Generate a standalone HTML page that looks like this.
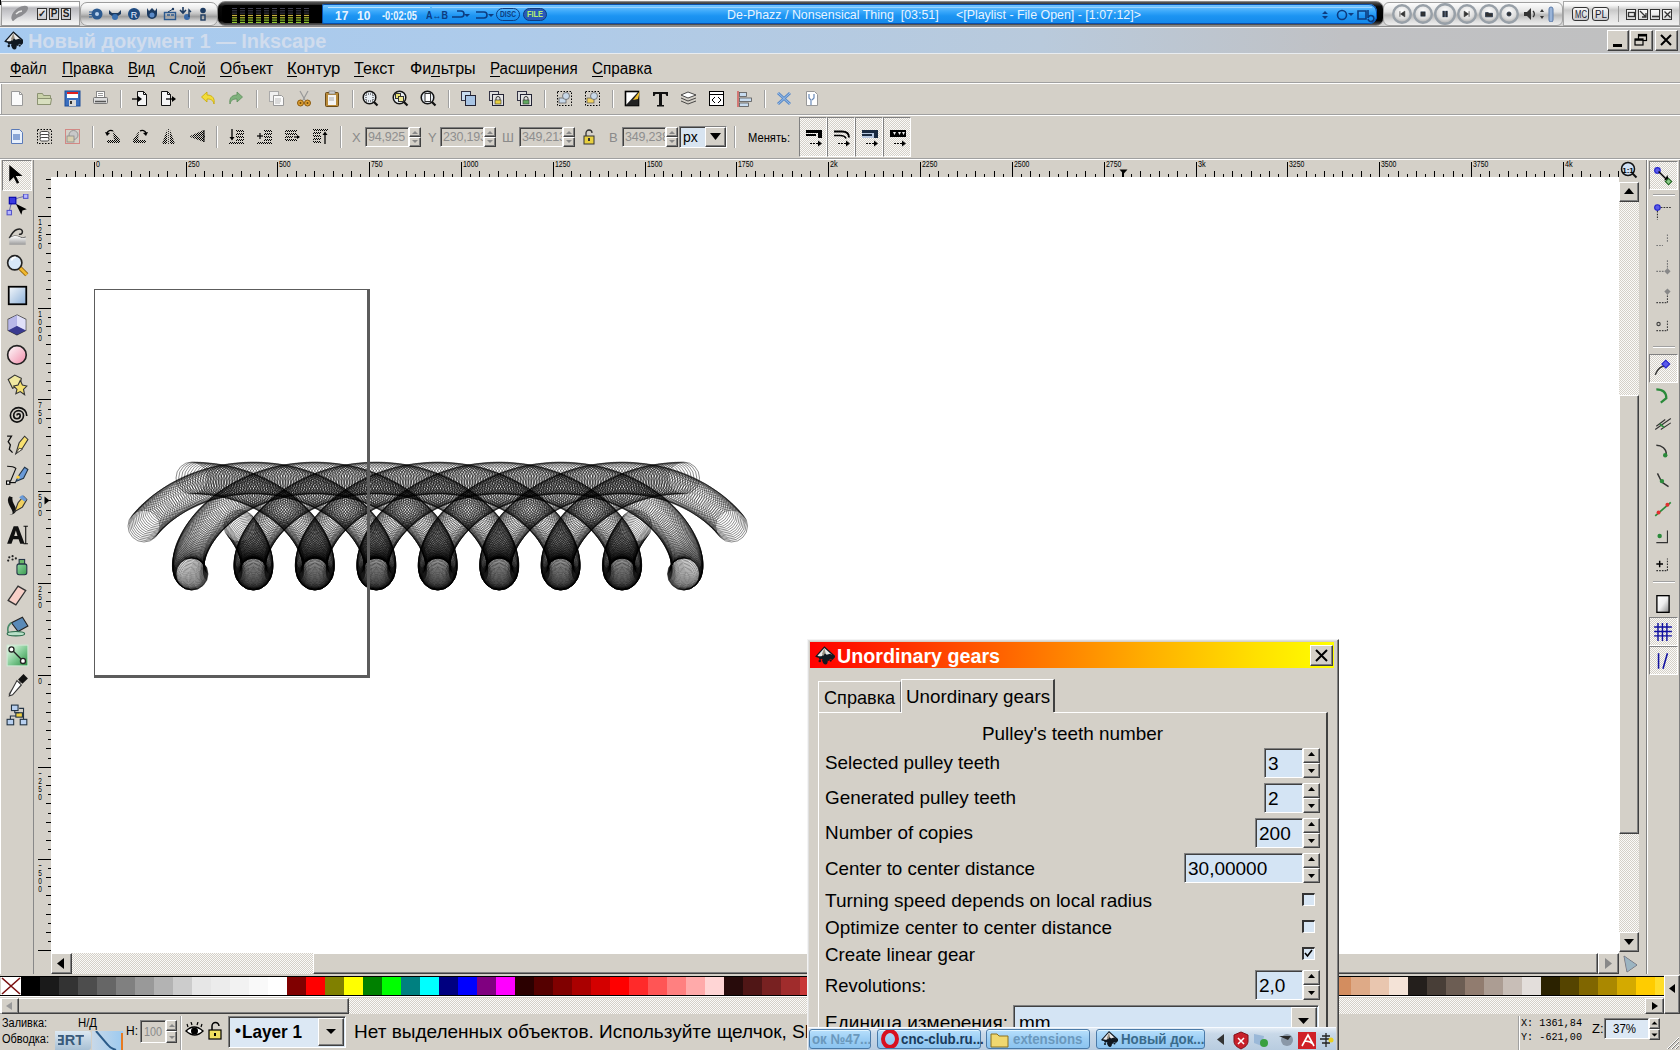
<!DOCTYPE html><html><head><meta charset="utf-8"><style>
html,body{margin:0;padding:0;width:1680px;height:1050px;overflow:hidden;background:#d4d0c8;font-family:"Liberation Sans", sans-serif;}
div,svg{font-family:"Liberation Sans", sans-serif;}
</style></head><body>
<svg width="0" height="0" style="position:absolute"><defs>
<linearGradient id="gBlue" x1="0" y1="0" x2="1" y2="1"><stop offset="0" stop-color="#f4f8fc"/><stop offset="1" stop-color="#8cb0d8"/></linearGradient>
<linearGradient id="gPink" x1="0" y1="0" x2="1" y2="1"><stop offset="0" stop-color="#fff"/><stop offset="1" stop-color="#f08aa8"/></linearGradient>
<linearGradient id="gGreen" x1="0" y1="0" x2="1" y2="1"><stop offset="0" stop-color="#8fd8a0"/><stop offset="1" stop-color="#3a9a50"/></linearGradient>
<linearGradient id="gBlueV" x1="0" y1="0" x2="0" y2="1"><stop offset="0" stop-color="#5db6ff"/><stop offset=".5" stop-color="#1c8ef2"/><stop offset="1" stop-color="#0a6ad8"/></linearGradient>
<linearGradient id="gGray" x1="0" y1="0" x2="0" y2="1"><stop offset="0" stop-color="#fff"/><stop offset="1" stop-color="#9a9a9a"/></linearGradient>
<radialGradient id="gBtn" cx=".5" cy=".35" r=".7"><stop offset="0" stop-color="#ffffff"/><stop offset=".6" stop-color="#dcdcdc"/><stop offset="1" stop-color="#9c9c9c"/></radialGradient>
<pattern id="pD" width="2" height="2" patternUnits="userSpaceOnUse"><rect width="1" height="1" fill="#000"/><rect x="1" y="1" width="1" height="1" fill="#000"/></pattern><pattern id="pChk" width="2" height="2" patternUnits="userSpaceOnUse"><rect width="2" height="2" fill="#fff"/><rect width="1" height="1" fill="#d4d0c8"/><rect x="1" y="1" width="1" height="1" fill="#d4d0c8"/></pattern>
</defs></svg>
<div style="position:absolute;left:0px;top:0px;width:1680px;height:27px;background:linear-gradient(#f6f6f6,#e4e4e4 50%,#cfcfcf);"></div>
<div style="position:absolute;left:0px;top:26px;width:1680px;height:1px;background:#8a8a8a"></div>
<div style="position:absolute;left:1px;top:1px;width:79px;height:25px;background:linear-gradient(#fbfbfb,#fff 14%,#b8b8bc 26%,#d0d0d4 55%,#ececec 85%,#f4f4f4);border:1px solid #9a9a9a;box-sizing:border-box"></div>
<div style="position:absolute;left:0px;top:0px;width:1px;height:5px;background:#000"></div>
<svg style="position:absolute;left:9px;top:5px;" width="22" height="18" viewBox="0 0 22 18"><path d="M3 15c-2-3 1-9 6-12s10-3 10 0-4 7-9 9-6 6-7 3z" fill="#8c8c90"/><path d="M7 9q3-3 6-3" stroke="#e8e8e8" stroke-width="1.6" fill="none"/></svg>
<div style="position:absolute;left:37px;top:8px;width:10px;height:12px;border:1px solid #333;box-sizing:border-box;background:linear-gradient(#e8e8e8,#c8c8cc)"></div>
<div style="position:absolute;left:37px;top:9px;font-size:10px;line-height:10px;color:#222;font-weight:bold;white-space:pre;width:10px;text-align:center">✓</div>
<div style="position:absolute;left:49px;top:8px;width:10px;height:12px;border:1px solid #333;box-sizing:border-box;background:linear-gradient(#e8e8e8,#c8c8cc)"></div>
<div style="position:absolute;left:49px;top:9px;font-size:10px;line-height:10px;color:#222;font-weight:bold;white-space:pre;width:10px;text-align:center">P</div>
<div style="position:absolute;left:61px;top:8px;width:10px;height:12px;border:1px solid #333;box-sizing:border-box;background:linear-gradient(#e8e8e8,#c8c8cc)"></div>
<div style="position:absolute;left:61px;top:9px;font-size:10px;line-height:10px;color:#222;font-weight:bold;white-space:pre;width:10px;text-align:center">S</div>
<div style="position:absolute;left:80px;top:2px;width:138px;height:24px;background:linear-gradient(#fdfdfd,#ececec 25%,#c4c4c4 48%,#9e9e9e 62%,#d0d0d0 80%,#f0f0f0);border:1px solid #9c9c9c;box-sizing:border-box;border-radius:7px"></div>
<svg style="position:absolute;left:89px;top:7px;" width="14" height="14" viewBox="0 0 14 14"><circle cx="8" cy="7" r="5.5" fill="#2c5a90"/><circle cx="8" cy="7" r="2" fill="#b8d0ec"/><path d="M0 5h3M0 7.5h3M0 10h3" stroke="#2c5a90" stroke-width="1.2"/></svg>
<svg style="position:absolute;left:108px;top:7px;" width="14" height="14" viewBox="0 0 14 14"><path d="M1 3l3 3h6l3-3v4l-3 2H4L1 7z" fill="#1c3a60"/><circle cx="7" cy="10" r="3" fill="#3a70b0"/></svg>
<svg style="position:absolute;left:127px;top:7px;" width="14" height="14" viewBox="0 0 14 14"><circle cx="7" cy="7" r="6" fill="#1e4a80"/><text x="7" y="10.5" font-size="9" text-anchor="middle" fill="#e8f0ff" font-family="Liberation Sans">R</text></svg>
<svg style="position:absolute;left:145px;top:7px;" width="14" height="14" viewBox="0 0 14 14"><path d="M2 1l2 3 3-3 3 3 2-3v6a5 5 0 01-10 0z" fill="#1c3a60"/><circle cx="7" cy="8" r="2.5" fill="#5a8ac8"/></svg>
<svg style="position:absolute;left:163px;top:7px;" width="14" height="14" viewBox="0 0 14 14"><rect x="1.5" y="5.5" width="11" height="7" fill="none" stroke="#2c5a90" stroke-width="1.4"/><path d="M4 8h3M8 8h3" stroke="#2c5a90" stroke-width="1.3"/><path d="M5 5l5-3" stroke="#1c3a60"/><circle cx="10" cy="2" r="1.2" fill="#1c3a60"/></svg>
<svg style="position:absolute;left:179px;top:7px;" width="14" height="14" viewBox="0 0 14 14"><path d="M4 0v5M1 3l3 3 3-3" fill="none" stroke="#1c3a60" stroke-width="1.6"/><circle cx="8" cy="10" r="3" fill="#3a6aa8"/><path d="M10 10V3l2 2" fill="none" stroke="#1c3a60" stroke-width="1.4"/></svg>
<svg style="position:absolute;left:196px;top:7px;" width="14" height="14" viewBox="0 0 14 14"><circle cx="7" cy="3.5" r="2.8" fill="#1c3a60"/><rect x="5" y="8" width="4" height="5" fill="none" stroke="#1c3a60" stroke-width="1.4"/></svg>
<div style="position:absolute;left:217px;top:1px;width:1167px;height:25px;background:linear-gradient(#5a5a5a,#0a0a0a 20%,#000 80%,#5a5a5a);border:1px solid #888;box-sizing:border-box;border-radius:8px"></div>
<div style="position:absolute;left:222px;top:5px;width:102px;height:18px;background:#000;border-radius:4px 0 0 4px"></div>
<svg style="position:absolute;left:222px;top:5px;" width="102" height="18" viewBox="0 0 102 18"><rect x="10" y="3.0" width="5" height="1" fill="#404050"/><rect x="10" y="5.3" width="5" height="1" fill="#404050"/><rect x="10" y="7.6" width="5" height="1" fill="#404050"/><rect x="10" y="9.9" width="5" height="1.2" fill="#c8b040"/><rect x="10" y="12.2" width="5" height="1.2" fill="#b8c830"/><rect x="10" y="14.5" width="5" height="1.2" fill="#90c830"/><rect x="10" y="16.8" width="5" height="1.2" fill="#90c830"/><rect x="18" y="3.0" width="5" height="1" fill="#404050"/><rect x="18" y="5.3" width="5" height="1" fill="#404050"/><rect x="18" y="7.6" width="5" height="1" fill="#404050"/><rect x="18" y="9.9" width="5" height="1.2" fill="#c8b040"/><rect x="18" y="12.2" width="5" height="1.2" fill="#b8c830"/><rect x="18" y="14.5" width="5" height="1.2" fill="#90c830"/><rect x="18" y="16.8" width="5" height="1.2" fill="#90c830"/><rect x="26" y="3.0" width="5" height="1" fill="#404050"/><rect x="26" y="5.3" width="5" height="1" fill="#404050"/><rect x="26" y="7.6" width="5" height="1" fill="#404050"/><rect x="26" y="9.9" width="5" height="1.2" fill="#c8b040"/><rect x="26" y="12.2" width="5" height="1.2" fill="#b8c830"/><rect x="26" y="14.5" width="5" height="1.2" fill="#90c830"/><rect x="26" y="16.8" width="5" height="1.2" fill="#90c830"/><rect x="34" y="3.0" width="5" height="1" fill="#404050"/><rect x="34" y="5.3" width="5" height="1" fill="#404050"/><rect x="34" y="7.6" width="5" height="1" fill="#404050"/><rect x="34" y="9.9" width="5" height="1.2" fill="#c8b040"/><rect x="34" y="12.2" width="5" height="1.2" fill="#b8c830"/><rect x="34" y="14.5" width="5" height="1.2" fill="#90c830"/><rect x="34" y="16.8" width="5" height="1.2" fill="#90c830"/><rect x="42" y="3.0" width="5" height="1" fill="#404050"/><rect x="42" y="5.3" width="5" height="1" fill="#404050"/><rect x="42" y="7.6" width="5" height="1" fill="#404050"/><rect x="42" y="9.9" width="5" height="1.2" fill="#c8b040"/><rect x="42" y="12.2" width="5" height="1.2" fill="#b8c830"/><rect x="42" y="14.5" width="5" height="1.2" fill="#90c830"/><rect x="42" y="16.8" width="5" height="1.2" fill="#90c830"/><rect x="50" y="3.0" width="5" height="1" fill="#404050"/><rect x="50" y="5.3" width="5" height="1" fill="#404050"/><rect x="50" y="7.6" width="5" height="1" fill="#404050"/><rect x="50" y="9.9" width="5" height="1.2" fill="#c8b040"/><rect x="50" y="12.2" width="5" height="1.2" fill="#b8c830"/><rect x="50" y="14.5" width="5" height="1.2" fill="#90c830"/><rect x="50" y="16.8" width="5" height="1.2" fill="#90c830"/><rect x="58" y="3.0" width="5" height="1" fill="#404050"/><rect x="58" y="5.3" width="5" height="1" fill="#404050"/><rect x="58" y="7.6" width="5" height="1" fill="#404050"/><rect x="58" y="9.9" width="5" height="1.2" fill="#c8b040"/><rect x="58" y="12.2" width="5" height="1.2" fill="#b8c830"/><rect x="58" y="14.5" width="5" height="1.2" fill="#90c830"/><rect x="58" y="16.8" width="5" height="1.2" fill="#90c830"/><rect x="66" y="3.0" width="5" height="1" fill="#404050"/><rect x="66" y="5.3" width="5" height="1" fill="#404050"/><rect x="66" y="7.6" width="5" height="1" fill="#404050"/><rect x="66" y="9.9" width="5" height="1.2" fill="#c8b040"/><rect x="66" y="12.2" width="5" height="1.2" fill="#b8c830"/><rect x="66" y="14.5" width="5" height="1.2" fill="#90c830"/><rect x="66" y="16.8" width="5" height="1.2" fill="#90c830"/><rect x="74" y="3.0" width="5" height="1" fill="#404050"/><rect x="74" y="5.3" width="5" height="1" fill="#404050"/><rect x="74" y="7.6" width="5" height="1" fill="#404050"/><rect x="74" y="9.9" width="5" height="1.2" fill="#c8b040"/><rect x="74" y="12.2" width="5" height="1.2" fill="#b8c830"/><rect x="74" y="14.5" width="5" height="1.2" fill="#90c830"/><rect x="74" y="16.8" width="5" height="1.2" fill="#90c830"/><rect x="82" y="3.0" width="5" height="1" fill="#404050"/><rect x="82" y="5.3" width="5" height="1" fill="#404050"/><rect x="82" y="7.6" width="5" height="1" fill="#404050"/><rect x="82" y="9.9" width="5" height="1.2" fill="#c8b040"/><rect x="82" y="12.2" width="5" height="1.2" fill="#b8c830"/><rect x="82" y="14.5" width="5" height="1.2" fill="#90c830"/><rect x="82" y="16.8" width="5" height="1.2" fill="#90c830"/></svg>
<div style="position:absolute;left:322px;top:4px;width:1055px;height:20px;background:linear-gradient(#7ccaff,#36a6fa 40%,#1c94f2 60%,#1488ea);border-radius:2px 8px 8px 2px;box-shadow:inset 0 0 0 1px #0850b0"></div>
<div style="position:absolute;left:328px;top:7px;width:102px;height:1px;background:#bfe4ff"></div>
<div style="position:absolute;left:432px;top:7px;width:940px;height:1px;background:#9fd4ff"></div>
<div style="position:absolute;left:335px;top:10px;font-size:12px;line-height:12px;color:#e8f4ff;font-weight:bold;white-space:pre;">17</div>
<div style="position:absolute;left:357px;top:10px;font-size:12px;line-height:12px;color:#e8f4ff;font-weight:bold;white-space:pre;">10</div>
<div style="position:absolute;left:382px;top:10px;font-size:12px;line-height:12px;color:#e8f4ff;font-weight:bold;white-space:pre;transform:scaleX(0.7716);transform-origin:0 0;">-0:02:05</div>
<div style="position:absolute;left:426px;top:10px;font-size:11px;line-height:11px;color:#0c3c80;font-weight:bold;white-space:pre;transform:scaleX(0.8186);transform-origin:0 0;">A↔B</div>
<svg style="position:absolute;left:450px;top:8px;" width="46" height="14" viewBox="0 0 46 14"><path d="M2 9h9a3 3 0 000-6H7" fill="none" stroke="#0c3c80" stroke-width="1.6"/><path d="M14 6l3 3 3-3z" fill="#0c3c80"/><path d="M26 4h8a3 3 0 010 6h-8" fill="none" stroke="#0c3c80" stroke-width="1.6"/><path d="M38 6l3 3 3-3z" fill="#0c3c80"/></svg>
<div style="position:absolute;left:496px;top:8px;width:24px;height:13px;border:1px solid #0c3c80;border-radius:7px;box-sizing:border-box"></div>
<div style="position:absolute;left:500px;top:10px;font-size:9px;line-height:9px;color:#0c3c80;font-weight:bold;white-space:pre;transform:scaleX(0.7442);transform-origin:0 0;">DISC</div>
<div style="position:absolute;left:523px;top:8px;width:24px;height:13px;background:#2a5ab8;border:1px solid #0c3c80;border-radius:7px;box-sizing:border-box"></div>
<div style="position:absolute;left:527px;top:10px;font-size:9px;line-height:9px;color:#b8f070;font-weight:bold;white-space:pre;transform:scaleX(0.8205);transform-origin:0 0;">FILE</div>
<div style="position:absolute;left:727px;top:8px;font-size:13px;line-height:13px;color:#e8f4ff;font-weight:normal;white-space:pre;transform:scaleX(0.9553);transform-origin:0 0;">De-Phazz / Nonsensical Thing  [03:51]     &lt;[Playlist - File Open] - [1:07:12]&gt;</div>
<svg style="position:absolute;left:1320px;top:7px;" width="60" height="16" viewBox="0 0 60 16"><path d="M5 4l-3 3h6zM5 12l-3-3h6z" fill="#0c3c80"/><circle cx="22" cy="8" r="4.5" fill="none" stroke="#0c3c80" stroke-width="1.6"/><path d="M28 6l3 3 3-3z" fill="#0c3c80"/><path d="M38 4h8v8h-8z" fill="none" stroke="#0c3c80" stroke-width="1.6"/><path d="M48 12a3 3 0 100-1V3" stroke="#0c3c80" stroke-width="1.6" fill="none"/></svg>
<div style="position:absolute;left:1383px;top:2px;width:180px;height:24px;background:linear-gradient(#fdfdfd,#e4e4e4 40%,#b8b8b8 55%,#dcdcdc 80%,#eeeeee);border:1px solid #a0a0a0;box-sizing:border-box;border-radius:6px"></div>
<svg style="position:absolute;left:1391px;top:3px;" width="22" height="22" viewBox="0 0 22 22"><circle cx="11" cy="11" r="8.8" fill="url(#gBtn)" stroke="#98a0a8" stroke-width="2.4"/><g transform="translate(5.4,5.4) scale(.7)" fill="#1a2a40" stroke="#1a2a40"><path d="M5 4v8M12 4L6 8l6 4z" fill="#333" stroke="#333"/></g></svg>
<svg style="position:absolute;left:1412px;top:3px;" width="22" height="22" viewBox="0 0 22 22"><circle cx="11" cy="11" r="8.8" fill="url(#gBtn)" stroke="#98a0a8" stroke-width="2.4"/><g transform="translate(5.4,5.4) scale(.7)" fill="#1a2a40" stroke="#1a2a40"><rect x="5" y="5" width="6" height="6" fill="#333"/></g></svg>
<svg style="position:absolute;left:1434px;top:3px;" width="22" height="22" viewBox="0 0 22 22"><circle cx="11" cy="11" r="9.8" fill="url(#gBtn)" stroke="#98a0a8" stroke-width="2.4"/><g transform="translate(5.4,5.4) scale(.7)" fill="#1a2a40" stroke="#1a2a40"><rect x="5" y="4" width="2.2" height="8" fill="#333"/><rect x="9" y="4" width="2.2" height="8" fill="#333"/></g></svg>
<svg style="position:absolute;left:1456px;top:3px;" width="22" height="22" viewBox="0 0 22 22"><circle cx="11" cy="11" r="8.8" fill="url(#gBtn)" stroke="#98a0a8" stroke-width="2.4"/><g transform="translate(5.4,5.4) scale(.7)" fill="#1a2a40" stroke="#1a2a40"><path d="M11 4v8M4 4l6 4-6 4z" fill="#333" stroke="#333"/></g></svg>
<svg style="position:absolute;left:1478px;top:3px;" width="22" height="22" viewBox="0 0 22 22"><circle cx="11" cy="11" r="8.8" fill="url(#gBtn)" stroke="#98a0a8" stroke-width="2.4"/><g transform="translate(5.4,5.4) scale(.7)" fill="#1a2a40" stroke="#1a2a40"><path d="M3 6h4l1 1h5v5H3z" fill="#333"/></g></svg>
<svg style="position:absolute;left:1498px;top:3px;" width="22" height="22" viewBox="0 0 22 22"><circle cx="11" cy="11" r="8.8" fill="url(#gBtn)" stroke="#98a0a8" stroke-width="2.4"/><g transform="translate(5.4,5.4) scale(.7)" fill="#1a2a40" stroke="#1a2a40"><circle cx="8" cy="8" r="3" fill="#333"/></g></svg>
<svg style="position:absolute;left:1522px;top:6px;" width="36" height="16" viewBox="0 0 36 16"><path d="M2 6h3l4-4v12l-4-4H2z" fill="#333"/><path d="M11 5a4 4 0 010 6" fill="none" stroke="#333" stroke-width="1.3"/><path d="M18 6l2-3 2 3zM18 10l2 3 2-3z" fill="#333"/><rect x="27" y="1" width="4" height="15" rx="2" fill="#9ab4d8" stroke="#5a7aa8"/></svg>
<div style="position:absolute;left:1563px;top:1px;width:117px;height:25px;background:linear-gradient(#fff,#f4f4f4 15%,#c8c8c8 35%,#dedede 60%,#f0f0f0);border:1px solid #a8a8a8;box-sizing:border-box"></div>
<div style="position:absolute;left:1572px;top:7px;width:17px;height:14px;background:linear-gradient(#f8f8f8,#c8c8cc);border:1.5px solid #333;border-radius:3px;box-sizing:border-box"></div>
<div style="position:absolute;left:1574.5px;top:9.5px;font-size:10px;line-height:10px;color:#1a2030;font-weight:normal;white-space:pre;transform:scaleX(0.7719);transform-origin:0 0;">MC</div>
<div style="position:absolute;left:1592px;top:7px;width:17px;height:14px;background:linear-gradient(#f8f8f8,#c8c8cc);border:1.5px solid #333;border-radius:3px;box-sizing:border-box"></div>
<div style="position:absolute;left:1594.5px;top:9.5px;font-size:10px;line-height:10px;color:#1a2030;font-weight:normal;white-space:pre;transform:scaleX(0.9808);transform-origin:0 0;">PL</div>
<div style="position:absolute;left:1618px;top:6px;width:1px;height:16px;background:#999"></div>
<div style="position:absolute;left:1626px;top:9px;width:10px;height:11px;border:1px solid #333;box-sizing:border-box;background:linear-gradient(#fafafa,#d8d8d8)"></div>
<svg style="position:absolute;left:1625.5px;top:9px;" width="11" height="11" viewBox="0 0 11 11"><rect x="2.5" y="3.5" width="6" height="4" fill="none" stroke="#333" stroke-width="1.3"/></svg>
<div style="position:absolute;left:1638px;top:9px;width:10px;height:11px;border:1px solid #333;box-sizing:border-box;background:linear-gradient(#fafafa,#d8d8d8)"></div>
<svg style="position:absolute;left:1637.5px;top:9px;" width="11" height="11" viewBox="0 0 11 11"><path d="M2 2l6 6M4 8h4V4" fill="none" stroke="#333" stroke-width="1.3"/></svg>
<div style="position:absolute;left:1650px;top:9px;width:10px;height:11px;border:1px solid #333;box-sizing:border-box;background:linear-gradient(#fafafa,#d8d8d8)"></div>
<svg style="position:absolute;left:1649.5px;top:9px;" width="11" height="11" viewBox="0 0 11 11"><path d="M2 7.5h7" stroke="#333" stroke-width="1.6"/></svg>
<div style="position:absolute;left:1662px;top:9px;width:10px;height:11px;border:1px solid #333;box-sizing:border-box;background:linear-gradient(#fafafa,#d8d8d8)"></div>
<svg style="position:absolute;left:1661.5px;top:9px;" width="11" height="11" viewBox="0 0 11 11"><path d="M2.5 2.5l6 6M8.5 2.5l-6 6" stroke="#333" stroke-width="1.3"/></svg>
<div style="position:absolute;left:0px;top:27px;width:1680px;height:1px;background:#f0f0f0"></div>
<div style="position:absolute;left:0px;top:28px;width:1680px;height:26px;background:linear-gradient(90deg,#a6caf0 0%,#aecbea 30%,#b9cadc 62%,#c0c1c4 80%,#c0c0c0 100%)"></div>
<div style="position:absolute;left:28px;top:31px;font-size:20px;line-height:20px;color:#d0dced;font-weight:bold;white-space:pre;letter-spacing:-0.1px">Новый документ 1 — Inkscape</div>
<svg style="position:absolute;left:3px;top:30px;" width="20" height="21" viewBox="0 0 20 21"><g transform="scale(1.15)"><path d="M9 1L1 10q1 1 3 1l1 2 2-1 1 3 2 1 1-3 2 1 1-2 2 1 3-3z" fill="#101820"/><path d="M9 2.5L3 9.3q2 .8 4 .2l2-3 2 2 3-1 2 1.5z" fill="#e8e8e8"/><path d="M9 2.5l-2 5 1 2 2-3z" fill="#9a9080"/><circle cx="5" cy="14" r="1.1" fill="#101820"/><circle cx="14.5" cy="13.5" r="1" fill="#101820"/><path d="M7 13q1 4 3 4 2 0 2-4" fill="#101820"/></g></svg>
<div style="position:absolute;left:0px;top:53px;width:1680px;height:1px;background:#e8ecf0"></div>
<div style="position:absolute;left:1607px;top:30px;width:22px;height:21px;background:#d4d0c8;box-sizing:border-box;border-top:1px solid #fff;border-left:1px solid #fff;border-right:1px solid #404040;border-bottom:1px solid #404040;box-shadow:inset -1px -1px 0 #808080;"></div>
<div style="position:absolute;left:1613px;top:44px;width:9px;height:3px;background:#000"></div>
<div style="position:absolute;left:1630px;top:30px;width:23px;height:21px;background:#d4d0c8;box-sizing:border-box;border-top:1px solid #fff;border-left:1px solid #fff;border-right:1px solid #404040;border-bottom:1px solid #404040;box-shadow:inset -1px -1px 0 #808080;"></div>
<svg style="position:absolute;left:1633px;top:33px;" width="17" height="15" viewBox="0 0 17 15"><rect x="5.5" y="1.5" width="8" height="6" fill="none" stroke="#000" stroke-width="1.2"/><path d="M5 2.5h9" stroke="#000" stroke-width="2"/><rect x="2" y="6" width="8" height="6" fill="#d4d0c8" stroke="#000" stroke-width="1.2"/><path d="M2 6.8h8" stroke="#000" stroke-width="2"/></svg>
<div style="position:absolute;left:1655px;top:30px;width:23px;height:21px;background:#d4d0c8;box-sizing:border-box;border-top:1px solid #fff;border-left:1px solid #fff;border-right:1px solid #404040;border-bottom:1px solid #404040;box-shadow:inset -1px -1px 0 #808080;"></div>
<svg style="position:absolute;left:1658px;top:33px;" width="17" height="15" viewBox="0 0 17 15"><path d="M3 2l10 10M13 2L3 12" stroke="#000" stroke-width="2"/></svg>
<div style="position:absolute;left:0px;top:54px;width:1680px;height:28px;background:#d4d0c8"></div>
<div style="position:absolute;left:0px;top:82px;width:1680px;height:1px;background:#a0a0a0"></div>
<div style="position:absolute;left:0px;top:83px;width:1680px;height:1px;background:#fff"></div>
<div style="position:absolute;left:10px;top:61px;font-size:16px;line-height:16px;color:#000;font-weight:normal;white-space:pre;transform:scaleX(0.9324);transform-origin:0 0;">Файл</div>
<div style="position:absolute;left:10px;top:76px;width:11px;height:1px;background:#000"></div>
<div style="position:absolute;left:61.7px;top:61px;font-size:16px;line-height:16px;color:#000;font-weight:normal;white-space:pre;transform:scaleX(0.9542);transform-origin:0 0;">Правка</div>
<div style="position:absolute;left:62px;top:76px;width:11px;height:1px;background:#000"></div>
<div style="position:absolute;left:127.7px;top:61px;font-size:16px;line-height:16px;color:#000;font-weight:normal;white-space:pre;transform:scaleX(0.9187);transform-origin:0 0;">Вид</div>
<div style="position:absolute;left:128px;top:76px;width:10px;height:1px;background:#000"></div>
<div style="position:absolute;left:169px;top:61px;font-size:16px;line-height:16px;color:#000;font-weight:normal;white-space:pre;transform:scaleX(0.9425);transform-origin:0 0;">Слой</div>
<div style="position:absolute;left:197px;top:76px;width:8px;height:1px;background:#000"></div>
<div style="position:absolute;left:220px;top:61px;font-size:16px;line-height:16px;color:#000;font-weight:normal;white-space:pre;transform:scaleX(0.9777);transform-origin:0 0;">Объект</div>
<div style="position:absolute;left:220px;top:76px;width:12px;height:1px;background:#000"></div>
<div style="position:absolute;left:287.3px;top:61px;font-size:16px;line-height:16px;color:#000;font-weight:normal;white-space:pre;transform:scaleX(1.0404);transform-origin:0 0;">Контур</div>
<div style="position:absolute;left:287px;top:76px;width:10px;height:1px;background:#000"></div>
<div style="position:absolute;left:354.3px;top:61px;font-size:16px;line-height:16px;color:#000;font-weight:normal;white-space:pre;transform:scaleX(1.0096);transform-origin:0 0;">Текст</div>
<div style="position:absolute;left:354px;top:76px;width:10px;height:1px;background:#000"></div>
<div style="position:absolute;left:410px;top:61px;font-size:16px;line-height:16px;color:#000;font-weight:normal;white-space:pre;transform:scaleX(1.0064);transform-origin:0 0;">Фильтры</div>
<div style="position:absolute;left:431px;top:76px;width:9px;height:1px;background:#000"></div>
<div style="position:absolute;left:490px;top:61px;font-size:16px;line-height:16px;color:#000;font-weight:normal;white-space:pre;transform:scaleX(0.9421);transform-origin:0 0;">Расширения</div>
<div style="position:absolute;left:490px;top:76px;width:10px;height:1px;background:#000"></div>
<div style="position:absolute;left:591.7px;top:61px;font-size:16px;line-height:16px;color:#000;font-weight:normal;white-space:pre;transform:scaleX(0.9552);transform-origin:0 0;">Справка</div>
<div style="position:absolute;left:592px;top:76px;width:11px;height:1px;background:#000"></div>
<div style="position:absolute;left:0px;top:114px;width:1680px;height:1px;background:#a0a0a0"></div>
<div style="position:absolute;left:0px;top:115px;width:1680px;height:1px;background:#fff"></div>
<div style="position:absolute;left:0px;top:84px;width:3px;height:30px;background:linear-gradient(90deg,#fff 1px,#a0a0a0 1px 2px,transparent 2px)"></div>
<svg style="position:absolute;left:8px;top:90px;" width="17" height="17" viewBox="0 0 17 17"><path d="M3.5 1.5h8l3 3v11h-11z" fill="#fbfbfb" stroke="#9a9a9a"/><path d="M11.5 1.5v3h3" fill="none" stroke="#9a9a9a"/></svg>
<svg style="position:absolute;left:36px;top:90px;" width="17" height="17" viewBox="0 0 17 17"><path d="M1.5 3.5h5l1 2h7v9h-13z" fill="#c9d1a9" stroke="#8b9272"/><path d="M1.5 8.5h14l-1 6h-13z" fill="#d8dfbf" stroke="#8b9272"/></svg>
<svg style="position:absolute;left:64px;top:90px;" width="17" height="17" viewBox="0 0 17 17"><rect x="1" y="1" width="15" height="15" fill="#3a6fbf" stroke="#1c4c98"/><rect x="3" y="2" width="11" height="6" fill="#fff"/><rect x="3" y="2" width="11" height="2" fill="#e02020"/><rect x="5" y="10" width="7" height="6" fill="#d8d8d8"/><rect x="6" y="11" width="2" height="3" fill="#333"/></svg>
<svg style="position:absolute;left:92px;top:90px;" width="17" height="17" viewBox="0 0 17 17"><rect x="4.5" y="1.5" width="8" height="6" fill="#fff" stroke="#888"/><path d="M6 3.5h5M6 5.5h5" stroke="#999"/><rect x="1.5" y="7.5" width="14" height="6" rx="1" fill="#ddd" stroke="#777"/><path d="M3 11.5h11" stroke="#555" stroke-width="1.5"/></svg>
<svg style="position:absolute;left:132px;top:90px;" width="17" height="17" viewBox="0 0 17 17"><path d="M5.5 1.5h6l3 3v11h-9z" fill="#f4f4f4" stroke="#111"/><path d="M11.5 1.5v3h3" fill="none" stroke="#111"/><path d="M0 9h8" stroke="#000" stroke-width="1.3"/><path d="M6 6l4 3-4 3z" fill="#000"/></svg>
<svg style="position:absolute;left:160px;top:90px;" width="17" height="17" viewBox="0 0 17 17"><path d="M1.5 1.5h6l3 3v11h-9z" fill="#f4f4f4" stroke="#111"/><path d="M7.5 1.5v3h3" fill="none" stroke="#111"/><path d="M6 9h7" stroke="#000" stroke-width="1.3"/><path d="M12 6l4 3-4 3z" fill="#000"/></svg>
<svg style="position:absolute;left:200px;top:90px;" width="17" height="17" viewBox="0 0 17 17"><path d="M7 2L1.5 7 7 12V9c4 0 6 1 7 5 1-5-1-9-7-9z" fill="#f2dc3a" stroke="#c8a800" stroke-width=".8"/></svg>
<svg style="position:absolute;left:228px;top:90px;" width="17" height="17" viewBox="0 0 17 17"><path d="M9 2l5.5 5L9 12V9c-4 0-6 1-7 5-1-5 1-9 7-9z" fill="#6aaa6a" stroke="#3f7f3f" stroke-width=".8" opacity=".8"/></svg>
<svg style="position:absolute;left:268px;top:90px;" width="17" height="17" viewBox="0 0 17 17"><rect x="1.5" y="1.5" width="9" height="10" fill="#f0f0f0" stroke="#aaa"/><path d="M5.5 5.5h8l2 2v8h-10z" fill="#fafafa" stroke="#999"/><path d="M7 9h6M7 11h6M7 13h5" stroke="#bbb"/></svg>
<svg style="position:absolute;left:296px;top:90px;" width="17" height="17" viewBox="0 0 17 17"><path d="M4 1l5 9M12 1L7 10" stroke="#999" stroke-width="1.2"/><circle cx="4.5" cy="13" r="3" fill="#e0a030" stroke="#8a5a10"/><circle cx="11.5" cy="13" r="3" fill="#e0a030" stroke="#8a5a10"/><circle cx="4.5" cy="13" r="1" fill="#6a4a10"/><circle cx="11.5" cy="13" r="1" fill="#6a4a10"/></svg>
<svg style="position:absolute;left:324px;top:90px;" width="17" height="17" viewBox="0 0 17 17"><rect x="1.5" y="2.5" width="13" height="14" rx="1" fill="#b88a3a" stroke="#6a4a18"/><rect x="4" y="5" width="8" height="10" fill="#f4f4f4"/><rect x="5" y="1" width="6" height="3" fill="#ccc" stroke="#777" stroke-width=".6"/><path d="M5 8h5M5 10h5" stroke="#aaa"/></svg>
<svg style="position:absolute;left:362px;top:90px;" width="17" height="17" viewBox="0 0 17 17"><circle cx="7.5" cy="7.5" r="6.3" fill="#e8eef4" stroke="#111" stroke-width="1.5"/><rect x="4" y="4" width="7" height="7" fill="none" stroke="#222" stroke-dasharray="1 1"/><path d="M12 12l3.5 3.5" stroke="#111" stroke-width="2.2"/></svg>
<svg style="position:absolute;left:392px;top:90px;" width="17" height="17" viewBox="0 0 17 17"><circle cx="7.5" cy="7.5" r="6.3" fill="#e8eef4" stroke="#111" stroke-width="1.5"/><rect x="3.5" y="3.5" width="5" height="5" fill="#e8e070" stroke="#333"/><rect x="6.5" y="6.5" width="5" height="5" fill="#f0e890" stroke="#333"/><path d="M12 12l3.5 3.5" stroke="#111" stroke-width="2.2"/></svg>
<svg style="position:absolute;left:420px;top:90px;" width="17" height="17" viewBox="0 0 17 17"><circle cx="7.5" cy="7.5" r="6.3" fill="#e8eef4" stroke="#111" stroke-width="1.5"/><rect x="5" y="3.5" width="5.5" height="8" fill="#fff" stroke="#333"/><path d="M12 12l3.5 3.5" stroke="#111" stroke-width="2.2"/></svg>
<svg style="position:absolute;left:460px;top:90px;" width="17" height="17" viewBox="0 0 17 17"><rect x="1.5" y="1.5" width="9" height="9" fill="#c8dcf0" stroke="#334"/><rect x="5.5" y="5.5" width="10" height="10" fill="#a8c4e4" stroke="#223"/></svg>
<svg style="position:absolute;left:488px;top:90px;" width="17" height="17" viewBox="0 0 17 17"><rect x="1.5" y="1.5" width="9" height="9" fill="#ddd" stroke="#334"/><rect x="4.5" y="4.5" width="11" height="11" fill="#e4e4e4" stroke="#223"/><rect x="7" y="10" width="6" height="4" fill="#e8d040" stroke="#333" stroke-width=".6"/><path d="M8 10V8.5a2 2 0 014 0V10" fill="none" stroke="#333"/></svg>
<svg style="position:absolute;left:516px;top:90px;" width="17" height="17" viewBox="0 0 17 17"><rect x="1.5" y="1.5" width="9" height="9" fill="#ddd" stroke="#334"/><rect x="4.5" y="4.5" width="11" height="11" fill="#e4e4e4" stroke="#223"/><rect x="7" y="10" width="6" height="4" fill="#60a860" stroke="#333" stroke-width=".6"/><path d="M8 10V8.5a2 2 0 014 0V10" fill="none" stroke="#333"/></svg>
<svg style="position:absolute;left:556px;top:90px;" width="17" height="17" viewBox="0 0 17 17"><rect x="1.5" y="1.5" width="14" height="14" fill="none" stroke="#000" stroke-dasharray="1.5 1.5"/><rect x="3" y="8" width="7" height="5" fill="#c8d8e8" stroke="#555" stroke-width=".7"/><circle cx="10" cy="6" r="3.5" fill="#c8d8e8" stroke="#555" stroke-width=".7"/></svg>
<svg style="position:absolute;left:584px;top:90px;" width="17" height="17" viewBox="0 0 17 17"><rect x="1.5" y="1.5" width="14" height="14" fill="none" stroke="#000" stroke-dasharray="1.5 1.5"/><rect x="3" y="8" width="7" height="5" fill="#f0d060" stroke="#555" stroke-width=".7"/><circle cx="10" cy="6" r="3.5" fill="#c8d8e8" stroke="#555" stroke-width=".7"/></svg>
<svg style="position:absolute;left:624px;top:90px;" width="17" height="17" viewBox="0 0 17 17"><rect x="1.5" y="1.5" width="13" height="14" fill="#fff" stroke="#000" stroke-width="1.6"/><path d="M1.5 15.5L14.5 1.5V15.5z" fill="#222"/><path d="M9 10l7-9-2 8z" fill="#f0c030"/></svg>
<svg style="position:absolute;left:652px;top:90px;" width="17" height="17" viewBox="0 0 17 17"><path d="M1 2h15v4h-1.5l-1-2H10v11h2v1.5H5V15h2V4H3.5l-1 2H1z" fill="#111"/></svg>
<svg style="position:absolute;left:680px;top:90px;" width="17" height="17" viewBox="0 0 17 17"><path d="M1 5l7-3 8 3-8 3z" fill="#fff" stroke="#222" stroke-width=".8"/><path d="M1 8l7 3 8-3" fill="none" stroke="#222" stroke-width=".8"/><path d="M1 11l7 3 8-3" fill="none" stroke="#222" stroke-width=".8"/></svg>
<svg style="position:absolute;left:708px;top:90px;" width="17" height="17" viewBox="0 0 17 17"><rect x="1.5" y="1.5" width="14" height="14" fill="#fff" stroke="#000"/><path d="M1.5 4.5h14" stroke="#000"/><path d="M7 7l-3 3 3 3M10 7l3 3-3 3" fill="none" stroke="#000"/></svg>
<svg style="position:absolute;left:736px;top:90px;" width="17" height="17" viewBox="0 0 17 17"><path d="M2 1v16" stroke="#d02020"/><rect x="3.5" y="2.5" width="7" height="4" fill="#c8dcf0" stroke="#555" stroke-width=".8"/><rect x="3.5" y="8" width="12" height="3.5" fill="#c8dcf0" stroke="#555" stroke-width=".8"/><rect x="3.5" y="13" width="9" height="3.5" fill="#c8dcf0" stroke="#555" stroke-width=".8"/></svg>
<svg style="position:absolute;left:776px;top:90px;" width="17" height="17" viewBox="0 0 17 17"><path d="M2 3l12 11M14 3L2 14" stroke="#5a8ac8" stroke-width="3"/><path d="M2 3l12 11M14 3L2 14" stroke="#9ac0ea" stroke-width="1"/></svg>
<svg style="position:absolute;left:804px;top:90px;" width="17" height="17" viewBox="0 0 17 17"><path d="M2.5 1.5h8l3 3v11h-11z" fill="#fff" stroke="#999"/><path d="M5 4v4l2 2v5M10 4v4l-2 2" fill="none" stroke="#6a8ab8" stroke-width="1.2"/></svg>
<div style="position:absolute;left:120px;top:90px;width:1px;height:18px;background:#a0a0a0;box-shadow:1px 0 0 #fff"></div>
<div style="position:absolute;left:188px;top:90px;width:1px;height:18px;background:#a0a0a0;box-shadow:1px 0 0 #fff"></div>
<div style="position:absolute;left:256px;top:90px;width:1px;height:18px;background:#a0a0a0;box-shadow:1px 0 0 #fff"></div>
<div style="position:absolute;left:352px;top:90px;width:1px;height:18px;background:#a0a0a0;box-shadow:1px 0 0 #fff"></div>
<div style="position:absolute;left:448px;top:90px;width:1px;height:18px;background:#a0a0a0;box-shadow:1px 0 0 #fff"></div>
<div style="position:absolute;left:544px;top:90px;width:1px;height:18px;background:#a0a0a0;box-shadow:1px 0 0 #fff"></div>
<div style="position:absolute;left:612px;top:90px;width:1px;height:18px;background:#a0a0a0;box-shadow:1px 0 0 #fff"></div>
<div style="position:absolute;left:764px;top:90px;width:1px;height:18px;background:#a0a0a0;box-shadow:1px 0 0 #fff"></div>
<div style="position:absolute;left:0px;top:158px;width:1680px;height:1px;background:#a0a0a0"></div>
<div style="position:absolute;left:0px;top:159px;width:1680px;height:1px;background:#fff"></div>
<svg style="position:absolute;left:8px;top:128px;" width="17" height="17" viewBox="0 0 17 17"><path d="M3.5 1.5h8l3 3v11h-11z" fill="#e8f0fc" stroke="#5a7ab8"/><path d="M5 7h7M5 9h7M5 11h7" stroke="#2a5ab0" stroke-width="1.2"/></svg>
<svg style="position:absolute;left:36px;top:128px;" width="17" height="17" viewBox="0 0 17 17"><rect x="1.5" y="1.5" width="14" height="14" fill="none" stroke="#000" stroke-dasharray="1.5 1.5"/><g fill="#fff" stroke="#333" stroke-width=".9"><rect x="4" y="3.5" width="9" height="3.5" rx="1.7"/><rect x="4" y="6.5" width="9" height="3.5" rx="1.7"/><rect x="4" y="9.5" width="9" height="3.5" rx="1.7"/></g></svg>
<svg style="position:absolute;left:64px;top:128px;" width="17" height="17" viewBox="0 0 17 17"><rect x="1.5" y="1.5" width="14" height="14" fill="none" stroke="#d04040" stroke-dasharray="1 1"/><circle cx="9.5" cy="7" r="4.5" fill="#c8c8c8" stroke="#888" stroke-width=".8"/><rect x="3" y="8" width="7" height="6" fill="#d8d0b0" stroke="#888" stroke-width=".8"/></svg>
<svg style="position:absolute;left:104px;top:128px;" width="17" height="17" viewBox="0 0 17 17"><path d="M9 3l1 9h6z" fill="url(#pD)"/><path d="M3 12h13v3H3z" fill="url(#pD)"/><path d="M3 5a4 4 0 016-2" fill="none" stroke="#000" stroke-width="1.3"/><path d="M1 4l2 4 3-3z" fill="#000"/></svg>
<svg style="position:absolute;left:132px;top:128px;" width="17" height="17" viewBox="0 0 17 17"><path d="M7 3l-1 9H1z" fill="url(#pD)"/><path d="M1 12h13v3H1z" fill="url(#pD)"/><path d="M14 5a4 4 0 00-6-2" fill="none" stroke="#000" stroke-width="1.3"/><path d="M16 4l-2 4-3-3z" fill="#000"/></svg>
<svg style="position:absolute;left:160px;top:128px;" width="17" height="17" viewBox="0 0 17 17"><path d="M7 2v14H2z" fill="url(#pD)"/><path d="M10 2v14h5z" fill="url(#pD)"/><path d="M8.5 1v16" stroke="#333" stroke-dasharray="1 1"/></svg>
<svg style="position:absolute;left:188px;top:128px;" width="17" height="17" viewBox="0 0 17 17"><path d="M16 2v6H2z" fill="url(#pD)"/><path d="M16 14V9H2z" fill="url(#pD)"/><path d="M2 8.5h15" stroke="#333" stroke-dasharray="1 1"/><path d="M16 2v12" stroke="#000"/></svg>
<svg style="position:absolute;left:228px;top:128px;" width="17" height="17" viewBox="0 0 17 17"><path d="M8 2h8v2H8zM8 5h8v2H8zM8 8h8v2H8zM8 11h8v2H8z" fill="url(#pD)"/><path d="M1 14h15v2H1z" fill="url(#pD)"/><path d="M4 1v10" stroke="#000" stroke-width="1.3"/><path d="M1.5 9l2.5 3.5 2.5-3.5z" fill="#000"/></svg>
<svg style="position:absolute;left:256px;top:128px;" width="17" height="17" viewBox="0 0 17 17"><path d="M8 2h8v2H8zM8 5h8v2H8zM8 8h8v2H8zM8 11h8v2H8z" fill="url(#pD)"/><path d="M1 14h15v2H1z" fill="url(#pD)"/><path d="M1 8h6" stroke="#000" stroke-width="1.2"/><path d="M4 5v6" stroke="#000" stroke-width="1.2"/></svg>
<svg style="position:absolute;left:284px;top:128px;" width="17" height="17" viewBox="0 0 17 17"><path d="M1 2h12v2H1zM1 5h12v2H1zM1 8h8v2H1zM1 11h12v2H1z" fill="url(#pD)"/><path d="M10 9l5 0" stroke="#000" stroke-width="1.2"/><path d="M13 7l3 2-3 2z" fill="#000"/></svg>
<svg style="position:absolute;left:312px;top:128px;" width="17" height="17" viewBox="0 0 17 17"><path d="M1 1h15v2H1z" fill="url(#pD)"/><path d="M1 4h8v2H1zM1 7h8v2H1zM1 10h8v2H1zM1 13h8v2H1z" fill="url(#pD)"/><path d="M13 16V5" stroke="#000" stroke-width="1.3"/><path d="M10.5 7l2.5-3.5 2.5 3.5z" fill="#000"/></svg>
<div style="position:absolute;left:92px;top:126px;width:1px;height:22px;background:#a0a0a0;box-shadow:1px 0 0 #fff"></div>
<div style="position:absolute;left:216px;top:126px;width:1px;height:22px;background:#a0a0a0;box-shadow:1px 0 0 #fff"></div>
<div style="position:absolute;left:340px;top:126px;width:1px;height:22px;background:#a0a0a0;box-shadow:1px 0 0 #fff"></div>
<div style="position:absolute;left:734px;top:126px;width:1px;height:22px;background:#a0a0a0;box-shadow:1px 0 0 #fff"></div>
<div style="position:absolute;left:352px;top:131px;font-size:13px;line-height:13px;color:#8a8a8a;font-weight:normal;white-space:pre;">X</div>
<div style="position:absolute;left:365px;top:127px;width:44px;height:20px;background:#d4d0c8;box-sizing:border-box;border-top:1px solid #808080;border-left:1px solid #808080;border-right:1px solid #fff;border-bottom:1px solid #fff;box-shadow:inset 1px 1px 0 #404040;"></div>
<div style="position:absolute;left:368px;top:131.25px;font-size:12.5px;line-height:12.5px;color:#8e8e8e;font-weight:normal;white-space:pre;width:40px;overflow:hidden;letter-spacing:-0.2px">94,925</div>
<div style="position:absolute;left:409px;top:127px;width:12px;height:10px;background:#d4d0c8;box-sizing:border-box;border-top:1px solid #fff;border-left:1px solid #fff;border-right:1px solid #404040;border-bottom:1px solid #404040;box-shadow:inset -1px -1px 0 #808080;"></div>
<div style="position:absolute;left:409px;top:137px;width:12px;height:10px;background:#d4d0c8;box-sizing:border-box;border-top:1px solid #fff;border-left:1px solid #fff;border-right:1px solid #404040;border-bottom:1px solid #404040;box-shadow:inset -1px -1px 0 #808080;"></div>
<svg style="position:absolute;left:412px;top:130px;" width="6" height="4" viewBox="0 0 6 4"><path d="M0 4L3 1 6 4z" fill="#888"/></svg>
<svg style="position:absolute;left:412px;top:140px;" width="6" height="4" viewBox="0 0 6 4"><path d="M0 0L3 3 6 0z" fill="#888"/></svg>
<div style="position:absolute;left:428px;top:131px;font-size:13px;line-height:13px;color:#8a8a8a;font-weight:normal;white-space:pre;">Y</div>
<div style="position:absolute;left:440px;top:127px;width:44px;height:20px;background:#d4d0c8;box-sizing:border-box;border-top:1px solid #808080;border-left:1px solid #808080;border-right:1px solid #fff;border-bottom:1px solid #fff;box-shadow:inset 1px 1px 0 #404040;"></div>
<div style="position:absolute;left:443px;top:131.25px;font-size:12.5px;line-height:12.5px;color:#8e8e8e;font-weight:normal;white-space:pre;width:40px;overflow:hidden;letter-spacing:-0.2px">230,193</div>
<div style="position:absolute;left:484px;top:127px;width:12px;height:10px;background:#d4d0c8;box-sizing:border-box;border-top:1px solid #fff;border-left:1px solid #fff;border-right:1px solid #404040;border-bottom:1px solid #404040;box-shadow:inset -1px -1px 0 #808080;"></div>
<div style="position:absolute;left:484px;top:137px;width:12px;height:10px;background:#d4d0c8;box-sizing:border-box;border-top:1px solid #fff;border-left:1px solid #fff;border-right:1px solid #404040;border-bottom:1px solid #404040;box-shadow:inset -1px -1px 0 #808080;"></div>
<svg style="position:absolute;left:487px;top:130px;" width="6" height="4" viewBox="0 0 6 4"><path d="M0 4L3 1 6 4z" fill="#888"/></svg>
<svg style="position:absolute;left:487px;top:140px;" width="6" height="4" viewBox="0 0 6 4"><path d="M0 0L3 3 6 0z" fill="#888"/></svg>
<div style="position:absolute;left:502px;top:131px;font-size:13px;line-height:13px;color:#8a8a8a;font-weight:normal;white-space:pre;">Ш</div>
<div style="position:absolute;left:519px;top:127px;width:44px;height:20px;background:#d4d0c8;box-sizing:border-box;border-top:1px solid #808080;border-left:1px solid #808080;border-right:1px solid #fff;border-bottom:1px solid #fff;box-shadow:inset 1px 1px 0 #404040;"></div>
<div style="position:absolute;left:522px;top:131.25px;font-size:12.5px;line-height:12.5px;color:#8e8e8e;font-weight:normal;white-space:pre;width:40px;overflow:hidden;letter-spacing:-0.2px">349,213</div>
<div style="position:absolute;left:563px;top:127px;width:12px;height:10px;background:#d4d0c8;box-sizing:border-box;border-top:1px solid #fff;border-left:1px solid #fff;border-right:1px solid #404040;border-bottom:1px solid #404040;box-shadow:inset -1px -1px 0 #808080;"></div>
<div style="position:absolute;left:563px;top:137px;width:12px;height:10px;background:#d4d0c8;box-sizing:border-box;border-top:1px solid #fff;border-left:1px solid #fff;border-right:1px solid #404040;border-bottom:1px solid #404040;box-shadow:inset -1px -1px 0 #808080;"></div>
<svg style="position:absolute;left:566px;top:130px;" width="6" height="4" viewBox="0 0 6 4"><path d="M0 4L3 1 6 4z" fill="#888"/></svg>
<svg style="position:absolute;left:566px;top:140px;" width="6" height="4" viewBox="0 0 6 4"><path d="M0 0L3 3 6 0z" fill="#888"/></svg>
<svg style="position:absolute;left:582px;top:128px;" width="14" height="17" viewBox="0 0 14 17"><rect x="2" y="8" width="10" height="8" fill="#e8d040" stroke="#333"/><path d="M4 8V5a3 3 0 016 0" fill="none" stroke="#333" stroke-width="1.3"/><rect x="6" y="10" width="2" height="3" fill="#333"/></svg>
<div style="position:absolute;left:609px;top:131px;font-size:13px;line-height:13px;color:#8a8a8a;font-weight:normal;white-space:pre;">В</div>
<div style="position:absolute;left:622px;top:127px;width:44px;height:20px;background:#d4d0c8;box-sizing:border-box;border-top:1px solid #808080;border-left:1px solid #808080;border-right:1px solid #fff;border-bottom:1px solid #fff;box-shadow:inset 1px 1px 0 #404040;"></div>
<div style="position:absolute;left:625px;top:131.25px;font-size:12.5px;line-height:12.5px;color:#8e8e8e;font-weight:normal;white-space:pre;width:40px;overflow:hidden;letter-spacing:-0.2px">349,238</div>
<div style="position:absolute;left:666px;top:127px;width:12px;height:10px;background:#d4d0c8;box-sizing:border-box;border-top:1px solid #fff;border-left:1px solid #fff;border-right:1px solid #404040;border-bottom:1px solid #404040;box-shadow:inset -1px -1px 0 #808080;"></div>
<div style="position:absolute;left:666px;top:137px;width:12px;height:10px;background:#d4d0c8;box-sizing:border-box;border-top:1px solid #fff;border-left:1px solid #fff;border-right:1px solid #404040;border-bottom:1px solid #404040;box-shadow:inset -1px -1px 0 #808080;"></div>
<svg style="position:absolute;left:669px;top:130px;" width="6" height="4" viewBox="0 0 6 4"><path d="M0 4L3 1 6 4z" fill="#888"/></svg>
<svg style="position:absolute;left:669px;top:140px;" width="6" height="4" viewBox="0 0 6 4"><path d="M0 0L3 3 6 0z" fill="#888"/></svg>
<div style="position:absolute;left:679px;top:126px;width:48px;height:22px;background:#d8e4f0;box-sizing:border-box;border-top:1px solid #808080;border-left:1px solid #808080;border-right:1px solid #fff;border-bottom:1px solid #fff;box-shadow:inset 1px 1px 0 #404040;"></div>
<div style="position:absolute;left:683px;top:130px;font-size:14px;line-height:14px;color:#000;font-weight:normal;white-space:pre;">px</div>
<div style="position:absolute;left:705px;top:127px;width:21px;height:20px;background:#d4d0c8;box-sizing:border-box;border-top:1px solid #fff;border-left:1px solid #fff;border-right:1px solid #404040;border-bottom:1px solid #404040;box-shadow:inset -1px -1px 0 #808080;"></div>
<svg style="position:absolute;left:710px;top:133px;" width="11" height="7" viewBox="0 0 11 7"><path d="M0 0h11L5.5 7z" fill="#000"/></svg>
<div style="position:absolute;left:748px;top:131px;font-size:13px;line-height:13px;color:#000;font-weight:normal;white-space:pre;transform:scaleX(0.8615);transform-origin:0 0;">Менять:</div>
<div style="position:absolute;left:799px;top:117px;width:28px;height:40px;background:repeating-conic-gradient(#d4d0c8 0 25%,#fbfaf8 0 50%) 0 0/2px 2px;box-sizing:border-box;border:1px solid #808080;border-right-color:#fff;border-bottom-color:#fff"></div>
<div style="position:absolute;left:827px;top:117px;width:28px;height:40px;background:repeating-conic-gradient(#d4d0c8 0 25%,#fbfaf8 0 50%) 0 0/2px 2px;box-sizing:border-box;border:1px solid #808080;border-right-color:#fff;border-bottom-color:#fff"></div>
<div style="position:absolute;left:855px;top:117px;width:28px;height:40px;background:repeating-conic-gradient(#d4d0c8 0 25%,#fbfaf8 0 50%) 0 0/2px 2px;box-sizing:border-box;border:1px solid #808080;border-right-color:#fff;border-bottom-color:#fff"></div>
<div style="position:absolute;left:883px;top:117px;width:28px;height:40px;background:repeating-conic-gradient(#d4d0c8 0 25%,#fbfaf8 0 50%) 0 0/2px 2px;box-sizing:border-box;border:1px solid #808080;border-right-color:#fff;border-bottom-color:#fff"></div>
<svg style="position:absolute;left:805px;top:128px;" width="20" height="20" viewBox="0 0 20 20"><rect x="1" y="2" width="16" height="3" fill="#000"/><rect x="1" y="6" width="10" height="2" fill="#000"/><rect x="13" y="2" width="4" height="8" fill="#000"/><path d="M5 15.5h2M8 15.5h2M11 15.5h2" stroke="#000"/><path d="M13 12.5l4 3-4 3z" fill="#000"/></svg>
<svg style="position:absolute;left:833px;top:128px;" width="20" height="20" viewBox="0 0 20 20"><path d="M1 3.5h8q7 0 7 6" fill="none" stroke="#000" stroke-width="2"/><path d="M1 7.5h6q5 0 6 3" fill="none" stroke="#000" stroke-width="1.6"/><path d="M5 15.5h2M8 15.5h2M11 15.5h2" stroke="#000"/><path d="M13 12.5l4 3-4 3z" fill="#000"/></svg>
<svg style="position:absolute;left:861px;top:128px;" width="20" height="20" viewBox="0 0 20 20"><rect x="1" y="2" width="16" height="8" fill="#b8c8e0"/><rect x="1" y="2" width="16" height="3" fill="#1a2a40"/><rect x="1" y="6" width="10" height="2" fill="#1a2a40"/><rect x="13" y="2" width="4" height="8" fill="#1a2a40"/><path d="M5 15.5h2M8 15.5h2M11 15.5h2" stroke="#000"/><path d="M13 12.5l4 3-4 3z" fill="#000"/></svg>
<svg style="position:absolute;left:889px;top:128px;" width="20" height="20" viewBox="0 0 20 20"><rect x="1" y="2" width="16" height="7" fill="#000"/><path d="M4 4l1.5 3 1.5-3zM9 4l1.5 3 1.5-3zM13 4l1.5 3 1.5-3z" fill="#eee"/><path d="M5 15.5h2M8 15.5h2M11 15.5h2" stroke="#000"/><path d="M13 12.5l4 3-4 3z" fill="#000"/></svg>
<div style="position:absolute;left:0px;top:160px;width:33px;height:814px;background:#d4d0c8"></div>
<div style="position:absolute;left:0px;top:160px;width:1px;height:814px;background:#fff"></div>
<div style="position:absolute;left:33px;top:160px;width:1px;height:814px;background:#888"></div>
<div style="position:absolute;left:2px;top:160px;width:30px;height:31px;background:repeating-conic-gradient(#d4d0c8 0 25%,#fbfaf8 0 50%) 0 0/2px 2px;box-sizing:border-box;border:1px solid #808080;border-right-color:#fff;border-bottom-color:#fff"></div>
<svg style="position:absolute;left:6px;top:164px" width="23" height="23" viewBox="0 0 21 21"><path d="M3 1v15l4-4 3 6 2-1-3-6h6z" fill="#000"/></svg>
<svg style="position:absolute;left:6px;top:194px" width="23" height="23" viewBox="0 0 21 21"><path d="M6 6Q4 10 3 16" fill="none" stroke="#6a6aa8"/><path d="M6 6q5-3 11-4" fill="none" stroke="#6a6aa8"/><rect x="3" y="3" width="6" height="6" fill="#3a3ae0" stroke="#00a"/><rect x="16" y="0" width="4" height="4" fill="#b8b8ff" stroke="#55c"/><rect x="1" y="15" width="4" height="4" fill="#b8b8ff" stroke="#55c"/><path d="M9 9l10 5-4 1 -1 4z" fill="#000"/></svg>
<svg style="position:absolute;left:6px;top:224px" width="23" height="23" viewBox="0 0 21 21"><path d="M3 13c2-4 4-7 7-8 3-1 5 0 5 2s-2 3-3 2" fill="none" stroke="#222" stroke-width="1.4"/><path d="M3 13q3-2 5-2 3 0 5 1 2 1 5 0" fill="none" stroke="#444"/><path d="M3 13q3-2 5-2 3 0 5 1 2 1 5 0V19H3z" fill="url(#gGray)"/></svg>
<svg style="position:absolute;left:6px;top:254px" width="23" height="23" viewBox="0 0 21 21"><circle cx="8" cy="8" r="6.5" fill="#d8e8f8" stroke="#222" stroke-width="1.5"/><path d="M5 6a4 4 0 014-3" stroke="#fff" stroke-width="1.5" fill="none"/><path d="M13 13l6 6" stroke="#8a5a00" stroke-width="4"/><path d="M13 13l6 6" stroke="#f0b830" stroke-width="2.5"/></svg>
<svg style="position:absolute;left:6px;top:284px" width="23" height="23" viewBox="0 0 21 21"><rect x="2.5" y="2.5" width="16" height="16" fill="url(#gBlue)" stroke="#000" stroke-width="1.6"/></svg>
<svg style="position:absolute;left:6px;top:314px" width="23" height="23" viewBox="0 0 21 21"><path d="M10 1l8 4v10l-8 4-8-4V5z" fill="#7878c0" stroke="#333" stroke-width="1.1"/><path d="M10 1l8 4v10l-8-4z" fill="#e0e0f8"/><path d="M2 5l8-4v10l-8 4z" fill="#b8b8e8"/><path d="M2 15l8-4 8 4-8 4z" fill="#3a3a90"/></svg>
<svg style="position:absolute;left:6px;top:344px" width="23" height="23" viewBox="0 0 21 21"><circle cx="10" cy="10" r="8.5" fill="url(#gPink)" stroke="#222" stroke-width="1.5"/></svg>
<svg style="position:absolute;left:6px;top:374px" width="23" height="23" viewBox="0 0 21 21"><path d="M2 5l6-4 6 3-1 6-7 3z" fill="#f0e8a0" stroke="#333"/><path d="M13 6l2 4 4 1-3 3 1 5-4-3-4 2 1-4-3-3 4-1z" fill="#f4e070" stroke="#333"/></svg>
<svg style="position:absolute;left:6px;top:404px" width="23" height="23" viewBox="0 0 21 21"><path d="M10 10.5a1.5 1.5 0 013 0 3 3 0 01-6 0 4.5 4.5 0 019 0 6 6 0 01-12 0 7.5 7.5 0 0115 .5" fill="none" stroke="#111" stroke-width="1.5"/></svg>
<svg style="position:absolute;left:6px;top:434px" width="23" height="23" viewBox="0 0 21 21"><path d="M1 2h4l-3 5 2 3-1 4 3 3" fill="none" stroke="#111" stroke-width="1.2"/><path d="M9 18l3-10 5-6 3 3-5 8z" fill="#f8e070" stroke="#333"/><path d="M9 18l3-5 3 1z" fill="#fff8e0" stroke="#333" stroke-width=".8"/></svg>
<svg style="position:absolute;left:6px;top:464px" width="23" height="23" viewBox="0 0 21 21"><path d="M1 2q6 0 8 2l-5 12" fill="none" stroke="#111"/><rect x="0.5" y="15.5" width="3" height="3" fill="#fff" stroke="#000"/><path d="M3 17h6" stroke="#000"/><path d="M9 16l3-6 5-7 3 2-4 8z" fill="#6a9ad8" stroke="#234"/><circle cx="11" cy="12" r="1.5" fill="#ffd040"/></svg>
<svg style="position:absolute;left:6px;top:494px" width="23" height="23" viewBox="0 0 21 21"><path d="M3 2c-3 4 0 8 2 12s1 5-2 5c4 0 7-2 6-6-1-3-4-6-3-10z" fill="#111"/><path d="M8 16l3-8 5-6 3 3-4 7z" fill="#f0d060" stroke="#333"/><path d="M12 3l3-2 4 4-2 2z" fill="#6a9ad8"/></svg>
<svg style="position:absolute;left:6px;top:524px" width="23" height="23" viewBox="0 0 21 21"><path d="M1 18L7 2h4l6 16h-4l-1.5-4h-5L5 18zM7.5 11h3L9 6z" fill="#111"/><path d="M16 2h4M18 2v16M16 18h4" stroke="#111"/></svg>
<svg style="position:absolute;left:6px;top:554px" width="23" height="23" viewBox="0 0 21 21"><circle cx="3" cy="3" r="1" fill="#222"/><circle cx="6" cy="2" r="1" fill="#222"/><circle cx="2" cy="6" r="1" fill="#222"/><circle cx="6" cy="5" r="1" fill="#222"/><circle cx="9" cy="4" r="1" fill="#222"/><rect x="10" y="9" width="9" height="10" rx="2" fill="url(#gGreen)" stroke="#234"/><rect x="12" y="5" width="5" height="4" fill="#6ab86a" stroke="#234"/></svg>
<svg style="position:absolute;left:6px;top:584px" width="23" height="23" viewBox="0 0 21 21"><path d="M2 15l9-13 7 4-9 13z" fill="#f8d0c8" stroke="#333" stroke-width="1.2"/></svg>
<svg style="position:absolute;left:6px;top:614px" width="23" height="23" viewBox="0 0 21 21"><path d="M5 8l10-5 5 8-9 5z" fill="#5a8ab8" stroke="#222"/><path d="M5 8c-3 2-4 5-3 9" fill="none" stroke="#4a8a6a" stroke-width="1.5"/><ellipse cx="9" cy="18" rx="8" ry="2" fill="#b8e0c8" stroke="#2a6a4a"/></svg>
<svg style="position:absolute;left:6px;top:644px" width="23" height="23" viewBox="0 0 21 21"><defs><linearGradient id="gGr2" x1="0" y1="0" x2="1" y2="1"><stop offset="0" stop-color="#f4fff4"/><stop offset=".55" stop-color="#7cc890"/><stop offset="1" stop-color="#2a8a40"/></linearGradient></defs><rect x="1" y="1" width="19" height="19" fill="url(#gGr2)" stroke="#cfe8d4"/><circle cx="5" cy="5" r="2.3" fill="#fff" stroke="#222" stroke-width="1.2"/><circle cx="15.5" cy="15.5" r="2.3" fill="#fff" stroke="#222" stroke-width="1.2"/><path d="M6.7 6.7l7 7" stroke="#222" stroke-width="1.2"/></svg>
<svg style="position:absolute;left:6px;top:674px" width="23" height="23" viewBox="0 0 21 21"><path d="M13 7l-8 9-2 3" stroke="#666" stroke-width="2"/><path d="M11 5l5-5 4 4-5 5z" fill="#111"/><path d="M10 6l4 4-8 9-3 1 1-3z" fill="#fff" stroke="#333"/></svg>
<svg style="position:absolute;left:6px;top:704px" width="23" height="23" viewBox="0 0 21 21"><rect x="5" y="1" width="6" height="5" fill="#b8d0f0" stroke="#234"/><rect x="9" y="8" width="6" height="4" fill="#f0d040" stroke="#234"/><rect x="1" y="14" width="6" height="5" fill="#b8d0f0" stroke="#234"/><rect x="13" y="14" width="6" height="5" fill="#b8d0f0" stroke="#234"/><path d="M8 6v2l4 0M12 4h4v10M4 14v-3h5" fill="none" stroke="#234"/></svg>
<div style="position:absolute;left:34px;top:160px;width:1585px;height:17px;background:#d4d0c8"></div>
<div style="position:absolute;left:34px;top:177px;width:17px;height:797px;background:#d4d0c8"></div>
<svg style="position:absolute;left:51px;top:160px;" width="1568" height="17" viewBox="0 0 1568 17"><rect x="6" y="11" width="1" height="6"/><rect x="15" y="14" width="1" height="3"/><rect x="24" y="11" width="1" height="6"/><rect x="34" y="14" width="1" height="3"/><rect x="43" y="2" width="1" height="15"/><text x="45" y="7.3" font-size="8.6" font-family="Liberation Sans" textLength="3.9" lengthAdjust="spacingAndGlyphs">0</text><rect x="52" y="14" width="1" height="3"/><rect x="61" y="11" width="1" height="6"/><rect x="70" y="14" width="1" height="3"/><rect x="80" y="11" width="1" height="6"/><rect x="89" y="14" width="1" height="3"/><rect x="98" y="11" width="1" height="6"/><rect x="107" y="14" width="1" height="3"/><rect x="116" y="11" width="1" height="6"/><rect x="125" y="14" width="1" height="3"/><rect x="135" y="2" width="1" height="15"/><text x="137" y="7.3" font-size="8.6" font-family="Liberation Sans" textLength="11.6" lengthAdjust="spacingAndGlyphs">250</text><rect x="144" y="14" width="1" height="3"/><rect x="153" y="11" width="1" height="6"/><rect x="162" y="14" width="1" height="3"/><rect x="171" y="11" width="1" height="6"/><rect x="181" y="14" width="1" height="3"/><rect x="190" y="11" width="1" height="6"/><rect x="199" y="14" width="1" height="3"/><rect x="208" y="11" width="1" height="6"/><rect x="217" y="14" width="1" height="3"/><rect x="226" y="2" width="1" height="15"/><text x="228" y="7.3" font-size="8.6" font-family="Liberation Sans" textLength="11.6" lengthAdjust="spacingAndGlyphs">500</text><rect x="236" y="14" width="1" height="3"/><rect x="245" y="11" width="1" height="6"/><rect x="254" y="14" width="1" height="3"/><rect x="263" y="11" width="1" height="6"/><rect x="272" y="14" width="1" height="3"/><rect x="282" y="11" width="1" height="6"/><rect x="291" y="14" width="1" height="3"/><rect x="300" y="11" width="1" height="6"/><rect x="309" y="14" width="1" height="3"/><rect x="318" y="2" width="1" height="15"/><text x="320" y="7.3" font-size="8.6" font-family="Liberation Sans" textLength="11.6" lengthAdjust="spacingAndGlyphs">750</text><rect x="327" y="14" width="1" height="3"/><rect x="337" y="11" width="1" height="6"/><rect x="346" y="14" width="1" height="3"/><rect x="355" y="11" width="1" height="6"/><rect x="364" y="14" width="1" height="3"/><rect x="373" y="11" width="1" height="6"/><rect x="383" y="14" width="1" height="3"/><rect x="392" y="11" width="1" height="6"/><rect x="401" y="14" width="1" height="3"/><rect x="410" y="2" width="1" height="15"/><text x="412" y="7.3" font-size="8.6" font-family="Liberation Sans" textLength="15.4" lengthAdjust="spacingAndGlyphs">1000</text><rect x="419" y="14" width="1" height="3"/><rect x="428" y="11" width="1" height="6"/><rect x="438" y="14" width="1" height="3"/><rect x="447" y="11" width="1" height="6"/><rect x="456" y="14" width="1" height="3"/><rect x="465" y="11" width="1" height="6"/><rect x="474" y="14" width="1" height="3"/><rect x="484" y="11" width="1" height="6"/><rect x="493" y="14" width="1" height="3"/><rect x="502" y="2" width="1" height="15"/><text x="504" y="7.3" font-size="8.6" font-family="Liberation Sans" textLength="15.4" lengthAdjust="spacingAndGlyphs">1250</text><rect x="511" y="14" width="1" height="3"/><rect x="520" y="11" width="1" height="6"/><rect x="529" y="14" width="1" height="3"/><rect x="539" y="11" width="1" height="6"/><rect x="548" y="14" width="1" height="3"/><rect x="557" y="11" width="1" height="6"/><rect x="566" y="14" width="1" height="3"/><rect x="575" y="11" width="1" height="6"/><rect x="584" y="14" width="1" height="3"/><rect x="594" y="2" width="1" height="15"/><text x="596" y="7.3" font-size="8.6" font-family="Liberation Sans" textLength="15.4" lengthAdjust="spacingAndGlyphs">1500</text><rect x="603" y="14" width="1" height="3"/><rect x="612" y="11" width="1" height="6"/><rect x="621" y="14" width="1" height="3"/><rect x="630" y="11" width="1" height="6"/><rect x="640" y="14" width="1" height="3"/><rect x="649" y="11" width="1" height="6"/><rect x="658" y="14" width="1" height="3"/><rect x="667" y="11" width="1" height="6"/><rect x="676" y="14" width="1" height="3"/><rect x="685" y="2" width="1" height="15"/><text x="687" y="7.3" font-size="8.6" font-family="Liberation Sans" textLength="15.4" lengthAdjust="spacingAndGlyphs">1750</text><rect x="695" y="14" width="1" height="3"/><rect x="704" y="11" width="1" height="6"/><rect x="713" y="14" width="1" height="3"/><rect x="722" y="11" width="1" height="6"/><rect x="731" y="14" width="1" height="3"/><rect x="741" y="11" width="1" height="6"/><rect x="750" y="14" width="1" height="3"/><rect x="759" y="11" width="1" height="6"/><rect x="768" y="14" width="1" height="3"/><rect x="777" y="2" width="1" height="15"/><text x="779" y="7.3" font-size="8.6" font-family="Liberation Sans" textLength="7.7" lengthAdjust="spacingAndGlyphs">2k</text><rect x="786" y="14" width="1" height="3"/><rect x="796" y="11" width="1" height="6"/><rect x="805" y="14" width="1" height="3"/><rect x="814" y="11" width="1" height="6"/><rect x="823" y="14" width="1" height="3"/><rect x="832" y="11" width="1" height="6"/><rect x="842" y="14" width="1" height="3"/><rect x="851" y="11" width="1" height="6"/><rect x="860" y="14" width="1" height="3"/><rect x="869" y="2" width="1" height="15"/><text x="871" y="7.3" font-size="8.6" font-family="Liberation Sans" textLength="15.4" lengthAdjust="spacingAndGlyphs">2250</text><rect x="878" y="14" width="1" height="3"/><rect x="887" y="11" width="1" height="6"/><rect x="897" y="14" width="1" height="3"/><rect x="906" y="11" width="1" height="6"/><rect x="915" y="14" width="1" height="3"/><rect x="924" y="11" width="1" height="6"/><rect x="933" y="14" width="1" height="3"/><rect x="943" y="11" width="1" height="6"/><rect x="952" y="14" width="1" height="3"/><rect x="961" y="2" width="1" height="15"/><text x="963" y="7.3" font-size="8.6" font-family="Liberation Sans" textLength="15.4" lengthAdjust="spacingAndGlyphs">2500</text><rect x="970" y="14" width="1" height="3"/><rect x="979" y="11" width="1" height="6"/><rect x="988" y="14" width="1" height="3"/><rect x="998" y="11" width="1" height="6"/><rect x="1007" y="14" width="1" height="3"/><rect x="1016" y="11" width="1" height="6"/><rect x="1025" y="14" width="1" height="3"/><rect x="1034" y="11" width="1" height="6"/><rect x="1044" y="14" width="1" height="3"/><rect x="1053" y="2" width="1" height="15"/><text x="1055" y="7.3" font-size="8.6" font-family="Liberation Sans" textLength="15.4" lengthAdjust="spacingAndGlyphs">2750</text><rect x="1062" y="14" width="1" height="3"/><rect x="1071" y="11" width="1" height="6"/><rect x="1080" y="14" width="1" height="3"/><rect x="1089" y="11" width="1" height="6"/><rect x="1099" y="14" width="1" height="3"/><rect x="1108" y="11" width="1" height="6"/><rect x="1117" y="14" width="1" height="3"/><rect x="1126" y="11" width="1" height="6"/><rect x="1135" y="14" width="1" height="3"/><rect x="1145" y="2" width="1" height="15"/><text x="1147" y="7.3" font-size="8.6" font-family="Liberation Sans" textLength="7.7" lengthAdjust="spacingAndGlyphs">3k</text><rect x="1154" y="14" width="1" height="3"/><rect x="1163" y="11" width="1" height="6"/><rect x="1172" y="14" width="1" height="3"/><rect x="1181" y="11" width="1" height="6"/><rect x="1190" y="14" width="1" height="3"/><rect x="1200" y="11" width="1" height="6"/><rect x="1209" y="14" width="1" height="3"/><rect x="1218" y="11" width="1" height="6"/><rect x="1227" y="14" width="1" height="3"/><rect x="1236" y="2" width="1" height="15"/><text x="1238" y="7.3" font-size="8.6" font-family="Liberation Sans" textLength="15.4" lengthAdjust="spacingAndGlyphs">3250</text><rect x="1246" y="14" width="1" height="3"/><rect x="1255" y="11" width="1" height="6"/><rect x="1264" y="14" width="1" height="3"/><rect x="1273" y="11" width="1" height="6"/><rect x="1282" y="14" width="1" height="3"/><rect x="1291" y="11" width="1" height="6"/><rect x="1301" y="14" width="1" height="3"/><rect x="1310" y="11" width="1" height="6"/><rect x="1319" y="14" width="1" height="3"/><rect x="1328" y="2" width="1" height="15"/><text x="1330" y="7.3" font-size="8.6" font-family="Liberation Sans" textLength="15.4" lengthAdjust="spacingAndGlyphs">3500</text><rect x="1337" y="14" width="1" height="3"/><rect x="1347" y="11" width="1" height="6"/><rect x="1356" y="14" width="1" height="3"/><rect x="1365" y="11" width="1" height="6"/><rect x="1374" y="14" width="1" height="3"/><rect x="1383" y="11" width="1" height="6"/><rect x="1392" y="14" width="1" height="3"/><rect x="1402" y="11" width="1" height="6"/><rect x="1411" y="14" width="1" height="3"/><rect x="1420" y="2" width="1" height="15"/><text x="1422" y="7.3" font-size="8.6" font-family="Liberation Sans" textLength="15.4" lengthAdjust="spacingAndGlyphs">3750</text><rect x="1429" y="14" width="1" height="3"/><rect x="1438" y="11" width="1" height="6"/><rect x="1448" y="14" width="1" height="3"/><rect x="1457" y="11" width="1" height="6"/><rect x="1466" y="14" width="1" height="3"/><rect x="1475" y="11" width="1" height="6"/><rect x="1484" y="14" width="1" height="3"/><rect x="1493" y="11" width="1" height="6"/><rect x="1503" y="14" width="1" height="3"/><rect x="1512" y="2" width="1" height="15"/><text x="1514" y="7.3" font-size="8.6" font-family="Liberation Sans" textLength="7.7" lengthAdjust="spacingAndGlyphs">4k</text><rect x="1521" y="14" width="1" height="3"/><rect x="1530" y="11" width="1" height="6"/><rect x="1539" y="14" width="1" height="3"/><rect x="1549" y="11" width="1" height="6"/><rect x="1558" y="14" width="1" height="3"/><rect x="1567" y="11" width="1" height="6"/></svg>
<svg style="position:absolute;left:34px;top:177px;" width="17" height="777" viewBox="0 0 17 777"><rect x="4" y="773" width="13" height="1"/><text x="6" y="781.6" font-size="9" font-family="Liberation Sans" text-anchor="middle" textLength="3.6" lengthAdjust="spacingAndGlyphs">-</text><text x="6" y="789.8" font-size="9" font-family="Liberation Sans" text-anchor="middle" textLength="3.6" lengthAdjust="spacingAndGlyphs">7</text><text x="6" y="798.0" font-size="9" font-family="Liberation Sans" text-anchor="middle" textLength="3.6" lengthAdjust="spacingAndGlyphs">5</text><text x="6" y="806.2" font-size="9" font-family="Liberation Sans" text-anchor="middle" textLength="3.6" lengthAdjust="spacingAndGlyphs">0</text><rect x="14" y="764" width="3" height="1"/><rect x="12" y="755" width="5" height="1"/><rect x="14" y="746" width="3" height="1"/><rect x="12" y="737" width="5" height="1"/><rect x="14" y="727" width="3" height="1"/><rect x="12" y="718" width="5" height="1"/><rect x="14" y="709" width="3" height="1"/><rect x="12" y="700" width="5" height="1"/><rect x="14" y="691" width="3" height="1"/><rect x="4" y="682" width="13" height="1"/><text x="6" y="690.6" font-size="9" font-family="Liberation Sans" text-anchor="middle" textLength="3.6" lengthAdjust="spacingAndGlyphs">-</text><text x="6" y="698.8" font-size="9" font-family="Liberation Sans" text-anchor="middle" textLength="3.6" lengthAdjust="spacingAndGlyphs">5</text><text x="6" y="707.0" font-size="9" font-family="Liberation Sans" text-anchor="middle" textLength="3.6" lengthAdjust="spacingAndGlyphs">0</text><text x="6" y="715.2" font-size="9" font-family="Liberation Sans" text-anchor="middle" textLength="3.6" lengthAdjust="spacingAndGlyphs">0</text><rect x="14" y="672" width="3" height="1"/><rect x="12" y="663" width="5" height="1"/><rect x="14" y="654" width="3" height="1"/><rect x="12" y="645" width="5" height="1"/><rect x="14" y="636" width="3" height="1"/><rect x="12" y="626" width="5" height="1"/><rect x="14" y="617" width="3" height="1"/><rect x="12" y="608" width="5" height="1"/><rect x="14" y="599" width="3" height="1"/><rect x="4" y="590" width="13" height="1"/><text x="6" y="598.6" font-size="9" font-family="Liberation Sans" text-anchor="middle" textLength="3.6" lengthAdjust="spacingAndGlyphs">-</text><text x="6" y="606.8" font-size="9" font-family="Liberation Sans" text-anchor="middle" textLength="3.6" lengthAdjust="spacingAndGlyphs">2</text><text x="6" y="615.0" font-size="9" font-family="Liberation Sans" text-anchor="middle" textLength="3.6" lengthAdjust="spacingAndGlyphs">5</text><text x="6" y="623.2" font-size="9" font-family="Liberation Sans" text-anchor="middle" textLength="3.6" lengthAdjust="spacingAndGlyphs">0</text><rect x="14" y="581" width="3" height="1"/><rect x="12" y="571" width="5" height="1"/><rect x="14" y="562" width="3" height="1"/><rect x="12" y="553" width="5" height="1"/><rect x="14" y="544" width="3" height="1"/><rect x="12" y="535" width="5" height="1"/><rect x="14" y="525" width="3" height="1"/><rect x="12" y="516" width="5" height="1"/><rect x="14" y="507" width="3" height="1"/><rect x="4" y="498" width="13" height="1"/><text x="6" y="506.6" font-size="9" font-family="Liberation Sans" text-anchor="middle" textLength="3.6" lengthAdjust="spacingAndGlyphs">0</text><rect x="14" y="489" width="3" height="1"/><rect x="12" y="480" width="5" height="1"/><rect x="14" y="470" width="3" height="1"/><rect x="12" y="461" width="5" height="1"/><rect x="14" y="452" width="3" height="1"/><rect x="12" y="443" width="5" height="1"/><rect x="14" y="434" width="3" height="1"/><rect x="12" y="424" width="5" height="1"/><rect x="14" y="415" width="3" height="1"/><rect x="4" y="406" width="13" height="1"/><text x="6" y="414.6" font-size="9" font-family="Liberation Sans" text-anchor="middle" textLength="3.6" lengthAdjust="spacingAndGlyphs">2</text><text x="6" y="422.8" font-size="9" font-family="Liberation Sans" text-anchor="middle" textLength="3.6" lengthAdjust="spacingAndGlyphs">5</text><text x="6" y="431.0" font-size="9" font-family="Liberation Sans" text-anchor="middle" textLength="3.6" lengthAdjust="spacingAndGlyphs">0</text><rect x="14" y="397" width="3" height="1"/><rect x="12" y="388" width="5" height="1"/><rect x="14" y="379" width="3" height="1"/><rect x="12" y="369" width="5" height="1"/><rect x="14" y="360" width="3" height="1"/><rect x="12" y="351" width="5" height="1"/><rect x="14" y="342" width="3" height="1"/><rect x="12" y="333" width="5" height="1"/><rect x="14" y="323" width="3" height="1"/><rect x="4" y="314" width="13" height="1"/><text x="6" y="322.6" font-size="9" font-family="Liberation Sans" text-anchor="middle" textLength="3.6" lengthAdjust="spacingAndGlyphs">5</text><text x="6" y="330.8" font-size="9" font-family="Liberation Sans" text-anchor="middle" textLength="3.6" lengthAdjust="spacingAndGlyphs">0</text><text x="6" y="339.0" font-size="9" font-family="Liberation Sans" text-anchor="middle" textLength="3.6" lengthAdjust="spacingAndGlyphs">0</text><rect x="14" y="305" width="3" height="1"/><rect x="12" y="296" width="5" height="1"/><rect x="14" y="287" width="3" height="1"/><rect x="12" y="278" width="5" height="1"/><rect x="14" y="268" width="3" height="1"/><rect x="12" y="259" width="5" height="1"/><rect x="14" y="250" width="3" height="1"/><rect x="12" y="241" width="5" height="1"/><rect x="14" y="232" width="3" height="1"/><rect x="4" y="222" width="13" height="1"/><text x="6" y="230.6" font-size="9" font-family="Liberation Sans" text-anchor="middle" textLength="3.6" lengthAdjust="spacingAndGlyphs">7</text><text x="6" y="238.8" font-size="9" font-family="Liberation Sans" text-anchor="middle" textLength="3.6" lengthAdjust="spacingAndGlyphs">5</text><text x="6" y="247.0" font-size="9" font-family="Liberation Sans" text-anchor="middle" textLength="3.6" lengthAdjust="spacingAndGlyphs">0</text><rect x="14" y="213" width="3" height="1"/><rect x="12" y="204" width="5" height="1"/><rect x="14" y="195" width="3" height="1"/><rect x="12" y="186" width="5" height="1"/><rect x="14" y="177" width="3" height="1"/><rect x="12" y="167" width="5" height="1"/><rect x="14" y="158" width="3" height="1"/><rect x="12" y="149" width="5" height="1"/><rect x="14" y="140" width="3" height="1"/><rect x="4" y="131" width="13" height="1"/><text x="6" y="139.6" font-size="9" font-family="Liberation Sans" text-anchor="middle" textLength="3.6" lengthAdjust="spacingAndGlyphs">1</text><text x="6" y="147.8" font-size="9" font-family="Liberation Sans" text-anchor="middle" textLength="3.6" lengthAdjust="spacingAndGlyphs">0</text><text x="6" y="156.0" font-size="9" font-family="Liberation Sans" text-anchor="middle" textLength="3.6" lengthAdjust="spacingAndGlyphs">0</text><text x="6" y="164.2" font-size="9" font-family="Liberation Sans" text-anchor="middle" textLength="3.6" lengthAdjust="spacingAndGlyphs">0</text><rect x="14" y="121" width="3" height="1"/><rect x="12" y="112" width="5" height="1"/><rect x="14" y="103" width="3" height="1"/><rect x="12" y="94" width="5" height="1"/><rect x="14" y="85" width="3" height="1"/><rect x="12" y="76" width="5" height="1"/><rect x="14" y="66" width="3" height="1"/><rect x="12" y="57" width="5" height="1"/><rect x="14" y="48" width="3" height="1"/><rect x="4" y="39" width="13" height="1"/><text x="6" y="47.6" font-size="9" font-family="Liberation Sans" text-anchor="middle" textLength="3.6" lengthAdjust="spacingAndGlyphs">1</text><text x="6" y="55.8" font-size="9" font-family="Liberation Sans" text-anchor="middle" textLength="3.6" lengthAdjust="spacingAndGlyphs">2</text><text x="6" y="64.0" font-size="9" font-family="Liberation Sans" text-anchor="middle" textLength="3.6" lengthAdjust="spacingAndGlyphs">5</text><text x="6" y="72.2" font-size="9" font-family="Liberation Sans" text-anchor="middle" textLength="3.6" lengthAdjust="spacingAndGlyphs">0</text><rect x="14" y="30" width="3" height="1"/><rect x="12" y="20" width="5" height="1"/><rect x="14" y="11" width="3" height="1"/><rect x="12" y="2" width="5" height="1"/></svg>
<svg style="position:absolute;left:1119px;top:169px;" width="9" height="9" viewBox="0 0 9 9"><path d="M0.5 0.5h8L4.5 5z" fill="#000"/><path d="M4.5 4v5" stroke="#000"/></svg>
<svg style="position:absolute;left:44px;top:496px;" width="7" height="9" viewBox="0 0 7 9"><path d="M0.5 0.5v8L5.5 4.5z" fill="#000"/><path d="M4 4.5h3" stroke="#000"/></svg>
<div style="position:absolute;left:51px;top:177px;width:1568px;height:776px;background:#fff"></div>
<svg style="position:absolute;left:51px;top:177px;" width="1568" height="776" viewBox="0 0 1568 776"><g fill="none" stroke="#000" stroke-width="0.45" stroke-opacity="1"><circle cx="93.0" cy="349.0" r="16"/><circle cx="141.0" cy="301.0" r="16"/><circle cx="189.0" cy="349.0" r="16"/><circle cx="141.0" cy="397.0" r="16"/><circle cx="94.3" cy="347.5" r="16"/><circle cx="143.7" cy="301.0" r="16"/><circle cx="190.2" cy="350.5" r="16"/><circle cx="140.7" cy="397.0" r="16"/><circle cx="95.6" cy="346.0" r="16"/><circle cx="146.5" cy="301.1" r="16"/><circle cx="191.4" cy="352.0" r="16"/><circle cx="140.4" cy="396.9" r="16"/><circle cx="96.9" cy="344.5" r="16"/><circle cx="149.2" cy="301.2" r="16"/><circle cx="192.5" cy="353.5" r="16"/><circle cx="140.2" cy="396.8" r="16"/><circle cx="98.3" cy="343.0" r="16"/><circle cx="151.9" cy="301.4" r="16"/><circle cx="193.5" cy="355.0" r="16"/><circle cx="139.9" cy="396.6" r="16"/><circle cx="99.7" cy="341.5" r="16"/><circle cx="154.7" cy="301.6" r="16"/><circle cx="194.6" cy="356.5" r="16"/><circle cx="139.6" cy="396.4" r="16"/><circle cx="101.2" cy="340.0" r="16"/><circle cx="157.4" cy="301.9" r="16"/><circle cx="195.5" cy="358.0" r="16"/><circle cx="139.4" cy="396.1" r="16"/><circle cx="102.8" cy="338.5" r="16"/><circle cx="160.1" cy="302.2" r="16"/><circle cx="196.4" cy="359.5" r="16"/><circle cx="139.1" cy="395.8" r="16"/><circle cx="104.3" cy="337.1" r="16"/><circle cx="162.8" cy="302.5" r="16"/><circle cx="197.3" cy="360.9" r="16"/><circle cx="138.9" cy="395.5" r="16"/><circle cx="106.0" cy="335.6" r="16"/><circle cx="165.5" cy="302.9" r="16"/><circle cx="198.2" cy="362.4" r="16"/><circle cx="138.7" cy="395.1" r="16"/><circle cx="107.6" cy="334.2" r="16"/><circle cx="168.1" cy="303.3" r="16"/><circle cx="198.9" cy="363.8" r="16"/><circle cx="138.5" cy="394.7" r="16"/><circle cx="109.4" cy="332.7" r="16"/><circle cx="170.8" cy="303.8" r="16"/><circle cx="199.7" cy="365.3" r="16"/><circle cx="138.3" cy="394.2" r="16"/><circle cx="111.1" cy="331.3" r="16"/><circle cx="173.4" cy="304.4" r="16"/><circle cx="200.4" cy="366.7" r="16"/><circle cx="138.1" cy="393.6" r="16"/><circle cx="112.9" cy="329.9" r="16"/><circle cx="176.0" cy="304.9" r="16"/><circle cx="201.0" cy="368.1" r="16"/><circle cx="137.9" cy="393.1" r="16"/><circle cx="114.8" cy="328.6" r="16"/><circle cx="178.6" cy="305.6" r="16"/><circle cx="201.6" cy="369.4" r="16"/><circle cx="137.8" cy="392.4" r="16"/><circle cx="116.7" cy="327.2" r="16"/><circle cx="181.2" cy="306.2" r="16"/><circle cx="202.2" cy="370.8" r="16"/><circle cx="137.6" cy="391.8" r="16"/><circle cx="118.6" cy="325.9" r="16"/><circle cx="183.8" cy="306.9" r="16"/><circle cx="202.7" cy="372.1" r="16"/><circle cx="137.5" cy="391.1" r="16"/><circle cx="120.6" cy="324.6" r="16"/><circle cx="186.3" cy="307.7" r="16"/><circle cx="203.2" cy="373.4" r="16"/><circle cx="137.5" cy="390.3" r="16"/><circle cx="122.6" cy="323.3" r="16"/><circle cx="188.8" cy="308.5" r="16"/><circle cx="203.6" cy="374.7" r="16"/><circle cx="137.4" cy="389.5" r="16"/><circle cx="124.6" cy="322.0" r="16"/><circle cx="191.3" cy="309.3" r="16"/><circle cx="204.0" cy="376.0" r="16"/><circle cx="137.4" cy="388.7" r="16"/><circle cx="126.7" cy="320.8" r="16"/><circle cx="193.8" cy="310.2" r="16"/><circle cx="204.4" cy="377.2" r="16"/><circle cx="137.4" cy="387.8" r="16"/><circle cx="128.9" cy="319.6" r="16"/><circle cx="196.2" cy="311.1" r="16"/><circle cx="204.7" cy="378.4" r="16"/><circle cx="137.4" cy="386.9" r="16"/><circle cx="131.0" cy="318.4" r="16"/><circle cx="198.6" cy="312.0" r="16"/><circle cx="205.0" cy="379.6" r="16"/><circle cx="137.4" cy="386.0" r="16"/><circle cx="133.3" cy="317.3" r="16"/><circle cx="201.0" cy="313.0" r="16"/><circle cx="205.3" cy="380.7" r="16"/><circle cx="137.5" cy="385.0" r="16"/><circle cx="135.5" cy="316.1" r="16"/><circle cx="203.3" cy="314.0" r="16"/><circle cx="205.5" cy="381.9" r="16"/><circle cx="137.6" cy="384.0" r="16"/><circle cx="137.8" cy="315.1" r="16"/><circle cx="205.7" cy="315.1" r="16"/><circle cx="205.7" cy="382.9" r="16"/><circle cx="137.8" cy="382.9" r="16"/><circle cx="140.1" cy="314.0" r="16"/><circle cx="207.9" cy="316.1" r="16"/><circle cx="205.8" cy="384.0" r="16"/><circle cx="138.0" cy="381.9" r="16"/><circle cx="142.4" cy="313.0" r="16"/><circle cx="210.2" cy="317.3" r="16"/><circle cx="205.9" cy="385.0" r="16"/><circle cx="138.2" cy="380.7" r="16"/><circle cx="144.8" cy="312.0" r="16"/><circle cx="212.4" cy="318.4" r="16"/><circle cx="206.0" cy="386.0" r="16"/><circle cx="138.4" cy="379.6" r="16"/><circle cx="147.2" cy="311.1" r="16"/><circle cx="214.6" cy="319.6" r="16"/><circle cx="206.1" cy="386.9" r="16"/><circle cx="138.7" cy="378.4" r="16"/><circle cx="149.6" cy="310.2" r="16"/><circle cx="216.7" cy="320.8" r="16"/><circle cx="206.1" cy="387.8" r="16"/><circle cx="139.0" cy="377.2" r="16"/><circle cx="152.1" cy="309.3" r="16"/><circle cx="218.8" cy="322.0" r="16"/><circle cx="206.1" cy="388.7" r="16"/><circle cx="139.4" cy="376.0" r="16"/><circle cx="154.6" cy="308.5" r="16"/><circle cx="220.8" cy="323.3" r="16"/><circle cx="206.0" cy="389.5" r="16"/><circle cx="139.8" cy="374.7" r="16"/><circle cx="157.1" cy="307.7" r="16"/><circle cx="222.9" cy="324.6" r="16"/><circle cx="206.0" cy="390.3" r="16"/><circle cx="140.2" cy="373.4" r="16"/><circle cx="159.7" cy="306.9" r="16"/><circle cx="224.8" cy="325.9" r="16"/><circle cx="205.9" cy="391.1" r="16"/><circle cx="140.7" cy="372.1" r="16"/><circle cx="162.2" cy="306.2" r="16"/><circle cx="226.8" cy="327.2" r="16"/><circle cx="205.8" cy="391.8" r="16"/><circle cx="141.2" cy="370.8" r="16"/><circle cx="164.8" cy="305.6" r="16"/><circle cx="228.7" cy="328.6" r="16"/><circle cx="205.7" cy="392.4" r="16"/><circle cx="141.8" cy="369.4" r="16"/><circle cx="167.4" cy="304.9" r="16"/><circle cx="230.5" cy="329.9" r="16"/><circle cx="205.5" cy="393.1" r="16"/><circle cx="142.4" cy="368.1" r="16"/><circle cx="170.0" cy="304.4" r="16"/><circle cx="232.3" cy="331.3" r="16"/><circle cx="205.4" cy="393.6" r="16"/><circle cx="143.1" cy="366.7" r="16"/><circle cx="172.7" cy="303.8" r="16"/><circle cx="234.1" cy="332.7" r="16"/><circle cx="205.2" cy="394.2" r="16"/><circle cx="143.8" cy="365.3" r="16"/><circle cx="175.3" cy="303.3" r="16"/><circle cx="235.8" cy="334.2" r="16"/><circle cx="205.0" cy="394.7" r="16"/><circle cx="144.5" cy="363.8" r="16"/><circle cx="178.0" cy="302.9" r="16"/><circle cx="237.5" cy="335.6" r="16"/><circle cx="204.8" cy="395.1" r="16"/><circle cx="145.3" cy="362.4" r="16"/><circle cx="180.7" cy="302.5" r="16"/><circle cx="239.1" cy="337.1" r="16"/><circle cx="204.5" cy="395.5" r="16"/><circle cx="146.1" cy="360.9" r="16"/><circle cx="183.4" cy="302.2" r="16"/><circle cx="240.7" cy="338.5" r="16"/><circle cx="204.3" cy="395.8" r="16"/><circle cx="147.0" cy="359.5" r="16"/><circle cx="186.1" cy="301.9" r="16"/><circle cx="242.2" cy="340.0" r="16"/><circle cx="204.1" cy="396.1" r="16"/><circle cx="147.9" cy="358.0" r="16"/><circle cx="188.8" cy="301.6" r="16"/><circle cx="243.7" cy="341.5" r="16"/><circle cx="203.8" cy="396.4" r="16"/><circle cx="148.9" cy="356.5" r="16"/><circle cx="191.5" cy="301.4" r="16"/><circle cx="245.1" cy="343.0" r="16"/><circle cx="203.5" cy="396.6" r="16"/><circle cx="149.9" cy="355.0" r="16"/><circle cx="194.2" cy="301.2" r="16"/><circle cx="246.5" cy="344.5" r="16"/><circle cx="203.3" cy="396.8" r="16"/><circle cx="151.0" cy="353.5" r="16"/><circle cx="197.0" cy="301.1" r="16"/><circle cx="247.9" cy="346.0" r="16"/><circle cx="203.0" cy="396.9" r="16"/><circle cx="152.1" cy="352.0" r="16"/><circle cx="199.7" cy="301.0" r="16"/><circle cx="249.2" cy="347.5" r="16"/><circle cx="202.7" cy="397.0" r="16"/><circle cx="153.2" cy="350.5" r="16"/><circle cx="202.4" cy="301.0" r="16"/><circle cx="250.4" cy="349.0" r="16"/><circle cx="202.4" cy="397.0" r="16"/><circle cx="154.4" cy="349.0" r="16"/><circle cx="205.2" cy="301.0" r="16"/><circle cx="251.6" cy="350.5" r="16"/><circle cx="202.2" cy="397.0" r="16"/><circle cx="155.7" cy="347.5" r="16"/><circle cx="207.9" cy="301.1" r="16"/><circle cx="252.8" cy="352.0" r="16"/><circle cx="201.9" cy="396.9" r="16"/><circle cx="157.0" cy="346.0" r="16"/><circle cx="210.6" cy="301.2" r="16"/><circle cx="253.9" cy="353.5" r="16"/><circle cx="201.6" cy="396.8" r="16"/><circle cx="158.3" cy="344.5" r="16"/><circle cx="213.4" cy="301.4" r="16"/><circle cx="255.0" cy="355.0" r="16"/><circle cx="201.3" cy="396.6" r="16"/><circle cx="159.7" cy="343.0" r="16"/><circle cx="216.1" cy="301.6" r="16"/><circle cx="256.0" cy="356.5" r="16"/><circle cx="201.1" cy="396.4" r="16"/><circle cx="161.2" cy="341.5" r="16"/><circle cx="218.8" cy="301.9" r="16"/><circle cx="257.0" cy="358.0" r="16"/><circle cx="200.8" cy="396.1" r="16"/><circle cx="162.7" cy="340.0" r="16"/><circle cx="221.5" cy="302.2" r="16"/><circle cx="257.9" cy="359.5" r="16"/><circle cx="200.6" cy="395.8" r="16"/><circle cx="164.2" cy="338.5" r="16"/><circle cx="224.2" cy="302.5" r="16"/><circle cx="258.8" cy="360.9" r="16"/><circle cx="200.3" cy="395.5" r="16"/><circle cx="165.8" cy="337.1" r="16"/><circle cx="226.9" cy="302.9" r="16"/><circle cx="259.6" cy="362.4" r="16"/><circle cx="200.1" cy="395.1" r="16"/><circle cx="167.4" cy="335.6" r="16"/><circle cx="229.6" cy="303.3" r="16"/><circle cx="260.4" cy="363.8" r="16"/><circle cx="199.9" cy="394.7" r="16"/><circle cx="169.1" cy="334.2" r="16"/><circle cx="232.2" cy="303.8" r="16"/><circle cx="261.1" cy="365.3" r="16"/><circle cx="199.7" cy="394.2" r="16"/><circle cx="170.8" cy="332.7" r="16"/><circle cx="234.9" cy="304.4" r="16"/><circle cx="261.8" cy="366.7" r="16"/><circle cx="199.5" cy="393.6" r="16"/><circle cx="172.6" cy="331.3" r="16"/><circle cx="237.5" cy="304.9" r="16"/><circle cx="262.5" cy="368.1" r="16"/><circle cx="199.3" cy="393.1" r="16"/><circle cx="174.4" cy="329.9" r="16"/><circle cx="240.1" cy="305.6" r="16"/><circle cx="263.1" cy="369.4" r="16"/><circle cx="199.2" cy="392.4" r="16"/><circle cx="176.2" cy="328.6" r="16"/><circle cx="242.7" cy="306.2" r="16"/><circle cx="263.6" cy="370.8" r="16"/><circle cx="199.1" cy="391.8" r="16"/><circle cx="178.1" cy="327.2" r="16"/><circle cx="245.2" cy="306.9" r="16"/><circle cx="264.2" cy="372.1" r="16"/><circle cx="199.0" cy="391.1" r="16"/><circle cx="180.0" cy="325.9" r="16"/><circle cx="247.8" cy="307.7" r="16"/><circle cx="264.6" cy="373.4" r="16"/><circle cx="198.9" cy="390.3" r="16"/><circle cx="182.0" cy="324.6" r="16"/><circle cx="250.3" cy="308.5" r="16"/><circle cx="265.1" cy="374.7" r="16"/><circle cx="198.8" cy="389.5" r="16"/><circle cx="184.0" cy="323.3" r="16"/><circle cx="252.8" cy="309.3" r="16"/><circle cx="265.5" cy="376.0" r="16"/><circle cx="198.8" cy="388.7" r="16"/><circle cx="186.1" cy="322.0" r="16"/><circle cx="255.2" cy="310.2" r="16"/><circle cx="265.8" cy="377.2" r="16"/><circle cx="198.8" cy="387.8" r="16"/><circle cx="188.2" cy="320.8" r="16"/><circle cx="257.7" cy="311.1" r="16"/><circle cx="266.2" cy="378.4" r="16"/><circle cx="198.8" cy="386.9" r="16"/><circle cx="190.3" cy="319.6" r="16"/><circle cx="260.1" cy="312.0" r="16"/><circle cx="266.5" cy="379.6" r="16"/><circle cx="198.9" cy="386.0" r="16"/><circle cx="192.5" cy="318.4" r="16"/><circle cx="262.4" cy="313.0" r="16"/><circle cx="266.7" cy="380.7" r="16"/><circle cx="199.0" cy="385.0" r="16"/><circle cx="194.7" cy="317.3" r="16"/><circle cx="264.8" cy="314.0" r="16"/><circle cx="266.9" cy="381.9" r="16"/><circle cx="199.1" cy="384.0" r="16"/><circle cx="196.9" cy="316.1" r="16"/><circle cx="267.1" cy="315.1" r="16"/><circle cx="267.1" cy="382.9" r="16"/><circle cx="199.2" cy="382.9" r="16"/><circle cx="199.2" cy="315.1" r="16"/><circle cx="269.4" cy="316.1" r="16"/><circle cx="267.2" cy="384.0" r="16"/><circle cx="199.4" cy="381.9" r="16"/><circle cx="201.5" cy="314.0" r="16"/><circle cx="271.6" cy="317.3" r="16"/><circle cx="267.4" cy="385.0" r="16"/><circle cx="199.6" cy="380.7" r="16"/><circle cx="203.9" cy="313.0" r="16"/><circle cx="273.8" cy="318.4" r="16"/><circle cx="267.4" cy="386.0" r="16"/><circle cx="199.9" cy="379.6" r="16"/><circle cx="206.2" cy="312.0" r="16"/><circle cx="276.0" cy="319.6" r="16"/><circle cx="267.5" cy="386.9" r="16"/><circle cx="200.1" cy="378.4" r="16"/><circle cx="208.7" cy="311.1" r="16"/><circle cx="278.1" cy="320.8" r="16"/><circle cx="267.5" cy="387.8" r="16"/><circle cx="200.5" cy="377.2" r="16"/><circle cx="211.1" cy="310.2" r="16"/><circle cx="280.2" cy="322.0" r="16"/><circle cx="267.5" cy="388.7" r="16"/><circle cx="200.8" cy="376.0" r="16"/><circle cx="213.5" cy="309.3" r="16"/><circle cx="282.3" cy="323.3" r="16"/><circle cx="267.5" cy="389.5" r="16"/><circle cx="201.2" cy="374.7" r="16"/><circle cx="216.0" cy="308.5" r="16"/><circle cx="284.3" cy="324.6" r="16"/><circle cx="267.4" cy="390.3" r="16"/><circle cx="201.7" cy="373.4" r="16"/><circle cx="218.6" cy="307.7" r="16"/><circle cx="286.3" cy="325.9" r="16"/><circle cx="267.3" cy="391.1" r="16"/><circle cx="202.2" cy="372.1" r="16"/><circle cx="221.1" cy="306.9" r="16"/><circle cx="288.2" cy="327.2" r="16"/><circle cx="267.2" cy="391.8" r="16"/><circle cx="202.7" cy="370.8" r="16"/><circle cx="223.7" cy="306.2" r="16"/><circle cx="290.1" cy="328.6" r="16"/><circle cx="267.1" cy="392.4" r="16"/><circle cx="203.2" cy="369.4" r="16"/><circle cx="226.2" cy="305.6" r="16"/><circle cx="292.0" cy="329.9" r="16"/><circle cx="267.0" cy="393.1" r="16"/><circle cx="203.8" cy="368.1" r="16"/><circle cx="228.8" cy="304.9" r="16"/><circle cx="293.8" cy="331.3" r="16"/><circle cx="266.8" cy="393.6" r="16"/><circle cx="204.5" cy="366.7" r="16"/><circle cx="231.5" cy="304.4" r="16"/><circle cx="295.5" cy="332.7" r="16"/><circle cx="266.6" cy="394.2" r="16"/><circle cx="205.2" cy="365.3" r="16"/><circle cx="234.1" cy="303.8" r="16"/><circle cx="297.2" cy="334.2" r="16"/><circle cx="266.4" cy="394.7" r="16"/><circle cx="205.9" cy="363.8" r="16"/><circle cx="236.8" cy="303.3" r="16"/><circle cx="298.9" cy="335.6" r="16"/><circle cx="266.2" cy="395.1" r="16"/><circle cx="206.7" cy="362.4" r="16"/><circle cx="239.4" cy="302.9" r="16"/><circle cx="300.5" cy="337.1" r="16"/><circle cx="266.0" cy="395.5" r="16"/><circle cx="207.6" cy="360.9" r="16"/><circle cx="242.1" cy="302.5" r="16"/><circle cx="302.1" cy="338.5" r="16"/><circle cx="265.7" cy="395.8" r="16"/><circle cx="208.4" cy="359.5" r="16"/><circle cx="244.8" cy="302.2" r="16"/><circle cx="303.7" cy="340.0" r="16"/><circle cx="265.5" cy="396.1" r="16"/><circle cx="209.4" cy="358.0" r="16"/><circle cx="247.5" cy="301.9" r="16"/><circle cx="305.1" cy="341.5" r="16"/><circle cx="265.2" cy="396.4" r="16"/><circle cx="210.3" cy="356.5" r="16"/><circle cx="250.2" cy="301.6" r="16"/><circle cx="306.6" cy="343.0" r="16"/><circle cx="265.0" cy="396.6" r="16"/><circle cx="211.3" cy="355.0" r="16"/><circle cx="252.9" cy="301.4" r="16"/><circle cx="308.0" cy="344.5" r="16"/><circle cx="264.7" cy="396.8" r="16"/><circle cx="212.4" cy="353.5" r="16"/><circle cx="255.7" cy="301.2" r="16"/><circle cx="309.3" cy="346.0" r="16"/><circle cx="264.4" cy="396.9" r="16"/><circle cx="213.5" cy="352.0" r="16"/><circle cx="258.4" cy="301.1" r="16"/><circle cx="310.6" cy="347.5" r="16"/><circle cx="264.2" cy="397.0" r="16"/><circle cx="214.7" cy="350.5" r="16"/><circle cx="261.1" cy="301.0" r="16"/><circle cx="311.9" cy="349.0" r="16"/><circle cx="263.9" cy="397.0" r="16"/><circle cx="215.9" cy="349.0" r="16"/><circle cx="263.9" cy="301.0" r="16"/><circle cx="313.1" cy="350.5" r="16"/><circle cx="263.6" cy="397.0" r="16"/><circle cx="217.1" cy="347.5" r="16"/><circle cx="266.6" cy="301.0" r="16"/><circle cx="314.2" cy="352.0" r="16"/><circle cx="263.3" cy="396.9" r="16"/><circle cx="218.4" cy="346.0" r="16"/><circle cx="269.3" cy="301.1" r="16"/><circle cx="315.3" cy="353.5" r="16"/><circle cx="263.0" cy="396.8" r="16"/><circle cx="219.8" cy="344.5" r="16"/><circle cx="272.1" cy="301.2" r="16"/><circle cx="316.4" cy="355.0" r="16"/><circle cx="262.8" cy="396.6" r="16"/><circle cx="221.2" cy="343.0" r="16"/><circle cx="274.8" cy="301.4" r="16"/><circle cx="317.4" cy="356.5" r="16"/><circle cx="262.5" cy="396.4" r="16"/><circle cx="222.6" cy="341.5" r="16"/><circle cx="277.5" cy="301.6" r="16"/><circle cx="318.4" cy="358.0" r="16"/><circle cx="262.3" cy="396.1" r="16"/><circle cx="224.1" cy="340.0" r="16"/><circle cx="280.2" cy="301.9" r="16"/><circle cx="319.3" cy="359.5" r="16"/><circle cx="262.0" cy="395.8" r="16"/><circle cx="225.6" cy="338.5" r="16"/><circle cx="282.9" cy="302.2" r="16"/><circle cx="320.2" cy="360.9" r="16"/><circle cx="261.8" cy="395.5" r="16"/><circle cx="227.2" cy="337.1" r="16"/><circle cx="285.6" cy="302.5" r="16"/><circle cx="321.0" cy="362.4" r="16"/><circle cx="261.5" cy="395.1" r="16"/><circle cx="228.8" cy="335.6" r="16"/><circle cx="288.3" cy="302.9" r="16"/><circle cx="321.8" cy="363.8" r="16"/><circle cx="261.3" cy="394.7" r="16"/><circle cx="230.5" cy="334.2" r="16"/><circle cx="291.0" cy="303.3" r="16"/><circle cx="322.6" cy="365.3" r="16"/><circle cx="261.1" cy="394.2" r="16"/><circle cx="232.2" cy="332.7" r="16"/><circle cx="293.7" cy="303.8" r="16"/><circle cx="323.2" cy="366.7" r="16"/><circle cx="261.0" cy="393.6" r="16"/><circle cx="234.0" cy="331.3" r="16"/><circle cx="296.3" cy="304.4" r="16"/><circle cx="323.9" cy="368.1" r="16"/><circle cx="260.8" cy="393.1" r="16"/><circle cx="235.8" cy="329.9" r="16"/><circle cx="298.9" cy="304.9" r="16"/><circle cx="324.5" cy="369.4" r="16"/><circle cx="260.6" cy="392.4" r="16"/><circle cx="237.6" cy="328.6" r="16"/><circle cx="301.5" cy="305.6" r="16"/><circle cx="325.1" cy="370.8" r="16"/><circle cx="260.5" cy="391.8" r="16"/><circle cx="239.5" cy="327.2" r="16"/><circle cx="304.1" cy="306.2" r="16"/><circle cx="325.6" cy="372.1" r="16"/><circle cx="260.4" cy="391.1" r="16"/><circle cx="241.5" cy="325.9" r="16"/><circle cx="306.7" cy="306.9" r="16"/><circle cx="326.1" cy="373.4" r="16"/><circle cx="260.3" cy="390.3" r="16"/><circle cx="243.4" cy="324.6" r="16"/><circle cx="309.2" cy="307.7" r="16"/><circle cx="326.5" cy="374.7" r="16"/><circle cx="260.3" cy="389.5" r="16"/><circle cx="245.5" cy="323.3" r="16"/><circle cx="311.7" cy="308.5" r="16"/><circle cx="326.9" cy="376.0" r="16"/><circle cx="260.2" cy="388.7" r="16"/><circle cx="247.5" cy="322.0" r="16"/><circle cx="314.2" cy="309.3" r="16"/><circle cx="327.3" cy="377.2" r="16"/><circle cx="260.2" cy="387.8" r="16"/><circle cx="249.6" cy="320.8" r="16"/><circle cx="316.7" cy="310.2" r="16"/><circle cx="327.6" cy="378.4" r="16"/><circle cx="260.3" cy="386.9" r="16"/><circle cx="251.8" cy="319.6" r="16"/><circle cx="319.1" cy="311.1" r="16"/><circle cx="327.9" cy="379.6" r="16"/><circle cx="260.3" cy="386.0" r="16"/><circle cx="253.9" cy="318.4" r="16"/><circle cx="321.5" cy="312.0" r="16"/><circle cx="328.1" cy="380.7" r="16"/><circle cx="260.4" cy="385.0" r="16"/><circle cx="256.1" cy="317.3" r="16"/><circle cx="323.9" cy="313.0" r="16"/><circle cx="328.4" cy="381.9" r="16"/><circle cx="260.5" cy="384.0" r="16"/><circle cx="258.4" cy="316.1" r="16"/><circle cx="326.2" cy="314.0" r="16"/><circle cx="328.5" cy="382.9" r="16"/><circle cx="260.7" cy="382.9" r="16"/><circle cx="260.7" cy="315.1" r="16"/><circle cx="328.5" cy="315.1" r="16"/><circle cx="328.7" cy="384.0" r="16"/><circle cx="260.8" cy="381.9" r="16"/><circle cx="263.0" cy="314.0" r="16"/><circle cx="330.8" cy="316.1" r="16"/><circle cx="328.8" cy="385.0" r="16"/><circle cx="261.0" cy="380.7" r="16"/><circle cx="265.3" cy="313.0" r="16"/><circle cx="333.1" cy="317.3" r="16"/><circle cx="328.9" cy="386.0" r="16"/><circle cx="261.3" cy="379.6" r="16"/><circle cx="267.7" cy="312.0" r="16"/><circle cx="335.3" cy="318.4" r="16"/><circle cx="328.9" cy="386.9" r="16"/><circle cx="261.6" cy="378.4" r="16"/><circle cx="270.1" cy="311.1" r="16"/><circle cx="337.4" cy="319.6" r="16"/><circle cx="329.0" cy="387.8" r="16"/><circle cx="261.9" cy="377.2" r="16"/><circle cx="272.5" cy="310.2" r="16"/><circle cx="339.6" cy="320.8" r="16"/><circle cx="328.9" cy="388.7" r="16"/><circle cx="262.3" cy="376.0" r="16"/><circle cx="275.0" cy="309.3" r="16"/><circle cx="341.7" cy="322.0" r="16"/><circle cx="328.9" cy="389.5" r="16"/><circle cx="262.7" cy="374.7" r="16"/><circle cx="277.5" cy="308.5" r="16"/><circle cx="343.7" cy="323.3" r="16"/><circle cx="328.9" cy="390.3" r="16"/><circle cx="263.1" cy="373.4" r="16"/><circle cx="280.0" cy="307.7" r="16"/><circle cx="345.7" cy="324.6" r="16"/><circle cx="328.8" cy="391.1" r="16"/><circle cx="263.6" cy="372.1" r="16"/><circle cx="282.5" cy="306.9" r="16"/><circle cx="347.7" cy="325.9" r="16"/><circle cx="328.7" cy="391.8" r="16"/><circle cx="264.1" cy="370.8" r="16"/><circle cx="285.1" cy="306.2" r="16"/><circle cx="349.6" cy="327.2" r="16"/><circle cx="328.5" cy="392.4" r="16"/><circle cx="264.7" cy="369.4" r="16"/><circle cx="287.7" cy="305.6" r="16"/><circle cx="351.5" cy="328.6" r="16"/><circle cx="328.4" cy="393.1" r="16"/><circle cx="265.3" cy="368.1" r="16"/><circle cx="290.3" cy="304.9" r="16"/><circle cx="353.4" cy="329.9" r="16"/><circle cx="328.2" cy="393.6" r="16"/><circle cx="265.9" cy="366.7" r="16"/><circle cx="292.9" cy="304.4" r="16"/><circle cx="355.2" cy="331.3" r="16"/><circle cx="328.1" cy="394.2" r="16"/><circle cx="266.6" cy="365.3" r="16"/><circle cx="295.5" cy="303.8" r="16"/><circle cx="357.0" cy="332.7" r="16"/><circle cx="327.9" cy="394.7" r="16"/><circle cx="267.4" cy="363.8" r="16"/><circle cx="298.2" cy="303.3" r="16"/><circle cx="358.7" cy="334.2" r="16"/><circle cx="327.6" cy="395.1" r="16"/><circle cx="268.2" cy="362.4" r="16"/><circle cx="300.9" cy="302.9" r="16"/><circle cx="360.3" cy="335.6" r="16"/><circle cx="327.4" cy="395.5" r="16"/><circle cx="269.0" cy="360.9" r="16"/><circle cx="303.5" cy="302.5" r="16"/><circle cx="362.0" cy="337.1" r="16"/><circle cx="327.2" cy="395.8" r="16"/><circle cx="269.9" cy="359.5" r="16"/><circle cx="306.2" cy="302.2" r="16"/><circle cx="363.6" cy="338.5" r="16"/><circle cx="326.9" cy="396.1" r="16"/><circle cx="270.8" cy="358.0" r="16"/><circle cx="308.9" cy="301.9" r="16"/><circle cx="365.1" cy="340.0" r="16"/><circle cx="326.7" cy="396.4" r="16"/><circle cx="271.8" cy="356.5" r="16"/><circle cx="311.7" cy="301.6" r="16"/><circle cx="366.6" cy="341.5" r="16"/><circle cx="326.4" cy="396.6" r="16"/><circle cx="272.8" cy="355.0" r="16"/><circle cx="314.4" cy="301.4" r="16"/><circle cx="368.0" cy="343.0" r="16"/><circle cx="326.1" cy="396.8" r="16"/><circle cx="273.8" cy="353.5" r="16"/><circle cx="317.1" cy="301.2" r="16"/><circle cx="369.4" cy="344.5" r="16"/><circle cx="325.9" cy="396.9" r="16"/><circle cx="274.9" cy="352.0" r="16"/><circle cx="319.8" cy="301.1" r="16"/><circle cx="370.8" cy="346.0" r="16"/><circle cx="325.6" cy="397.0" r="16"/><circle cx="276.1" cy="350.5" r="16"/><circle cx="322.6" cy="301.0" r="16"/><circle cx="372.1" cy="347.5" r="16"/><circle cx="325.3" cy="397.0" r="16"/><circle cx="277.3" cy="349.0" r="16"/><circle cx="325.3" cy="301.0" r="16"/><circle cx="373.3" cy="349.0" r="16"/><circle cx="325.0" cy="397.0" r="16"/><circle cx="278.6" cy="347.5" r="16"/><circle cx="328.0" cy="301.0" r="16"/><circle cx="374.5" cy="350.5" r="16"/><circle cx="324.8" cy="396.9" r="16"/><circle cx="279.9" cy="346.0" r="16"/><circle cx="330.8" cy="301.1" r="16"/><circle cx="375.7" cy="352.0" r="16"/><circle cx="324.5" cy="396.8" r="16"/><circle cx="281.2" cy="344.5" r="16"/><circle cx="333.5" cy="301.2" r="16"/><circle cx="376.8" cy="353.5" r="16"/><circle cx="324.2" cy="396.6" r="16"/><circle cx="282.6" cy="343.0" r="16"/><circle cx="336.2" cy="301.4" r="16"/><circle cx="377.8" cy="355.0" r="16"/><circle cx="323.9" cy="396.4" r="16"/><circle cx="284.0" cy="341.5" r="16"/><circle cx="339.0" cy="301.6" r="16"/><circle cx="378.9" cy="356.5" r="16"/><circle cx="323.7" cy="396.1" r="16"/><circle cx="285.5" cy="340.0" r="16"/><circle cx="341.7" cy="301.9" r="16"/><circle cx="379.8" cy="358.0" r="16"/><circle cx="323.4" cy="395.8" r="16"/><circle cx="287.1" cy="338.5" r="16"/><circle cx="344.4" cy="302.2" r="16"/><circle cx="380.8" cy="359.5" r="16"/><circle cx="323.2" cy="395.5" r="16"/><circle cx="288.7" cy="337.1" r="16"/><circle cx="347.1" cy="302.5" r="16"/><circle cx="381.6" cy="360.9" r="16"/><circle cx="323.0" cy="395.1" r="16"/><circle cx="290.3" cy="335.6" r="16"/><circle cx="349.8" cy="302.9" r="16"/><circle cx="382.5" cy="362.4" r="16"/><circle cx="322.8" cy="394.7" r="16"/><circle cx="291.9" cy="334.2" r="16"/><circle cx="352.4" cy="303.3" r="16"/><circle cx="383.3" cy="363.8" r="16"/><circle cx="322.6" cy="394.2" r="16"/><circle cx="293.7" cy="332.7" r="16"/><circle cx="355.1" cy="303.8" r="16"/><circle cx="384.0" cy="365.3" r="16"/><circle cx="322.4" cy="393.6" r="16"/><circle cx="295.4" cy="331.3" r="16"/><circle cx="357.7" cy="304.4" r="16"/><circle cx="384.7" cy="366.7" r="16"/><circle cx="322.2" cy="393.1" r="16"/><circle cx="297.2" cy="329.9" r="16"/><circle cx="360.3" cy="304.9" r="16"/><circle cx="385.3" cy="368.1" r="16"/><circle cx="322.1" cy="392.4" r="16"/><circle cx="299.1" cy="328.6" r="16"/><circle cx="363.0" cy="305.6" r="16"/><circle cx="385.9" cy="369.4" r="16"/><circle cx="322.0" cy="391.8" r="16"/><circle cx="301.0" cy="327.2" r="16"/><circle cx="365.5" cy="306.2" r="16"/><circle cx="386.5" cy="370.8" r="16"/><circle cx="321.8" cy="391.1" r="16"/><circle cx="302.9" cy="325.9" r="16"/><circle cx="368.1" cy="306.9" r="16"/><circle cx="387.0" cy="372.1" r="16"/><circle cx="321.8" cy="390.3" r="16"/><circle cx="304.9" cy="324.6" r="16"/><circle cx="370.6" cy="307.7" r="16"/><circle cx="387.5" cy="373.4" r="16"/><circle cx="321.7" cy="389.5" r="16"/><circle cx="306.9" cy="323.3" r="16"/><circle cx="373.1" cy="308.5" r="16"/><circle cx="388.0" cy="374.7" r="16"/><circle cx="321.7" cy="388.7" r="16"/><circle cx="309.0" cy="322.0" r="16"/><circle cx="375.6" cy="309.3" r="16"/><circle cx="388.4" cy="376.0" r="16"/><circle cx="321.7" cy="387.8" r="16"/><circle cx="311.1" cy="320.8" r="16"/><circle cx="378.1" cy="310.2" r="16"/><circle cx="388.7" cy="377.2" r="16"/><circle cx="321.7" cy="386.9" r="16"/><circle cx="313.2" cy="319.6" r="16"/><circle cx="380.5" cy="311.1" r="16"/><circle cx="389.0" cy="378.4" r="16"/><circle cx="321.7" cy="386.0" r="16"/><circle cx="315.4" cy="318.4" r="16"/><circle cx="382.9" cy="312.0" r="16"/><circle cx="389.3" cy="379.6" r="16"/><circle cx="321.8" cy="385.0" r="16"/><circle cx="317.6" cy="317.3" r="16"/><circle cx="385.3" cy="313.0" r="16"/><circle cx="389.6" cy="380.7" r="16"/><circle cx="321.9" cy="384.0" r="16"/><circle cx="319.8" cy="316.1" r="16"/><circle cx="387.7" cy="314.0" r="16"/><circle cx="389.8" cy="381.9" r="16"/><circle cx="322.1" cy="382.9" r="16"/><circle cx="322.1" cy="315.1" r="16"/><circle cx="390.0" cy="315.1" r="16"/><circle cx="390.0" cy="382.9" r="16"/><circle cx="322.3" cy="381.9" r="16"/><circle cx="324.4" cy="314.0" r="16"/><circle cx="392.3" cy="316.1" r="16"/><circle cx="390.1" cy="384.0" r="16"/><circle cx="322.5" cy="380.7" r="16"/><circle cx="326.7" cy="313.0" r="16"/><circle cx="394.5" cy="317.3" r="16"/><circle cx="390.2" cy="385.0" r="16"/><circle cx="322.7" cy="379.6" r="16"/><circle cx="329.1" cy="312.0" r="16"/><circle cx="396.7" cy="318.4" r="16"/><circle cx="390.3" cy="386.0" r="16"/><circle cx="323.0" cy="378.4" r="16"/><circle cx="331.5" cy="311.1" r="16"/><circle cx="398.9" cy="319.6" r="16"/><circle cx="390.4" cy="386.9" r="16"/><circle cx="323.3" cy="377.2" r="16"/><circle cx="334.0" cy="310.2" r="16"/><circle cx="401.0" cy="320.8" r="16"/><circle cx="390.4" cy="387.8" r="16"/><circle cx="323.7" cy="376.0" r="16"/><circle cx="336.4" cy="309.3" r="16"/><circle cx="403.1" cy="322.0" r="16"/><circle cx="390.4" cy="388.7" r="16"/><circle cx="324.1" cy="374.7" r="16"/><circle cx="338.9" cy="308.5" r="16"/><circle cx="405.2" cy="323.3" r="16"/><circle cx="390.4" cy="389.5" r="16"/><circle cx="324.5" cy="373.4" r="16"/><circle cx="341.4" cy="307.7" r="16"/><circle cx="407.2" cy="324.6" r="16"/><circle cx="390.3" cy="390.3" r="16"/><circle cx="325.0" cy="372.1" r="16"/><circle cx="344.0" cy="306.9" r="16"/><circle cx="409.2" cy="325.9" r="16"/><circle cx="390.2" cy="391.1" r="16"/><circle cx="325.6" cy="370.8" r="16"/><circle cx="346.5" cy="306.2" r="16"/><circle cx="411.1" cy="327.2" r="16"/><circle cx="390.1" cy="391.8" r="16"/><circle cx="326.1" cy="369.4" r="16"/><circle cx="349.1" cy="305.6" r="16"/><circle cx="413.0" cy="328.6" r="16"/><circle cx="390.0" cy="392.4" r="16"/><circle cx="326.7" cy="368.1" r="16"/><circle cx="351.7" cy="304.9" r="16"/><circle cx="414.8" cy="329.9" r="16"/><circle cx="389.8" cy="393.1" r="16"/><circle cx="327.4" cy="366.7" r="16"/><circle cx="354.3" cy="304.4" r="16"/><circle cx="416.6" cy="331.3" r="16"/><circle cx="389.7" cy="393.6" r="16"/><circle cx="328.1" cy="365.3" r="16"/><circle cx="357.0" cy="303.8" r="16"/><circle cx="418.4" cy="332.7" r="16"/><circle cx="389.5" cy="394.2" r="16"/><circle cx="328.8" cy="363.8" r="16"/><circle cx="359.6" cy="303.3" r="16"/><circle cx="420.1" cy="334.2" r="16"/><circle cx="389.3" cy="394.7" r="16"/><circle cx="329.6" cy="362.4" r="16"/><circle cx="362.3" cy="302.9" r="16"/><circle cx="421.8" cy="335.6" r="16"/><circle cx="389.1" cy="395.1" r="16"/><circle cx="330.4" cy="360.9" r="16"/><circle cx="365.0" cy="302.5" r="16"/><circle cx="423.4" cy="337.1" r="16"/><circle cx="388.9" cy="395.5" r="16"/><circle cx="331.3" cy="359.5" r="16"/><circle cx="367.7" cy="302.2" r="16"/><circle cx="425.0" cy="338.5" r="16"/><circle cx="388.6" cy="395.8" r="16"/><circle cx="332.2" cy="358.0" r="16"/><circle cx="370.4" cy="301.9" r="16"/><circle cx="426.5" cy="340.0" r="16"/><circle cx="388.4" cy="396.1" r="16"/><circle cx="333.2" cy="356.5" r="16"/><circle cx="373.1" cy="301.6" r="16"/><circle cx="428.0" cy="341.5" r="16"/><circle cx="388.1" cy="396.4" r="16"/><circle cx="334.2" cy="355.0" r="16"/><circle cx="375.8" cy="301.4" r="16"/><circle cx="429.5" cy="343.0" r="16"/><circle cx="387.9" cy="396.6" r="16"/><circle cx="335.3" cy="353.5" r="16"/><circle cx="378.5" cy="301.2" r="16"/><circle cx="430.9" cy="344.5" r="16"/><circle cx="387.6" cy="396.8" r="16"/><circle cx="336.4" cy="352.0" r="16"/><circle cx="381.3" cy="301.1" r="16"/><circle cx="432.2" cy="346.0" r="16"/><circle cx="387.3" cy="396.9" r="16"/><circle cx="337.5" cy="350.5" r="16"/><circle cx="384.0" cy="301.0" r="16"/><circle cx="433.5" cy="347.5" r="16"/><circle cx="387.0" cy="397.0" r="16"/><circle cx="338.8" cy="349.0" r="16"/><circle cx="386.8" cy="301.0" r="16"/><circle cx="434.8" cy="349.0" r="16"/><circle cx="386.8" cy="397.0" r="16"/><circle cx="340.0" cy="347.5" r="16"/><circle cx="389.5" cy="301.0" r="16"/><circle cx="436.0" cy="350.5" r="16"/><circle cx="386.5" cy="397.0" r="16"/><circle cx="341.3" cy="346.0" r="16"/><circle cx="392.2" cy="301.1" r="16"/><circle cx="437.1" cy="352.0" r="16"/><circle cx="386.2" cy="396.9" r="16"/><circle cx="342.6" cy="344.5" r="16"/><circle cx="395.0" cy="301.2" r="16"/><circle cx="438.2" cy="353.5" r="16"/><circle cx="385.9" cy="396.8" r="16"/><circle cx="344.0" cy="343.0" r="16"/><circle cx="397.7" cy="301.4" r="16"/><circle cx="439.3" cy="355.0" r="16"/><circle cx="385.6" cy="396.6" r="16"/><circle cx="345.5" cy="341.5" r="16"/><circle cx="400.4" cy="301.6" r="16"/><circle cx="440.3" cy="356.5" r="16"/><circle cx="385.4" cy="396.4" r="16"/><circle cx="347.0" cy="340.0" r="16"/><circle cx="403.1" cy="301.9" r="16"/><circle cx="441.3" cy="358.0" r="16"/><circle cx="385.1" cy="396.1" r="16"/><circle cx="348.5" cy="338.5" r="16"/><circle cx="405.8" cy="302.2" r="16"/><circle cx="442.2" cy="359.5" r="16"/><circle cx="384.9" cy="395.8" r="16"/><circle cx="350.1" cy="337.1" r="16"/><circle cx="408.5" cy="302.5" r="16"/><circle cx="443.1" cy="360.9" r="16"/><circle cx="384.6" cy="395.5" r="16"/><circle cx="351.7" cy="335.6" r="16"/><circle cx="411.2" cy="302.9" r="16"/><circle cx="443.9" cy="362.4" r="16"/><circle cx="384.4" cy="395.1" r="16"/><circle cx="353.4" cy="334.2" r="16"/><circle cx="413.9" cy="303.3" r="16"/><circle cx="444.7" cy="363.8" r="16"/><circle cx="384.2" cy="394.7" r="16"/><circle cx="355.1" cy="332.7" r="16"/><circle cx="416.5" cy="303.8" r="16"/><circle cx="445.4" cy="365.3" r="16"/><circle cx="384.0" cy="394.2" r="16"/><circle cx="356.9" cy="331.3" r="16"/><circle cx="419.2" cy="304.4" r="16"/><circle cx="446.1" cy="366.7" r="16"/><circle cx="383.8" cy="393.6" r="16"/><circle cx="358.7" cy="329.9" r="16"/><circle cx="421.8" cy="304.9" r="16"/><circle cx="446.8" cy="368.1" r="16"/><circle cx="383.7" cy="393.1" r="16"/><circle cx="360.5" cy="328.6" r="16"/><circle cx="424.4" cy="305.6" r="16"/><circle cx="447.4" cy="369.4" r="16"/><circle cx="383.5" cy="392.4" r="16"/><circle cx="362.4" cy="327.2" r="16"/><circle cx="427.0" cy="306.2" r="16"/><circle cx="447.9" cy="370.8" r="16"/><circle cx="383.4" cy="391.8" r="16"/><circle cx="364.3" cy="325.9" r="16"/><circle cx="429.5" cy="306.9" r="16"/><circle cx="448.5" cy="372.1" r="16"/><circle cx="383.3" cy="391.1" r="16"/><circle cx="366.3" cy="324.6" r="16"/><circle cx="432.1" cy="307.7" r="16"/><circle cx="449.0" cy="373.4" r="16"/><circle cx="383.2" cy="390.3" r="16"/><circle cx="368.3" cy="323.3" r="16"/><circle cx="434.6" cy="308.5" r="16"/><circle cx="449.4" cy="374.7" r="16"/><circle cx="383.1" cy="389.5" r="16"/><circle cx="370.4" cy="322.0" r="16"/><circle cx="437.1" cy="309.3" r="16"/><circle cx="449.8" cy="376.0" r="16"/><circle cx="383.1" cy="388.7" r="16"/><circle cx="372.5" cy="320.8" r="16"/><circle cx="439.5" cy="310.2" r="16"/><circle cx="450.2" cy="377.2" r="16"/><circle cx="383.1" cy="387.8" r="16"/><circle cx="374.6" cy="319.6" r="16"/><circle cx="442.0" cy="311.1" r="16"/><circle cx="450.5" cy="378.4" r="16"/><circle cx="383.1" cy="386.9" r="16"/><circle cx="376.8" cy="318.4" r="16"/><circle cx="444.4" cy="312.0" r="16"/><circle cx="450.8" cy="379.6" r="16"/><circle cx="383.2" cy="386.0" r="16"/><circle cx="379.0" cy="317.3" r="16"/><circle cx="446.8" cy="313.0" r="16"/><circle cx="451.0" cy="380.7" r="16"/><circle cx="383.3" cy="385.0" r="16"/><circle cx="381.2" cy="316.1" r="16"/><circle cx="449.1" cy="314.0" r="16"/><circle cx="451.2" cy="381.9" r="16"/><circle cx="383.4" cy="384.0" r="16"/><circle cx="383.5" cy="315.1" r="16"/><circle cx="451.4" cy="315.1" r="16"/><circle cx="451.4" cy="382.9" r="16"/><circle cx="383.5" cy="382.9" r="16"/><circle cx="385.8" cy="314.0" r="16"/><circle cx="453.7" cy="316.1" r="16"/><circle cx="451.6" cy="384.0" r="16"/><circle cx="383.7" cy="381.9" r="16"/><circle cx="388.2" cy="313.0" r="16"/><circle cx="455.9" cy="317.3" r="16"/><circle cx="451.7" cy="385.0" r="16"/><circle cx="383.9" cy="380.7" r="16"/><circle cx="390.6" cy="312.0" r="16"/><circle cx="458.1" cy="318.4" r="16"/><circle cx="451.8" cy="386.0" r="16"/><circle cx="384.2" cy="379.6" r="16"/><circle cx="393.0" cy="311.1" r="16"/><circle cx="460.3" cy="319.6" r="16"/><circle cx="451.8" cy="386.9" r="16"/><circle cx="384.5" cy="378.4" r="16"/><circle cx="395.4" cy="310.2" r="16"/><circle cx="462.4" cy="320.8" r="16"/><circle cx="451.8" cy="387.8" r="16"/><circle cx="384.8" cy="377.2" r="16"/><circle cx="397.9" cy="309.3" r="16"/><circle cx="464.5" cy="322.0" r="16"/><circle cx="451.8" cy="388.7" r="16"/><circle cx="385.1" cy="376.0" r="16"/><circle cx="400.4" cy="308.5" r="16"/><circle cx="466.6" cy="323.3" r="16"/><circle cx="451.8" cy="389.5" r="16"/><circle cx="385.5" cy="374.7" r="16"/><circle cx="402.9" cy="307.7" r="16"/><circle cx="468.6" cy="324.6" r="16"/><circle cx="451.7" cy="390.3" r="16"/><circle cx="386.0" cy="373.4" r="16"/><circle cx="405.4" cy="306.9" r="16"/><circle cx="470.6" cy="325.9" r="16"/><circle cx="451.7" cy="391.1" r="16"/><circle cx="386.5" cy="372.1" r="16"/><circle cx="408.0" cy="306.2" r="16"/><circle cx="472.5" cy="327.2" r="16"/><circle cx="451.5" cy="391.8" r="16"/><circle cx="387.0" cy="370.8" r="16"/><circle cx="410.5" cy="305.6" r="16"/><circle cx="474.4" cy="328.6" r="16"/><circle cx="451.4" cy="392.4" r="16"/><circle cx="387.6" cy="369.4" r="16"/><circle cx="413.2" cy="304.9" r="16"/><circle cx="476.3" cy="329.9" r="16"/><circle cx="451.3" cy="393.1" r="16"/><circle cx="388.2" cy="368.1" r="16"/><circle cx="415.8" cy="304.4" r="16"/><circle cx="478.1" cy="331.3" r="16"/><circle cx="451.1" cy="393.6" r="16"/><circle cx="388.8" cy="366.7" r="16"/><circle cx="418.4" cy="303.8" r="16"/><circle cx="479.8" cy="332.7" r="16"/><circle cx="450.9" cy="394.2" r="16"/><circle cx="389.5" cy="365.3" r="16"/><circle cx="421.1" cy="303.3" r="16"/><circle cx="481.6" cy="334.2" r="16"/><circle cx="450.7" cy="394.7" r="16"/><circle cx="390.2" cy="363.8" r="16"/><circle cx="423.7" cy="302.9" r="16"/><circle cx="483.2" cy="335.6" r="16"/><circle cx="450.5" cy="395.1" r="16"/><circle cx="391.0" cy="362.4" r="16"/><circle cx="426.4" cy="302.5" r="16"/><circle cx="484.8" cy="337.1" r="16"/><circle cx="450.3" cy="395.5" r="16"/><circle cx="391.9" cy="360.9" r="16"/><circle cx="429.1" cy="302.2" r="16"/><circle cx="486.4" cy="338.5" r="16"/><circle cx="450.1" cy="395.8" r="16"/><circle cx="392.7" cy="359.5" r="16"/><circle cx="431.8" cy="301.9" r="16"/><circle cx="488.0" cy="340.0" r="16"/><circle cx="449.8" cy="396.1" r="16"/><circle cx="393.7" cy="358.0" r="16"/><circle cx="434.5" cy="301.6" r="16"/><circle cx="489.5" cy="341.5" r="16"/><circle cx="449.6" cy="396.4" r="16"/><circle cx="394.6" cy="356.5" r="16"/><circle cx="437.3" cy="301.4" r="16"/><circle cx="490.9" cy="343.0" r="16"/><circle cx="449.3" cy="396.6" r="16"/><circle cx="395.7" cy="355.0" r="16"/><circle cx="440.0" cy="301.2" r="16"/><circle cx="492.3" cy="344.5" r="16"/><circle cx="449.0" cy="396.8" r="16"/><circle cx="396.7" cy="353.5" r="16"/><circle cx="442.7" cy="301.1" r="16"/><circle cx="493.6" cy="346.0" r="16"/><circle cx="448.7" cy="396.9" r="16"/><circle cx="397.8" cy="352.0" r="16"/><circle cx="445.5" cy="301.0" r="16"/><circle cx="494.9" cy="347.5" r="16"/><circle cx="448.5" cy="397.0" r="16"/><circle cx="399.0" cy="350.5" r="16"/><circle cx="448.2" cy="301.0" r="16"/><circle cx="496.2" cy="349.0" r="16"/><circle cx="448.2" cy="397.0" r="16"/><circle cx="400.2" cy="349.0" r="16"/><circle cx="450.9" cy="301.0" r="16"/><circle cx="497.4" cy="350.5" r="16"/><circle cx="447.9" cy="397.0" r="16"/><circle cx="401.4" cy="347.5" r="16"/><circle cx="453.7" cy="301.1" r="16"/><circle cx="498.6" cy="352.0" r="16"/><circle cx="447.6" cy="396.9" r="16"/><circle cx="402.7" cy="346.0" r="16"/><circle cx="456.4" cy="301.2" r="16"/><circle cx="499.7" cy="353.5" r="16"/><circle cx="447.4" cy="396.8" r="16"/><circle cx="404.1" cy="344.5" r="16"/><circle cx="459.1" cy="301.4" r="16"/><circle cx="500.7" cy="355.0" r="16"/><circle cx="447.1" cy="396.6" r="16"/><circle cx="405.5" cy="343.0" r="16"/><circle cx="461.8" cy="301.6" r="16"/><circle cx="501.7" cy="356.5" r="16"/><circle cx="446.8" cy="396.4" r="16"/><circle cx="406.9" cy="341.5" r="16"/><circle cx="464.6" cy="301.9" r="16"/><circle cx="502.7" cy="358.0" r="16"/><circle cx="446.6" cy="396.1" r="16"/><circle cx="408.4" cy="340.0" r="16"/><circle cx="467.3" cy="302.2" r="16"/><circle cx="503.6" cy="359.5" r="16"/><circle cx="446.3" cy="395.8" r="16"/><circle cx="409.9" cy="338.5" r="16"/><circle cx="470.0" cy="302.5" r="16"/><circle cx="504.5" cy="360.9" r="16"/><circle cx="446.1" cy="395.5" r="16"/><circle cx="411.5" cy="337.1" r="16"/><circle cx="472.6" cy="302.9" r="16"/><circle cx="505.3" cy="362.4" r="16"/><circle cx="445.9" cy="395.1" r="16"/><circle cx="413.2" cy="335.6" r="16"/><circle cx="475.3" cy="303.3" r="16"/><circle cx="506.1" cy="363.8" r="16"/><circle cx="445.6" cy="394.7" r="16"/><circle cx="414.8" cy="334.2" r="16"/><circle cx="478.0" cy="303.8" r="16"/><circle cx="506.9" cy="365.3" r="16"/><circle cx="445.4" cy="394.2" r="16"/><circle cx="416.5" cy="332.7" r="16"/><circle cx="480.6" cy="304.4" r="16"/><circle cx="507.6" cy="366.7" r="16"/><circle cx="445.3" cy="393.6" r="16"/><circle cx="418.3" cy="331.3" r="16"/><circle cx="483.2" cy="304.9" r="16"/><circle cx="508.2" cy="368.1" r="16"/><circle cx="445.1" cy="393.1" r="16"/><circle cx="420.1" cy="329.9" r="16"/><circle cx="485.8" cy="305.6" r="16"/><circle cx="508.8" cy="369.4" r="16"/><circle cx="445.0" cy="392.4" r="16"/><circle cx="422.0" cy="328.6" r="16"/><circle cx="488.4" cy="306.2" r="16"/><circle cx="509.4" cy="370.8" r="16"/><circle cx="444.8" cy="391.8" r="16"/><circle cx="423.9" cy="327.2" r="16"/><circle cx="491.0" cy="306.9" r="16"/><circle cx="509.9" cy="372.1" r="16"/><circle cx="444.7" cy="391.1" r="16"/><circle cx="425.8" cy="325.9" r="16"/><circle cx="493.5" cy="307.7" r="16"/><circle cx="510.4" cy="373.4" r="16"/><circle cx="444.6" cy="390.3" r="16"/><circle cx="427.8" cy="324.6" r="16"/><circle cx="496.0" cy="308.5" r="16"/><circle cx="510.8" cy="374.7" r="16"/><circle cx="444.6" cy="389.5" r="16"/><circle cx="429.8" cy="323.3" r="16"/><circle cx="498.5" cy="309.3" r="16"/><circle cx="511.2" cy="376.0" r="16"/><circle cx="444.6" cy="388.7" r="16"/><circle cx="431.8" cy="322.0" r="16"/><circle cx="501.0" cy="310.2" r="16"/><circle cx="511.6" cy="377.2" r="16"/><circle cx="444.5" cy="387.8" r="16"/><circle cx="433.9" cy="320.8" r="16"/><circle cx="503.4" cy="311.1" r="16"/><circle cx="511.9" cy="378.4" r="16"/><circle cx="444.6" cy="386.9" r="16"/><circle cx="436.1" cy="319.6" r="16"/><circle cx="505.8" cy="312.0" r="16"/><circle cx="512.2" cy="379.6" r="16"/><circle cx="444.6" cy="386.0" r="16"/><circle cx="438.2" cy="318.4" r="16"/><circle cx="508.2" cy="313.0" r="16"/><circle cx="512.5" cy="380.7" r="16"/><circle cx="444.7" cy="385.0" r="16"/><circle cx="440.4" cy="317.3" r="16"/><circle cx="510.5" cy="314.0" r="16"/><circle cx="512.7" cy="381.9" r="16"/><circle cx="444.8" cy="384.0" r="16"/><circle cx="442.7" cy="316.1" r="16"/><circle cx="512.8" cy="315.1" r="16"/><circle cx="512.8" cy="382.9" r="16"/><circle cx="445.0" cy="382.9" r="16"/><circle cx="445.0" cy="315.1" r="16"/><circle cx="515.1" cy="316.1" r="16"/><circle cx="513.0" cy="384.0" r="16"/><circle cx="445.1" cy="381.9" r="16"/><circle cx="447.3" cy="314.0" r="16"/><circle cx="517.4" cy="317.3" r="16"/><circle cx="513.1" cy="385.0" r="16"/><circle cx="445.4" cy="380.7" r="16"/><circle cx="449.6" cy="313.0" r="16"/><circle cx="519.6" cy="318.4" r="16"/><circle cx="513.2" cy="386.0" r="16"/><circle cx="445.6" cy="379.6" r="16"/><circle cx="452.0" cy="312.0" r="16"/><circle cx="521.7" cy="319.6" r="16"/><circle cx="513.2" cy="386.9" r="16"/><circle cx="445.9" cy="378.4" r="16"/><circle cx="454.4" cy="311.1" r="16"/><circle cx="523.9" cy="320.8" r="16"/><circle cx="513.3" cy="387.8" r="16"/><circle cx="446.2" cy="377.2" r="16"/><circle cx="456.8" cy="310.2" r="16"/><circle cx="526.0" cy="322.0" r="16"/><circle cx="513.3" cy="388.7" r="16"/><circle cx="446.6" cy="376.0" r="16"/><circle cx="459.3" cy="309.3" r="16"/><circle cx="528.0" cy="323.3" r="16"/><circle cx="513.2" cy="389.5" r="16"/><circle cx="447.0" cy="374.7" r="16"/><circle cx="461.8" cy="308.5" r="16"/><circle cx="530.1" cy="324.6" r="16"/><circle cx="513.2" cy="390.3" r="16"/><circle cx="447.4" cy="373.4" r="16"/><circle cx="464.3" cy="307.7" r="16"/><circle cx="532.0" cy="325.9" r="16"/><circle cx="513.1" cy="391.1" r="16"/><circle cx="447.9" cy="372.1" r="16"/><circle cx="466.8" cy="306.9" r="16"/><circle cx="534.0" cy="327.2" r="16"/><circle cx="513.0" cy="391.8" r="16"/><circle cx="448.4" cy="370.8" r="16"/><circle cx="469.4" cy="306.2" r="16"/><circle cx="535.9" cy="328.6" r="16"/><circle cx="512.9" cy="392.4" r="16"/><circle cx="449.0" cy="369.4" r="16"/><circle cx="472.0" cy="305.6" r="16"/><circle cx="537.7" cy="329.9" r="16"/><circle cx="512.7" cy="393.1" r="16"/><circle cx="449.6" cy="368.1" r="16"/><circle cx="474.6" cy="304.9" r="16"/><circle cx="539.5" cy="331.3" r="16"/><circle cx="512.5" cy="393.6" r="16"/><circle cx="450.3" cy="366.7" r="16"/><circle cx="477.2" cy="304.4" r="16"/><circle cx="541.3" cy="332.7" r="16"/><circle cx="512.4" cy="394.2" r="16"/><circle cx="450.9" cy="365.3" r="16"/><circle cx="479.8" cy="303.8" r="16"/><circle cx="543.0" cy="334.2" r="16"/><circle cx="512.2" cy="394.7" r="16"/><circle cx="451.7" cy="363.8" r="16"/><circle cx="482.5" cy="303.3" r="16"/><circle cx="544.7" cy="335.6" r="16"/><circle cx="512.0" cy="395.1" r="16"/><circle cx="452.5" cy="362.4" r="16"/><circle cx="485.2" cy="302.9" r="16"/><circle cx="546.3" cy="337.1" r="16"/><circle cx="511.7" cy="395.5" r="16"/><circle cx="453.3" cy="360.9" r="16"/><circle cx="487.9" cy="302.5" r="16"/><circle cx="547.9" cy="338.5" r="16"/><circle cx="511.5" cy="395.8" r="16"/><circle cx="454.2" cy="359.5" r="16"/><circle cx="490.6" cy="302.2" r="16"/><circle cx="549.4" cy="340.0" r="16"/><circle cx="511.2" cy="396.1" r="16"/><circle cx="455.1" cy="358.0" r="16"/><circle cx="493.3" cy="301.9" r="16"/><circle cx="550.9" cy="341.5" r="16"/><circle cx="511.0" cy="396.4" r="16"/><circle cx="456.1" cy="356.5" r="16"/><circle cx="496.0" cy="301.6" r="16"/><circle cx="552.3" cy="343.0" r="16"/><circle cx="510.7" cy="396.6" r="16"/><circle cx="457.1" cy="355.0" r="16"/><circle cx="498.7" cy="301.4" r="16"/><circle cx="553.7" cy="344.5" r="16"/><circle cx="510.5" cy="396.8" r="16"/><circle cx="458.2" cy="353.5" r="16"/><circle cx="501.4" cy="301.2" r="16"/><circle cx="555.1" cy="346.0" r="16"/><circle cx="510.2" cy="396.9" r="16"/><circle cx="459.3" cy="352.0" r="16"/><circle cx="504.2" cy="301.1" r="16"/><circle cx="556.4" cy="347.5" r="16"/><circle cx="509.9" cy="397.0" r="16"/><circle cx="460.4" cy="350.5" r="16"/><circle cx="506.9" cy="301.0" r="16"/><circle cx="557.6" cy="349.0" r="16"/><circle cx="509.6" cy="397.0" r="16"/><circle cx="461.6" cy="349.0" r="16"/><circle cx="509.6" cy="301.0" r="16"/><circle cx="558.8" cy="350.5" r="16"/><circle cx="509.3" cy="397.0" r="16"/><circle cx="462.9" cy="347.5" r="16"/><circle cx="512.4" cy="301.0" r="16"/><circle cx="560.0" cy="352.0" r="16"/><circle cx="509.1" cy="396.9" r="16"/><circle cx="464.2" cy="346.0" r="16"/><circle cx="515.1" cy="301.1" r="16"/><circle cx="561.1" cy="353.5" r="16"/><circle cx="508.8" cy="396.8" r="16"/><circle cx="465.5" cy="344.5" r="16"/><circle cx="517.8" cy="301.2" r="16"/><circle cx="562.2" cy="355.0" r="16"/><circle cx="508.5" cy="396.6" r="16"/><circle cx="466.9" cy="343.0" r="16"/><circle cx="520.6" cy="301.4" r="16"/><circle cx="563.2" cy="356.5" r="16"/><circle cx="508.3" cy="396.4" r="16"/><circle cx="468.4" cy="341.5" r="16"/><circle cx="523.3" cy="301.6" r="16"/><circle cx="564.1" cy="358.0" r="16"/><circle cx="508.0" cy="396.1" r="16"/><circle cx="469.8" cy="340.0" r="16"/><circle cx="526.0" cy="301.9" r="16"/><circle cx="565.1" cy="359.5" r="16"/><circle cx="507.8" cy="395.8" r="16"/><circle cx="471.4" cy="338.5" r="16"/><circle cx="528.7" cy="302.2" r="16"/><circle cx="565.9" cy="360.9" r="16"/><circle cx="507.5" cy="395.5" r="16"/><circle cx="473.0" cy="337.1" r="16"/><circle cx="531.4" cy="302.5" r="16"/><circle cx="566.8" cy="362.4" r="16"/><circle cx="507.3" cy="395.1" r="16"/><circle cx="474.6" cy="335.6" r="16"/><circle cx="534.1" cy="302.9" r="16"/><circle cx="567.6" cy="363.8" r="16"/><circle cx="507.1" cy="394.7" r="16"/><circle cx="476.3" cy="334.2" r="16"/><circle cx="536.7" cy="303.3" r="16"/><circle cx="568.3" cy="365.3" r="16"/><circle cx="506.9" cy="394.2" r="16"/><circle cx="478.0" cy="332.7" r="16"/><circle cx="539.4" cy="303.8" r="16"/><circle cx="569.0" cy="366.7" r="16"/><circle cx="506.7" cy="393.6" r="16"/><circle cx="479.7" cy="331.3" r="16"/><circle cx="542.0" cy="304.4" r="16"/><circle cx="569.7" cy="368.1" r="16"/><circle cx="506.5" cy="393.1" r="16"/><circle cx="481.5" cy="329.9" r="16"/><circle cx="544.7" cy="304.9" r="16"/><circle cx="570.3" cy="369.4" r="16"/><circle cx="506.4" cy="392.4" r="16"/><circle cx="483.4" cy="328.6" r="16"/><circle cx="547.3" cy="305.6" r="16"/><circle cx="570.8" cy="370.8" r="16"/><circle cx="506.3" cy="391.8" r="16"/><circle cx="485.3" cy="327.2" r="16"/><circle cx="549.8" cy="306.2" r="16"/><circle cx="571.3" cy="372.1" r="16"/><circle cx="506.2" cy="391.1" r="16"/><circle cx="487.2" cy="325.9" r="16"/><circle cx="552.4" cy="306.9" r="16"/><circle cx="571.8" cy="373.4" r="16"/><circle cx="506.1" cy="390.3" r="16"/><circle cx="489.2" cy="324.6" r="16"/><circle cx="554.9" cy="307.7" r="16"/><circle cx="572.3" cy="374.7" r="16"/><circle cx="506.0" cy="389.5" r="16"/><circle cx="491.2" cy="323.3" r="16"/><circle cx="557.5" cy="308.5" r="16"/><circle cx="572.7" cy="376.0" r="16"/><circle cx="506.0" cy="388.7" r="16"/><circle cx="493.3" cy="322.0" r="16"/><circle cx="560.0" cy="309.3" r="16"/><circle cx="573.0" cy="377.2" r="16"/><circle cx="506.0" cy="387.8" r="16"/><circle cx="495.4" cy="320.8" r="16"/><circle cx="562.4" cy="310.2" r="16"/><circle cx="573.4" cy="378.4" r="16"/><circle cx="506.0" cy="386.9" r="16"/><circle cx="497.5" cy="319.6" r="16"/><circle cx="564.8" cy="311.1" r="16"/><circle cx="573.6" cy="379.6" r="16"/><circle cx="506.1" cy="386.0" r="16"/><circle cx="499.7" cy="318.4" r="16"/><circle cx="567.3" cy="312.0" r="16"/><circle cx="573.9" cy="380.7" r="16"/><circle cx="506.1" cy="385.0" r="16"/><circle cx="501.9" cy="317.3" r="16"/><circle cx="569.6" cy="313.0" r="16"/><circle cx="574.1" cy="381.9" r="16"/><circle cx="506.3" cy="384.0" r="16"/><circle cx="504.1" cy="316.1" r="16"/><circle cx="572.0" cy="314.0" r="16"/><circle cx="574.3" cy="382.9" r="16"/><circle cx="506.4" cy="382.9" r="16"/><circle cx="506.4" cy="315.1" r="16"/><circle cx="574.3" cy="315.1" r="16"/><circle cx="574.4" cy="384.0" r="16"/><circle cx="506.6" cy="381.9" r="16"/><circle cx="508.7" cy="314.0" r="16"/><circle cx="576.6" cy="316.1" r="16"/><circle cx="574.5" cy="385.0" r="16"/><circle cx="506.8" cy="380.7" r="16"/><circle cx="511.1" cy="313.0" r="16"/><circle cx="578.8" cy="317.3" r="16"/><circle cx="574.6" cy="386.0" r="16"/><circle cx="507.0" cy="379.6" r="16"/><circle cx="513.4" cy="312.0" r="16"/><circle cx="581.0" cy="318.4" r="16"/><circle cx="574.7" cy="386.9" r="16"/><circle cx="507.3" cy="378.4" r="16"/><circle cx="515.8" cy="311.1" r="16"/><circle cx="583.2" cy="319.6" r="16"/><circle cx="574.7" cy="387.8" r="16"/><circle cx="507.7" cy="377.2" r="16"/><circle cx="518.3" cy="310.2" r="16"/><circle cx="585.3" cy="320.8" r="16"/><circle cx="574.7" cy="388.7" r="16"/><circle cx="508.0" cy="376.0" r="16"/><circle cx="520.7" cy="309.3" r="16"/><circle cx="587.4" cy="322.0" r="16"/><circle cx="574.7" cy="389.5" r="16"/><circle cx="508.4" cy="374.7" r="16"/><circle cx="523.2" cy="308.5" r="16"/><circle cx="589.5" cy="323.3" r="16"/><circle cx="574.6" cy="390.3" r="16"/><circle cx="508.9" cy="373.4" r="16"/><circle cx="525.7" cy="307.7" r="16"/><circle cx="591.5" cy="324.6" r="16"/><circle cx="574.5" cy="391.1" r="16"/><circle cx="509.3" cy="372.1" r="16"/><circle cx="528.3" cy="306.9" r="16"/><circle cx="593.5" cy="325.9" r="16"/><circle cx="574.4" cy="391.8" r="16"/><circle cx="509.9" cy="370.8" r="16"/><circle cx="530.8" cy="306.2" r="16"/><circle cx="595.4" cy="327.2" r="16"/><circle cx="574.3" cy="392.4" r="16"/><circle cx="510.4" cy="369.4" r="16"/><circle cx="533.4" cy="305.6" r="16"/><circle cx="597.3" cy="328.6" r="16"/><circle cx="574.2" cy="393.1" r="16"/><circle cx="511.0" cy="368.1" r="16"/><circle cx="536.0" cy="304.9" r="16"/><circle cx="599.1" cy="329.9" r="16"/><circle cx="574.0" cy="393.6" r="16"/><circle cx="511.7" cy="366.7" r="16"/><circle cx="538.6" cy="304.4" r="16"/><circle cx="600.9" cy="331.3" r="16"/><circle cx="573.8" cy="394.2" r="16"/><circle cx="512.4" cy="365.3" r="16"/><circle cx="541.3" cy="303.8" r="16"/><circle cx="602.7" cy="332.7" r="16"/><circle cx="573.6" cy="394.7" r="16"/><circle cx="513.1" cy="363.8" r="16"/><circle cx="543.9" cy="303.3" r="16"/><circle cx="604.4" cy="334.2" r="16"/><circle cx="573.4" cy="395.1" r="16"/><circle cx="513.9" cy="362.4" r="16"/><circle cx="546.6" cy="302.9" r="16"/><circle cx="606.1" cy="335.6" r="16"/><circle cx="573.2" cy="395.5" r="16"/><circle cx="514.7" cy="360.9" r="16"/><circle cx="549.3" cy="302.5" r="16"/><circle cx="607.7" cy="337.1" r="16"/><circle cx="572.9" cy="395.8" r="16"/><circle cx="515.6" cy="359.5" r="16"/><circle cx="552.0" cy="302.2" r="16"/><circle cx="609.3" cy="338.5" r="16"/><circle cx="572.7" cy="396.1" r="16"/><circle cx="516.5" cy="358.0" r="16"/><circle cx="554.7" cy="301.9" r="16"/><circle cx="610.8" cy="340.0" r="16"/><circle cx="572.4" cy="396.4" r="16"/><circle cx="517.5" cy="356.5" r="16"/><circle cx="557.4" cy="301.6" r="16"/><circle cx="612.3" cy="341.5" r="16"/><circle cx="572.2" cy="396.6" r="16"/><circle cx="518.5" cy="355.0" r="16"/><circle cx="560.1" cy="301.4" r="16"/><circle cx="613.8" cy="343.0" r="16"/><circle cx="571.9" cy="396.8" r="16"/><circle cx="519.6" cy="353.5" r="16"/><circle cx="562.9" cy="301.2" r="16"/><circle cx="615.2" cy="344.5" r="16"/><circle cx="571.6" cy="396.9" r="16"/><circle cx="520.7" cy="352.0" r="16"/><circle cx="565.6" cy="301.1" r="16"/><circle cx="616.5" cy="346.0" r="16"/><circle cx="571.3" cy="397.0" r="16"/><circle cx="521.9" cy="350.5" r="16"/><circle cx="568.3" cy="301.0" r="16"/><circle cx="617.8" cy="347.5" r="16"/><circle cx="571.1" cy="397.0" r="16"/><circle cx="523.1" cy="349.0" r="16"/><circle cx="571.1" cy="301.0" r="16"/><circle cx="619.1" cy="349.0" r="16"/><circle cx="570.8" cy="397.0" r="16"/><circle cx="524.3" cy="347.5" r="16"/><circle cx="573.8" cy="301.0" r="16"/><circle cx="620.3" cy="350.5" r="16"/><circle cx="570.5" cy="396.9" r="16"/><circle cx="525.6" cy="346.0" r="16"/><circle cx="576.5" cy="301.1" r="16"/><circle cx="621.4" cy="352.0" r="16"/><circle cx="570.2" cy="396.8" r="16"/><circle cx="527.0" cy="344.5" r="16"/><circle cx="579.3" cy="301.2" r="16"/><circle cx="622.5" cy="353.5" r="16"/><circle cx="570.0" cy="396.6" r="16"/><circle cx="528.4" cy="343.0" r="16"/><circle cx="582.0" cy="301.4" r="16"/><circle cx="623.6" cy="355.0" r="16"/><circle cx="569.7" cy="396.4" r="16"/><circle cx="529.8" cy="341.5" r="16"/><circle cx="584.7" cy="301.6" r="16"/><circle cx="624.6" cy="356.5" r="16"/><circle cx="569.4" cy="396.1" r="16"/><circle cx="531.3" cy="340.0" r="16"/><circle cx="587.4" cy="301.9" r="16"/><circle cx="625.6" cy="358.0" r="16"/><circle cx="569.2" cy="395.8" r="16"/><circle cx="532.8" cy="338.5" r="16"/><circle cx="590.1" cy="302.2" r="16"/><circle cx="626.5" cy="359.5" r="16"/><circle cx="569.0" cy="395.5" r="16"/><circle cx="534.4" cy="337.1" r="16"/><circle cx="592.8" cy="302.5" r="16"/><circle cx="627.4" cy="360.9" r="16"/><circle cx="568.7" cy="395.1" r="16"/><circle cx="536.0" cy="335.6" r="16"/><circle cx="595.5" cy="302.9" r="16"/><circle cx="628.2" cy="362.4" r="16"/><circle cx="568.5" cy="394.7" r="16"/><circle cx="537.7" cy="334.2" r="16"/><circle cx="598.2" cy="303.3" r="16"/><circle cx="629.0" cy="363.8" r="16"/><circle cx="568.3" cy="394.2" r="16"/><circle cx="539.4" cy="332.7" r="16"/><circle cx="600.8" cy="303.8" r="16"/><circle cx="629.7" cy="365.3" r="16"/><circle cx="568.1" cy="393.6" r="16"/><circle cx="541.2" cy="331.3" r="16"/><circle cx="603.5" cy="304.4" r="16"/><circle cx="630.4" cy="366.7" r="16"/><circle cx="568.0" cy="393.1" r="16"/><circle cx="543.0" cy="329.9" r="16"/><circle cx="606.1" cy="304.9" r="16"/><circle cx="631.1" cy="368.1" r="16"/><circle cx="567.8" cy="392.4" r="16"/><circle cx="544.8" cy="328.6" r="16"/><circle cx="608.7" cy="305.6" r="16"/><circle cx="631.7" cy="369.4" r="16"/><circle cx="567.7" cy="391.8" r="16"/><circle cx="546.7" cy="327.2" r="16"/><circle cx="611.3" cy="306.2" r="16"/><circle cx="632.3" cy="370.8" r="16"/><circle cx="567.6" cy="391.1" r="16"/><circle cx="548.7" cy="325.9" r="16"/><circle cx="613.8" cy="306.9" r="16"/><circle cx="632.8" cy="372.1" r="16"/><circle cx="567.5" cy="390.3" r="16"/><circle cx="550.6" cy="324.6" r="16"/><circle cx="616.4" cy="307.7" r="16"/><circle cx="633.3" cy="373.4" r="16"/><circle cx="567.5" cy="389.5" r="16"/><circle cx="552.7" cy="323.3" r="16"/><circle cx="618.9" cy="308.5" r="16"/><circle cx="633.7" cy="374.7" r="16"/><circle cx="567.4" cy="388.7" r="16"/><circle cx="554.7" cy="322.0" r="16"/><circle cx="621.4" cy="309.3" r="16"/><circle cx="634.1" cy="376.0" r="16"/><circle cx="567.4" cy="387.8" r="16"/><circle cx="556.8" cy="320.8" r="16"/><circle cx="623.9" cy="310.2" r="16"/><circle cx="634.5" cy="377.2" r="16"/><circle cx="567.4" cy="386.9" r="16"/><circle cx="558.9" cy="319.6" r="16"/><circle cx="626.3" cy="311.1" r="16"/><circle cx="634.8" cy="378.4" r="16"/><circle cx="567.5" cy="386.0" r="16"/><circle cx="561.1" cy="318.4" r="16"/><circle cx="628.7" cy="312.0" r="16"/><circle cx="635.1" cy="379.6" r="16"/><circle cx="567.6" cy="385.0" r="16"/><circle cx="563.3" cy="317.3" r="16"/><circle cx="631.1" cy="313.0" r="16"/><circle cx="635.3" cy="380.7" r="16"/><circle cx="567.7" cy="384.0" r="16"/><circle cx="565.6" cy="316.1" r="16"/><circle cx="633.4" cy="314.0" r="16"/><circle cx="635.5" cy="381.9" r="16"/><circle cx="567.8" cy="382.9" r="16"/><circle cx="567.8" cy="315.1" r="16"/><circle cx="635.7" cy="315.1" r="16"/><circle cx="635.7" cy="382.9" r="16"/><circle cx="568.0" cy="381.9" r="16"/><circle cx="570.2" cy="314.0" r="16"/><circle cx="638.0" cy="316.1" r="16"/><circle cx="635.9" cy="384.0" r="16"/><circle cx="568.2" cy="380.7" r="16"/><circle cx="572.5" cy="313.0" r="16"/><circle cx="640.2" cy="317.3" r="16"/><circle cx="636.0" cy="385.0" r="16"/><circle cx="568.5" cy="379.6" r="16"/><circle cx="574.9" cy="312.0" r="16"/><circle cx="642.5" cy="318.4" r="16"/><circle cx="636.1" cy="386.0" r="16"/><circle cx="568.8" cy="378.4" r="16"/><circle cx="577.3" cy="311.1" r="16"/><circle cx="644.6" cy="319.6" r="16"/><circle cx="636.1" cy="386.9" r="16"/><circle cx="569.1" cy="377.2" r="16"/><circle cx="579.7" cy="310.2" r="16"/><circle cx="646.8" cy="320.8" r="16"/><circle cx="636.1" cy="387.8" r="16"/><circle cx="569.5" cy="376.0" r="16"/><circle cx="582.2" cy="309.3" r="16"/><circle cx="648.9" cy="322.0" r="16"/><circle cx="636.1" cy="388.7" r="16"/><circle cx="569.9" cy="374.7" r="16"/><circle cx="584.7" cy="308.5" r="16"/><circle cx="650.9" cy="323.3" r="16"/><circle cx="636.1" cy="389.5" r="16"/><circle cx="570.3" cy="373.4" r="16"/><circle cx="587.2" cy="307.7" r="16"/><circle cx="652.9" cy="324.6" r="16"/><circle cx="636.0" cy="390.3" r="16"/><circle cx="570.8" cy="372.1" r="16"/><circle cx="589.7" cy="306.9" r="16"/><circle cx="654.9" cy="325.9" r="16"/><circle cx="636.0" cy="391.1" r="16"/><circle cx="571.3" cy="370.8" r="16"/><circle cx="592.3" cy="306.2" r="16"/><circle cx="656.8" cy="327.2" r="16"/><circle cx="635.9" cy="391.8" r="16"/><circle cx="571.9" cy="369.4" r="16"/><circle cx="594.9" cy="305.6" r="16"/><circle cx="658.7" cy="328.6" r="16"/><circle cx="635.7" cy="392.4" r="16"/><circle cx="572.5" cy="368.1" r="16"/><circle cx="597.5" cy="304.9" r="16"/><circle cx="660.6" cy="329.9" r="16"/><circle cx="635.6" cy="393.1" r="16"/><circle cx="573.1" cy="366.7" r="16"/><circle cx="600.1" cy="304.4" r="16"/><circle cx="662.4" cy="331.3" r="16"/><circle cx="635.4" cy="393.6" r="16"/><circle cx="573.8" cy="365.3" r="16"/><circle cx="602.7" cy="303.8" r="16"/><circle cx="664.1" cy="332.7" r="16"/><circle cx="635.2" cy="394.2" r="16"/><circle cx="574.6" cy="363.8" r="16"/><circle cx="605.4" cy="303.3" r="16"/><circle cx="665.9" cy="334.2" r="16"/><circle cx="635.0" cy="394.7" r="16"/><circle cx="575.3" cy="362.4" r="16"/><circle cx="608.0" cy="302.9" r="16"/><circle cx="667.5" cy="335.6" r="16"/><circle cx="634.8" cy="395.1" r="16"/><circle cx="576.2" cy="360.9" r="16"/><circle cx="610.7" cy="302.5" r="16"/><circle cx="669.2" cy="337.1" r="16"/><circle cx="634.6" cy="395.5" r="16"/><circle cx="577.1" cy="359.5" r="16"/><circle cx="613.4" cy="302.2" r="16"/><circle cx="670.7" cy="338.5" r="16"/><circle cx="634.4" cy="395.8" r="16"/><circle cx="578.0" cy="358.0" r="16"/><circle cx="616.1" cy="301.9" r="16"/><circle cx="672.3" cy="340.0" r="16"/><circle cx="634.1" cy="396.1" r="16"/><circle cx="578.9" cy="356.5" r="16"/><circle cx="618.8" cy="301.6" r="16"/><circle cx="673.8" cy="341.5" r="16"/><circle cx="633.9" cy="396.4" r="16"/><circle cx="580.0" cy="355.0" r="16"/><circle cx="621.6" cy="301.4" r="16"/><circle cx="675.2" cy="343.0" r="16"/><circle cx="633.6" cy="396.6" r="16"/><circle cx="581.0" cy="353.5" r="16"/><circle cx="624.3" cy="301.2" r="16"/><circle cx="676.6" cy="344.5" r="16"/><circle cx="633.3" cy="396.8" r="16"/><circle cx="582.1" cy="352.0" r="16"/><circle cx="627.0" cy="301.1" r="16"/><circle cx="677.9" cy="346.0" r="16"/><circle cx="633.1" cy="396.9" r="16"/><circle cx="583.3" cy="350.5" r="16"/><circle cx="629.8" cy="301.0" r="16"/><circle cx="679.2" cy="347.5" r="16"/><circle cx="632.8" cy="397.0" r="16"/><circle cx="584.5" cy="349.0" r="16"/><circle cx="632.5" cy="301.0" r="16"/><circle cx="680.5" cy="349.0" r="16"/><circle cx="632.5" cy="397.0" r="16"/></g><g fill="#5c5c5c"><rect x="43" y="112" width="276" height="1"/><rect x="43" y="112" width="1" height="389"/><rect x="316" y="112" width="3" height="389"/><rect x="43" y="498" width="276" height="3"/></g></svg>
<div style="position:absolute;left:1619px;top:177px;width:21px;height:797px;background:#d4d0c8"></div>
<div style="position:absolute;left:1619px;top:202px;width:20px;height:193px;background:repeating-conic-gradient(#d4d0c8 0 25%,#fbfaf8 0 50%) 0 0/2px 2px;"></div>
<div style="position:absolute;left:1619px;top:834px;width:20px;height:98px;background:repeating-conic-gradient(#d4d0c8 0 25%,#fbfaf8 0 50%) 0 0/2px 2px;"></div>
<div style="position:absolute;left:1619px;top:182px;width:20px;height:20px;background:#d4d0c8;box-sizing:border-box;border-top:1px solid #fff;border-left:1px solid #fff;border-right:1px solid #404040;border-bottom:1px solid #404040;box-shadow:inset -1px -1px 0 #808080;"></div>
<svg style="position:absolute;left:1623px;top:187px;" width="12" height="8" viewBox="0 0 12 8"><path d="M1 7h10L6 1z" fill="#000"/></svg>
<div style="position:absolute;left:1619px;top:395px;width:20px;height:439px;background:#d4d0c8;box-sizing:border-box;border-top:1px solid #fff;border-left:1px solid #fff;border-right:1px solid #404040;border-bottom:1px solid #404040;box-shadow:inset -1px -1px 0 #808080;"></div>
<div style="position:absolute;left:1619px;top:932px;width:20px;height:20px;background:#d4d0c8;box-sizing:border-box;border-top:1px solid #fff;border-left:1px solid #fff;border-right:1px solid #404040;border-bottom:1px solid #404040;box-shadow:inset -1px -1px 0 #808080;"></div>
<svg style="position:absolute;left:1623px;top:938px;" width="12" height="8" viewBox="0 0 12 8"><path d="M1 1h10L6 7z" fill="#000"/></svg>
<svg style="position:absolute;left:1620px;top:161px;" width="18" height="18" viewBox="0 0 18 18"><circle cx="8" cy="8" r="6.5" fill="#cfe0f4" stroke="#111" stroke-width="1.5"/><text x="8" y="11.5" font-size="8" text-anchor="middle" font-family="Liberation Sans" font-weight="bold">1:1</text><path d="M12.5 12.5l4 4" stroke="#111" stroke-width="2"/></svg>
<div style="position:absolute;left:51px;top:953px;width:1568px;height:21px;background:repeating-conic-gradient(#d4d0c8 0 25%,#fbfaf8 0 50%) 0 0/2px 2px;"></div>
<div style="position:absolute;left:51px;top:953px;width:21px;height:21px;background:#d4d0c8;box-sizing:border-box;border-top:1px solid #fff;border-left:1px solid #fff;border-right:1px solid #404040;border-bottom:1px solid #404040;box-shadow:inset -1px -1px 0 #808080;"></div>
<svg style="position:absolute;left:56px;top:957px;" width="9" height="13" viewBox="0 0 9 13"><path d="M8 1v11L1 6.5z" fill="#000"/></svg>
<div style="position:absolute;left:313px;top:953px;width:1285px;height:21px;background:#d4d0c8;box-sizing:border-box;border-top:1px solid #fff;border-left:1px solid #fff;border-right:1px solid #404040;border-bottom:1px solid #404040;box-shadow:inset -1px -1px 0 #808080;"></div>
<div style="position:absolute;left:1598px;top:953px;width:21px;height:21px;background:#d4d0c8;box-sizing:border-box;border-top:1px solid #fff;border-left:1px solid #fff;border-right:1px solid #404040;border-bottom:1px solid #404040;box-shadow:inset -1px -1px 0 #808080;"></div>
<svg style="position:absolute;left:1604px;top:957px;" width="9" height="13" viewBox="0 0 9 13"><path d="M1 1v11l7-5.5z" fill="#888"/></svg>
<svg style="position:absolute;left:1621px;top:955px;" width="18" height="18" viewBox="0 0 18 18"><path d="M3 1l13 9-10 7z" fill="#8ac888" stroke="#555" stroke-width=".8"/><path d="M3 1l3 16 10-7z" fill="#a8a8e8" opacity=".6"/></svg>
<div style="position:absolute;left:1640px;top:160px;width:40px;height:814px;background:#d4d0c8"></div>
<div style="position:absolute;left:1646px;top:160px;width:1px;height:814px;background:#808080"></div>
<div style="position:absolute;left:1647px;top:160px;width:1px;height:814px;background:#fff"></div>
<div style="position:absolute;left:1679px;top:160px;width:1px;height:814px;background:#808080"></div>
<div style="position:absolute;left:1649px;top:161px;width:29px;height:29px;background:repeating-conic-gradient(#d4d0c8 0 25%,#fbfaf8 0 50%) 0 0/2px 2px;box-sizing:border-box;border:1px solid #808080;border-right-color:#fff;border-bottom-color:#fff"></div>
<div style="position:absolute;left:1649px;top:617px;width:29px;height:29px;background:repeating-conic-gradient(#d4d0c8 0 25%,#fbfaf8 0 50%) 0 0/2px 2px;box-sizing:border-box;border:1px solid #808080;border-right-color:#fff;border-bottom-color:#fff"></div>
<div style="position:absolute;left:1649px;top:646px;width:29px;height:29px;background:repeating-conic-gradient(#d4d0c8 0 25%,#fbfaf8 0 50%) 0 0/2px 2px;box-sizing:border-box;border:1px solid #808080;border-right-color:#fff;border-bottom-color:#fff"></div>
<div style="position:absolute;left:1649px;top:354px;width:29px;height:29px;background:repeating-conic-gradient(#d4d0c8 0 25%,#fbfaf8 0 50%) 0 0/2px 2px;box-sizing:border-box;border:1px solid #808080;border-right-color:#fff;border-bottom-color:#fff"></div>
<div style="position:absolute;left:1653px;top:194px;width:22px;height:1px;background:#a0a0a0;box-shadow:0 1px 0 #fff"></div>
<div style="position:absolute;left:1653px;top:346px;width:22px;height:1px;background:#a0a0a0;box-shadow:0 1px 0 #fff"></div>
<div style="position:absolute;left:1653px;top:581px;width:22px;height:1px;background:#a0a0a0;box-shadow:0 1px 0 #fff"></div>
<svg style="position:absolute;left:1653px;top:166px" width="20" height="20" viewBox="0 0 18 18"><circle cx="4" cy="4" r="2.5" fill="#5a5ae8" stroke="#22c"/><path d="M5 5l7 7" stroke="#000" stroke-width="1.3"/><path d="M10 13l4-1-1-4z" fill="#000"/><rect x="12" y="12" width="4" height="4" fill="#8ac888" stroke="#262" transform="rotate(45 14 14)"/></svg>
<svg style="position:absolute;left:1653px;top:202px" width="20" height="20" viewBox="0 0 18 18"><circle cx="4" cy="5" r="2.5" fill="#5a5ae8" stroke="#22c"/><path d="M7 5h9M4 8v8" stroke="#333" stroke-dasharray="1.5 1"/></svg>
<svg style="position:absolute;left:1653px;top:230px" width="20" height="20" viewBox="0 0 18 18"><path d="M3 14h6M13 4v7" stroke="#777" stroke-dasharray="1.5 1"/></svg>
<svg style="position:absolute;left:1653px;top:258px" width="20" height="20" viewBox="0 0 18 18"><path d="M3 12h7M13 2v8" stroke="#777" stroke-dasharray="1.5 1"/><rect x="11" y="10" width="4" height="4" fill="#888" transform="rotate(45 13 12)"/></svg>
<svg style="position:absolute;left:1653px;top:286px" width="20" height="20" viewBox="0 0 18 18"><path d="M3 15h10v-10" stroke="#444" fill="none" stroke-dasharray="1.5 1"/><rect x="11" y="3" width="4" height="4" fill="#888" transform="rotate(45 13 5)"/></svg>
<svg style="position:absolute;left:1653px;top:314px" width="20" height="20" viewBox="0 0 18 18"><path d="M3 15h10v-10" stroke="#444" fill="none" stroke-dasharray="1.5 1"/><circle cx="5" cy="9" r="1.5" fill="none" stroke="#444"/></svg>
<svg style="position:absolute;left:1653px;top:358px" width="20" height="20" viewBox="0 0 18 18"><path d="M2 15c2-5 5-8 10-8" fill="none" stroke="#333" stroke-width="1.3"/><rect x="9" y="3" width="5" height="5" fill="#5a5ae8" stroke="#22c" transform="rotate(45 11.5 5.5)"/></svg>
<svg style="position:absolute;left:1653px;top:386px" width="20" height="20" viewBox="0 0 18 18"><path d="M3 3c6 0 9 3 9 8l-5 4" fill="none" stroke="#2a8a3a" stroke-width="2"/></svg>
<svg style="position:absolute;left:1653px;top:414px" width="20" height="20" viewBox="0 0 18 18"><path d="M2 14l14-10M3 11l8-6M7 14l9-6" stroke="#333"/><path d="M6 9l4 3" stroke="#2a8a3a" stroke-width="1.5"/></svg>
<svg style="position:absolute;left:1653px;top:442px" width="20" height="20" viewBox="0 0 18 18"><path d="M3 3c5 0 9 3 9 8" fill="none" stroke="#333" stroke-width="1.3"/><circle cx="11" cy="12" r="2" fill="#2a8a3a"/></svg>
<svg style="position:absolute;left:1653px;top:470px" width="20" height="20" viewBox="0 0 18 18"><path d="M4 3l4 8 6 4" fill="none" stroke="#333" stroke-width="1.3"/><circle cx="8" cy="10" r="2" fill="#2a8a3a"/></svg>
<svg style="position:absolute;left:1653px;top:498px" width="20" height="20" viewBox="0 0 18 18"><path d="M2 16l14-12" stroke="#2a8a3a" stroke-width="1.5"/><circle cx="5" cy="13" r="1.8" fill="#e03030"/><circle cx="13" cy="6" r="1.8" fill="#e03030"/></svg>
<svg style="position:absolute;left:1653px;top:526px" width="20" height="20" viewBox="0 0 18 18"><circle cx="6" cy="9" r="2" fill="#2a8a3a"/><path d="M3 15h10V4" stroke="#333" fill="none"/></svg>
<svg style="position:absolute;left:1653px;top:554px" width="20" height="20" viewBox="0 0 18 18"><path d="M3 9h6M6 6v6" stroke="#000" stroke-width="1.3"/><path d="M3 15h10V4" stroke="#333" fill="none" stroke-dasharray="1.5 1"/></svg>
<svg style="position:absolute;left:1653px;top:594px" width="20" height="20" viewBox="0 0 18 18"><defs><linearGradient id="gPg" x1="0" y1="0" x2="1" y2="1"><stop offset="0" stop-color="#fff"/><stop offset=".5" stop-color="#eee"/><stop offset="1" stop-color="#888"/></linearGradient></defs><rect x="3.5" y="1.5" width="11" height="15" fill="url(#gPg)" stroke="#000" stroke-width="1.2"/></svg>
<svg style="position:absolute;left:1653px;top:622px" width="20" height="20" viewBox="0 0 18 18"><path d="M1 4.5h16M1 8.5h16M1 12.5h16M4.5 1v16M8.5 1v16M12.5 1v16" stroke="#1010a0" stroke-width="1.3"/></svg>
<svg style="position:absolute;left:1653px;top:651px" width="20" height="20" viewBox="0 0 18 18"><path d="M5 2v14M13 2L9 16" stroke="#1010a0" stroke-width="1.4"/></svg>
<div style="position:absolute;left:0px;top:974px;width:1680px;height:40px;background:#d4d0c8"></div>
<div style="position:absolute;left:0px;top:976px;width:1664px;height:1px;background:#000"></div>
<div style="position:absolute;left:0px;top:995px;width:1664px;height:1px;background:#000"></div>
<div style="position:absolute;left:0px;top:996px;width:1664px;height:1px;background:#fff"></div>
<svg style="position:absolute;left:0px;top:977px;" width="1664" height="18" viewBox="0 0 1664 18"><rect x="21" y="0" width="19" height="18" fill="#000000"/><rect x="40" y="0" width="19" height="18" fill="#1a1a1a"/><rect x="59" y="0" width="19" height="18" fill="#333333"/><rect x="78" y="0" width="19" height="18" fill="#4d4d4d"/><rect x="97" y="0" width="19" height="18" fill="#666666"/><rect x="116" y="0" width="19" height="18" fill="#808080"/><rect x="135" y="0" width="19" height="18" fill="#999999"/><rect x="154" y="0" width="19" height="18" fill="#b3b3b3"/><rect x="173" y="0" width="19" height="18" fill="#cccccc"/><rect x="192" y="0" width="19" height="18" fill="#e6e6e6"/><rect x="211" y="0" width="19" height="18" fill="#ececec"/><rect x="230" y="0" width="19" height="18" fill="#f2f2f2"/><rect x="249" y="0" width="19" height="18" fill="#f9f9f9"/><rect x="268" y="0" width="19" height="18" fill="#ffffff"/><rect x="287" y="0" width="19" height="18" fill="#800000"/><rect x="306" y="0" width="19" height="18" fill="#ff0000"/><rect x="325" y="0" width="19" height="18" fill="#808000"/><rect x="344" y="0" width="19" height="18" fill="#ffff00"/><rect x="363" y="0" width="19" height="18" fill="#008000"/><rect x="382" y="0" width="19" height="18" fill="#00ff00"/><rect x="401" y="0" width="19" height="18" fill="#008080"/><rect x="420" y="0" width="19" height="18" fill="#00ffff"/><rect x="439" y="0" width="19" height="18" fill="#000080"/><rect x="458" y="0" width="19" height="18" fill="#0000ff"/><rect x="477" y="0" width="19" height="18" fill="#800080"/><rect x="496" y="0" width="19" height="18" fill="#ff00ff"/><rect x="515" y="0" width="19" height="18" fill="#2b0000"/><rect x="534" y="0" width="19" height="18" fill="#550000"/><rect x="553" y="0" width="19" height="18" fill="#800000"/><rect x="572" y="0" width="19" height="18" fill="#aa0000"/><rect x="591" y="0" width="19" height="18" fill="#d40000"/><rect x="610" y="0" width="19" height="18" fill="#ff0000"/><rect x="629" y="0" width="19" height="18" fill="#ff2a2a"/><rect x="648" y="0" width="19" height="18" fill="#ff5555"/><rect x="667" y="0" width="19" height="18" fill="#ff8080"/><rect x="686" y="0" width="19" height="18" fill="#ffaaaa"/><rect x="705" y="0" width="19" height="18" fill="#ffd5d5"/><rect x="724" y="0" width="19" height="18" fill="#280b0b"/><rect x="743" y="0" width="19" height="18" fill="#501616"/><rect x="762" y="0" width="19" height="18" fill="#782121"/><rect x="781" y="0" width="19" height="18" fill="#a02c2c"/><rect x="800" y="0" width="19" height="18" fill="#c83737"/><rect x="819" y="0" width="19" height="18" fill="#d35f5f"/><rect x="838" y="0" width="19" height="18" fill="#de8787"/><rect x="857" y="0" width="19" height="18" fill="#e9afaf"/><rect x="876" y="0" width="19" height="18" fill="#f4d7d7"/><rect x="895" y="0" width="19" height="18" fill="#241c1c"/><rect x="914" y="0" width="19" height="18" fill="#483737"/><rect x="933" y="0" width="19" height="18" fill="#6c5353"/><rect x="952" y="0" width="19" height="18" fill="#916f6f"/><rect x="971" y="0" width="19" height="18" fill="#ac9393"/><rect x="990" y="0" width="19" height="18" fill="#c8b7b7"/><rect x="1009" y="0" width="19" height="18" fill="#e3dbdb"/><rect x="1028" y="0" width="19" height="18" fill="#2b1100"/><rect x="1047" y="0" width="19" height="18" fill="#552200"/><rect x="1066" y="0" width="19" height="18" fill="#803300"/><rect x="1085" y="0" width="19" height="18" fill="#aa4400"/><rect x="1104" y="0" width="19" height="18" fill="#d45500"/><rect x="1123" y="0" width="19" height="18" fill="#ff6600"/><rect x="1142" y="0" width="19" height="18" fill="#ff7f2a"/><rect x="1161" y="0" width="19" height="18" fill="#ff9955"/><rect x="1180" y="0" width="19" height="18" fill="#ffb380"/><rect x="1199" y="0" width="19" height="18" fill="#ffccaa"/><rect x="1218" y="0" width="19" height="18" fill="#ffe6d5"/><rect x="1237" y="0" width="19" height="18" fill="#28170b"/><rect x="1256" y="0" width="19" height="18" fill="#502d16"/><rect x="1275" y="0" width="19" height="18" fill="#784421"/><rect x="1294" y="0" width="19" height="18" fill="#a05a2c"/><rect x="1313" y="0" width="19" height="18" fill="#c87137"/><rect x="1332" y="0" width="19" height="18" fill="#d38d5f"/><rect x="1351" y="0" width="19" height="18" fill="#deaa87"/><rect x="1370" y="0" width="19" height="18" fill="#e9c6af"/><rect x="1389" y="0" width="19" height="18" fill="#f4e3d7"/><rect x="1408" y="0" width="19" height="18" fill="#241f1c"/><rect x="1427" y="0" width="19" height="18" fill="#483e37"/><rect x="1446" y="0" width="19" height="18" fill="#6c5d53"/><rect x="1465" y="0" width="19" height="18" fill="#917c6f"/><rect x="1484" y="0" width="19" height="18" fill="#ac9d93"/><rect x="1503" y="0" width="19" height="18" fill="#c8beb7"/><rect x="1522" y="0" width="19" height="18" fill="#e3dedb"/><rect x="1541" y="0" width="19" height="18" fill="#2b2200"/><rect x="1560" y="0" width="19" height="18" fill="#554400"/><rect x="1579" y="0" width="19" height="18" fill="#806600"/><rect x="1598" y="0" width="19" height="18" fill="#aa8800"/><rect x="1617" y="0" width="19" height="18" fill="#d4aa00"/><rect x="1636" y="0" width="19" height="18" fill="#ffcc00"/><rect x="1655" y="0" width="19" height="18" fill="#ffdd2a"/><rect x="1" y="0" width="20" height="18" fill="#fff"/><path d="M2 1l18 16M20 1L2 17" stroke="#7a1010" stroke-width="1.6"/></svg>
<div style="position:absolute;left:1664px;top:975px;width:16px;height:39px;background:#d4d0c8;box-sizing:border-box;border-top:1px solid #fff;border-left:1px solid #fff;border-right:1px solid #404040;border-bottom:1px solid #404040;box-shadow:inset -1px -1px 0 #808080;"></div>
<svg style="position:absolute;left:1668px;top:983px;" width="8" height="11" viewBox="0 0 8 11"><path d="M7 1v9L1 5.5z" fill="#000"/></svg>
<div style="position:absolute;left:0px;top:998px;width:1645px;height:16px;background:repeating-conic-gradient(#d4d0c8 0 25%,#fbfaf8 0 50%) 0 0/2px 2px;"></div>
<div style="position:absolute;left:0px;top:998px;width:349px;height:16px;background:#d4d0c8;box-sizing:border-box;border-top:1px solid #fff;border-left:1px solid #fff;border-right:1px solid #404040;border-bottom:1px solid #404040;box-shadow:inset -1px -1px 0 #808080;"></div>
<div style="position:absolute;left:1px;top:998px;width:18px;height:16px;background:#d4d0c8;box-sizing:border-box;border-top:1px solid #fff;border-left:1px solid #fff;border-right:1px solid #404040;border-bottom:1px solid #404040;box-shadow:inset -1px -1px 0 #808080;"></div>
<svg style="position:absolute;left:5px;top:1001px;" width="8" height="10" viewBox="0 0 8 10"><path d="M7 1v8L1 5z" fill="#999"/></svg>
<div style="position:absolute;left:1645px;top:998px;width:19px;height:16px;background:#d4d0c8;box-sizing:border-box;border-top:1px solid #fff;border-left:1px solid #fff;border-right:1px solid #404040;border-bottom:1px solid #404040;box-shadow:inset -1px -1px 0 #808080;"></div>
<svg style="position:absolute;left:1651px;top:1001px;" width="8" height="10" viewBox="0 0 8 10"><path d="M1 1v8l6-4z" fill="#000"/></svg>
<div style="position:absolute;left:0px;top:1014px;width:1680px;height:36px;background:#d4d0c8"></div>
<div style="position:absolute;left:2px;top:1017px;font-size:12px;line-height:12px;color:#000;font-weight:normal;white-space:pre;transform:scaleX(0.9088);transform-origin:0 0;">Заливка:</div>
<div style="position:absolute;left:78px;top:1017px;font-size:12px;line-height:12px;color:#000;font-weight:normal;white-space:pre;transform:scaleX(0.9441);transform-origin:0 0;">Н/Д</div>
<div style="position:absolute;left:2px;top:1033px;font-size:12px;line-height:12px;color:#000;font-weight:normal;white-space:pre;transform:scaleX(0.9151);transform-origin:0 0;">Обводка:</div>
<div style="position:absolute;left:55px;top:1031px;width:36px;height:19px;background:linear-gradient(#dce8f2,#a8c0d4);border-radius:0 3px 3px 0"></div>
<div style="position:absolute;left:55px;top:1033px;font-size:14px;line-height:14px;color:#3a5a7a;font-weight:bold;white-space:pre;transform:scaleX(1.0357);transform-origin:0 0;clip-path:inset(0 0 0 3px)">ƎRT</div>
<div style="position:absolute;left:92px;top:1031px;width:31px;height:19px;background:linear-gradient(90deg,#c8d8e8,#9ccaf0)"></div>
<svg style="position:absolute;left:92px;top:1031px;" width="31" height="19" viewBox="0 0 31 19"><path d="M4 0l12 14q2 3 8 5" fill="none" stroke="#2a5a88" stroke-width="2"/><path d="M30 2v17" stroke="#e87a20" stroke-width="2"/></svg>
<div style="position:absolute;left:126px;top:1024px;font-size:13px;line-height:13px;color:#000;font-weight:normal;white-space:pre;transform:scaleX(0.9231);transform-origin:0 0;">Н:</div>
<div style="position:absolute;left:140px;top:1020px;width:26px;height:23px;background:#d4d0c8;box-sizing:border-box;border-top:1px solid #808080;border-left:1px solid #808080;border-right:1px solid #fff;border-bottom:1px solid #fff;box-shadow:inset 1px 1px 0 #404040;"></div>
<div style="position:absolute;left:143px;top:1025.5px;font-size:13px;line-height:13px;color:#8e8e8e;font-weight:normal;white-space:pre;width:22px;overflow:hidden;letter-spacing:-0.2px"></div>
<div style="position:absolute;left:166px;top:1020px;width:11px;height:11px;background:#d4d0c8;box-sizing:border-box;border-top:1px solid #fff;border-left:1px solid #fff;border-right:1px solid #404040;border-bottom:1px solid #404040;box-shadow:inset -1px -1px 0 #808080;"></div>
<div style="position:absolute;left:166px;top:1031px;width:11px;height:12px;background:#d4d0c8;box-sizing:border-box;border-top:1px solid #fff;border-left:1px solid #fff;border-right:1px solid #404040;border-bottom:1px solid #404040;box-shadow:inset -1px -1px 0 #808080;"></div>
<svg style="position:absolute;left:169px;top:1023px;" width="6" height="4" viewBox="0 0 6 4"><path d="M0 4L3 1 6 4z" fill="#888"/></svg>
<svg style="position:absolute;left:169px;top:1036px;" width="6" height="4" viewBox="0 0 6 4"><path d="M0 0L3 3 6 0z" fill="#888"/></svg>
<div style="position:absolute;left:144px;top:1026px;font-size:12px;line-height:12px;color:#8a8a8a;font-weight:normal;white-space:pre;transform:scaleX(0.8993);transform-origin:0 0;">100</div>
<div style="position:absolute;left:180px;top:1016px;width:1px;height:34px;background:#a0a0a0;box-shadow:1px 0 0 #fff"></div>
<svg style="position:absolute;left:185px;top:1022px;" width="19" height="17" viewBox="0 0 19 17"><path d="M1 9q8-8 17 0q-8 8-17 0z" fill="#fff" stroke="#000" stroke-width="1.5"/><circle cx="9.5" cy="9" r="3.5" fill="#000"/><path d="M3 5l-1-3M7 3l-1-3M12 3l1-3M16 5l1-3" stroke="#000" stroke-width="1.2"/></svg>
<svg style="position:absolute;left:207px;top:1021px;" width="16" height="19" viewBox="0 0 16 19"><rect x="2" y="9" width="12" height="9" fill="#f0e060" stroke="#000" stroke-width="1.2"/><path d="M5 9V5a3.5 3.5 0 017 0" fill="none" stroke="#000" stroke-width="1.5"/><rect x="7" y="12" width="2" height="3" fill="#000"/></svg>
<div style="position:absolute;left:228px;top:1016px;width:118px;height:32px;background:#dce8f4;box-sizing:border-box;border-top:1px solid #808080;border-left:1px solid #808080;border-right:1px solid #fff;border-bottom:1px solid #fff;box-shadow:inset 1px 1px 0 #404040;"></div>
<div style="position:absolute;left:318px;top:1018px;width:26px;height:28px;background:#d4d0c8;box-sizing:border-box;border-top:1px solid #fff;border-left:1px solid #fff;border-right:1px solid #404040;border-bottom:1px solid #404040;box-shadow:inset -1px -1px 0 #808080;"></div>
<svg style="position:absolute;left:325px;top:1028px;" width="12" height="7" viewBox="0 0 12 7"><path d="M1 1h10L6 6z" fill="#000"/></svg>
<div style="position:absolute;left:235px;top:1022px;font-size:17px;line-height:17px;color:#000;font-weight:bold;white-space:pre;transform:scaleX(1.0079);transform-origin:0 0;">•</div>
<div style="position:absolute;left:242px;top:1022px;font-size:19px;line-height:19px;color:#000;font-weight:bold;white-space:pre;transform:scaleX(0.9018);transform-origin:0 0;">Layer 1</div>
<div style="position:absolute;left:353.5px;top:1022px;font-size:19px;line-height:19px;color:#000;font-weight:normal;white-space:pre;transform:scaleX(1.0005);transform-origin:0 0;">Нет выделенных объектов. Используйте щелчок, Sl</div>
<div style="position:absolute;left:1518px;top:1016px;width:1px;height:34px;background:#a0a0a0;box-shadow:1px 0 0 #fff"></div>
<div style="position:absolute;left:1521px;top:1016px;font:11.5px/14px 'Liberation Mono',monospace;color:#000;white-space:pre;transform:scaleX(0.884);transform-origin:0 0">X: 1361,84
Y: -621,00</div>
<div style="position:absolute;left:1592px;top:1022px;font-size:13px;line-height:13px;color:#000;font-weight:normal;white-space:pre;">Z:</div>
<div style="position:absolute;left:1604px;top:1018px;width:45px;height:21px;background:#dce8f4;box-sizing:border-box;border-top:1px solid #808080;border-left:1px solid #808080;border-right:1px solid #fff;border-bottom:1px solid #fff;box-shadow:inset 1px 1px 0 #404040;"></div>
<div style="position:absolute;left:1613px;top:1022px;font-size:13px;line-height:13px;color:#000;font-weight:normal;white-space:pre;transform:scaleX(0.8836);transform-origin:0 0;">37%</div>
<div style="position:absolute;left:1649px;top:1018px;width:11px;height:11px;background:#d4d0c8;box-sizing:border-box;border-top:1px solid #fff;border-left:1px solid #fff;border-right:1px solid #404040;border-bottom:1px solid #404040;box-shadow:inset -1px -1px 0 #808080;"></div>
<div style="position:absolute;left:1649px;top:1029px;width:11px;height:11px;background:#d4d0c8;box-sizing:border-box;border-top:1px solid #fff;border-left:1px solid #fff;border-right:1px solid #404040;border-bottom:1px solid #404040;box-shadow:inset -1px -1px 0 #808080;"></div>
<svg style="position:absolute;left:1651px;top:1021px;" width="7" height="16" viewBox="0 0 7 16"><path d="M0.5 3.5l3-3 3 3zM0.5 12.5l3 3 3-3z" fill="#000"/></svg>
<svg style="position:absolute;left:1664px;top:1034px;" width="16" height="16" viewBox="0 0 16 16"><path d="M15 3L3 15M15 7l-8 8M15 11l-4 4" stroke="#fff" stroke-width="1"/><path d="M15 4L4 15M15 8l-7 7M15 12l-3 3" stroke="#808080" stroke-width="1"/></svg>
<div style="position:absolute;left:807px;top:639px;width:532px;height:411px;background:#d4d0c8;box-sizing:border-box;border-left:1px solid #f4f4f4;border-top:1px solid #f4f4f4;border-right:1px solid #404040;box-shadow:inset -1px 0 0 #808080, inset 1px 1px 0 #dfdfdf"></div>
<div style="position:absolute;left:810px;top:642px;width:524px;height:26px;background:linear-gradient(90deg,#ff0000 0%,#ff3000 18%,#ff7a00 45%,#ffb000 65%,#ffe000 85%,#ffff00 100%)"></div>
<svg style="position:absolute;left:814px;top:645px;" width="21" height="21" viewBox="0 0 21 21"><g transform="scale(1.15)"><path d="M9 1L1 10q1 1 3 1l1 2 2-1 1 3 2 1 1-3 2 1 1-2 2 1 3-3z" fill="#101820"/><path d="M9 2.5L3 9.3q2 .8 4 .2l2-3 2 2 3-1 2 1.5z" fill="#e8e8e8"/><path d="M9 2.5l-2 5 1 2 2-3z" fill="#9a9080"/><circle cx="5" cy="14" r="1.1" fill="#101820"/><circle cx="14.5" cy="13.5" r="1" fill="#101820"/><path d="M7 13q1 4 3 4 2 0 2-4" fill="#101820"/></g></svg>
<div style="position:absolute;left:837px;top:646px;font-size:20px;line-height:20px;color:#fff;font-weight:bold;white-space:pre;transform:scaleX(0.9842);transform-origin:0 0;">Unordinary gears</div>
<div style="position:absolute;left:1310px;top:645px;width:23px;height:21px;background:#d4d0c8;box-sizing:border-box;border-top:1px solid #fff;border-left:1px solid #fff;border-right:1px solid #404040;border-bottom:1px solid #404040;box-shadow:inset -1px -1px 0 #808080;"></div>
<svg style="position:absolute;left:1314px;top:649px;" width="15" height="13" viewBox="0 0 15 13"><path d="M2 1l11 11M13 1L2 12" stroke="#000" stroke-width="2"/></svg>
<div style="position:absolute;left:818px;top:681px;width:83px;height:32px;box-sizing:border-box;border-top:1px solid #fff;border-left:1px solid #fff;border-right:1px solid #808080;background:#d4d0c8"></div>
<div style="position:absolute;left:824px;top:688px;font-size:19px;line-height:19px;color:#000;font-weight:normal;white-space:pre;transform:scaleX(0.9528);transform-origin:0 0;">Справка</div>
<div style="position:absolute;left:901px;top:679px;width:154px;height:34px;box-sizing:border-box;border-top:1px solid #fff;border-left:1px solid #fff;border-right:2px solid #404040;background:#d4d0c8"></div>
<div style="position:absolute;left:906px;top:687px;font-size:19px;line-height:19px;color:#000;font-weight:normal;white-space:pre;transform:scaleX(0.9883);transform-origin:0 0;">Unordinary gears</div>
<div style="position:absolute;left:818px;top:712px;width:510px;height:338px;box-sizing:border-box;border-top:1px solid #fff;border-left:1px solid #fff;border-right:2px solid #404040"></div>
<div style="position:absolute;left:902px;top:712px;width:152px;height:1px;background:#d4d0c8"></div>
<div style="position:absolute;left:982px;top:723.5px;font-size:19px;line-height:19px;color:#000;font-weight:normal;white-space:pre;transform:scaleX(0.9941);transform-origin:0 0;">Pulley&#39;s teeth number</div>
<div style="position:absolute;left:825px;top:753px;font-size:19px;line-height:19px;color:#000;font-weight:normal;white-space:pre;transform:scaleX(0.9923);transform-origin:0 0;">Selected pulley teeth</div>
<div style="position:absolute;left:825px;top:788px;font-size:19px;line-height:19px;color:#000;font-weight:normal;white-space:pre;transform:scaleX(0.9937);transform-origin:0 0;">Generated pulley teeth</div>
<div style="position:absolute;left:825px;top:823px;font-size:19px;line-height:19px;color:#000;font-weight:normal;white-space:pre;transform:scaleX(0.9941);transform-origin:0 0;">Number of copies</div>
<div style="position:absolute;left:825px;top:859px;font-size:19px;line-height:19px;color:#000;font-weight:normal;white-space:pre;transform:scaleX(0.9894);transform-origin:0 0;">Center to center distance</div>
<div style="position:absolute;left:825px;top:891px;font-size:19px;line-height:19px;color:#000;font-weight:normal;white-space:pre;transform:scaleX(1.0011);transform-origin:0 0;">Turning speed depends on local radius</div>
<div style="position:absolute;left:825px;top:918px;font-size:19px;line-height:19px;color:#000;font-weight:normal;white-space:pre;transform:scaleX(0.9956);transform-origin:0 0;">Optimize center to center distance</div>
<div style="position:absolute;left:825px;top:945px;font-size:19px;line-height:19px;color:#000;font-weight:normal;white-space:pre;transform:scaleX(0.9865);transform-origin:0 0;">Create linear gear</div>
<div style="position:absolute;left:825px;top:975.5px;font-size:19px;line-height:19px;color:#000;font-weight:normal;white-space:pre;transform:scaleX(0.9662);transform-origin:0 0;">Revolutions:</div>
<div style="position:absolute;left:825px;top:1013px;font-size:19px;line-height:19px;color:#000;font-weight:normal;white-space:pre;transform:scaleX(1.0003);transform-origin:0 0;">Единица измерения:</div>
<div style="position:absolute;left:1264px;top:748px;width:39px;height:30px;background:#d4e4f4;box-sizing:border-box;border-top:1px solid #808080;border-left:1px solid #808080;border-right:1px solid #fff;border-bottom:1px solid #fff;box-shadow:inset 1px 1px 0 #404040;"></div>
<div style="position:absolute;left:1268px;top:754px;font-size:19px;line-height:19px;color:#000;font-weight:normal;white-space:pre;">3</div>
<div style="position:absolute;left:1303px;top:748px;width:17px;height:15px;background:#d4d0c8;box-sizing:border-box;border-top:1px solid #fff;border-left:1px solid #fff;border-right:1px solid #404040;border-bottom:1px solid #404040;box-shadow:inset -1px -1px 0 #808080;"></div>
<div style="position:absolute;left:1303px;top:763px;width:17px;height:15px;background:#d4d0c8;box-sizing:border-box;border-top:1px solid #fff;border-left:1px solid #fff;border-right:1px solid #404040;border-bottom:1px solid #404040;box-shadow:inset -1px -1px 0 #808080;"></div>
<svg style="position:absolute;left:1308px;top:752px;" width="7" height="5" viewBox="0 0 7 5"><path d="M0 4L3.5 0 7 4z" fill="#000"/></svg>
<svg style="position:absolute;left:1308px;top:769px;" width="7" height="5" viewBox="0 0 7 5"><path d="M0 0l3.5 4L7 0z" fill="#000"/></svg>
<div style="position:absolute;left:1264px;top:783px;width:39px;height:30px;background:#d4e4f4;box-sizing:border-box;border-top:1px solid #808080;border-left:1px solid #808080;border-right:1px solid #fff;border-bottom:1px solid #fff;box-shadow:inset 1px 1px 0 #404040;"></div>
<div style="position:absolute;left:1268px;top:789px;font-size:19px;line-height:19px;color:#000;font-weight:normal;white-space:pre;">2</div>
<div style="position:absolute;left:1303px;top:783px;width:17px;height:15px;background:#d4d0c8;box-sizing:border-box;border-top:1px solid #fff;border-left:1px solid #fff;border-right:1px solid #404040;border-bottom:1px solid #404040;box-shadow:inset -1px -1px 0 #808080;"></div>
<div style="position:absolute;left:1303px;top:798px;width:17px;height:15px;background:#d4d0c8;box-sizing:border-box;border-top:1px solid #fff;border-left:1px solid #fff;border-right:1px solid #404040;border-bottom:1px solid #404040;box-shadow:inset -1px -1px 0 #808080;"></div>
<svg style="position:absolute;left:1308px;top:787px;" width="7" height="5" viewBox="0 0 7 5"><path d="M0 4L3.5 0 7 4z" fill="#000"/></svg>
<svg style="position:absolute;left:1308px;top:804px;" width="7" height="5" viewBox="0 0 7 5"><path d="M0 0l3.5 4L7 0z" fill="#000"/></svg>
<div style="position:absolute;left:1255px;top:818px;width:48px;height:30px;background:#d4e4f4;box-sizing:border-box;border-top:1px solid #808080;border-left:1px solid #808080;border-right:1px solid #fff;border-bottom:1px solid #fff;box-shadow:inset 1px 1px 0 #404040;"></div>
<div style="position:absolute;left:1259px;top:824px;font-size:19px;line-height:19px;color:#000;font-weight:normal;white-space:pre;">200</div>
<div style="position:absolute;left:1303px;top:818px;width:17px;height:15px;background:#d4d0c8;box-sizing:border-box;border-top:1px solid #fff;border-left:1px solid #fff;border-right:1px solid #404040;border-bottom:1px solid #404040;box-shadow:inset -1px -1px 0 #808080;"></div>
<div style="position:absolute;left:1303px;top:833px;width:17px;height:15px;background:#d4d0c8;box-sizing:border-box;border-top:1px solid #fff;border-left:1px solid #fff;border-right:1px solid #404040;border-bottom:1px solid #404040;box-shadow:inset -1px -1px 0 #808080;"></div>
<svg style="position:absolute;left:1308px;top:822px;" width="7" height="5" viewBox="0 0 7 5"><path d="M0 4L3.5 0 7 4z" fill="#000"/></svg>
<svg style="position:absolute;left:1308px;top:839px;" width="7" height="5" viewBox="0 0 7 5"><path d="M0 0l3.5 4L7 0z" fill="#000"/></svg>
<div style="position:absolute;left:1184px;top:853px;width:119px;height:30px;background:#d4e4f4;box-sizing:border-box;border-top:1px solid #808080;border-left:1px solid #808080;border-right:1px solid #fff;border-bottom:1px solid #fff;box-shadow:inset 1px 1px 0 #404040;"></div>
<div style="position:absolute;left:1188px;top:859px;font-size:19px;line-height:19px;color:#000;font-weight:normal;white-space:pre;">30,00000</div>
<div style="position:absolute;left:1303px;top:853px;width:17px;height:15px;background:#d4d0c8;box-sizing:border-box;border-top:1px solid #fff;border-left:1px solid #fff;border-right:1px solid #404040;border-bottom:1px solid #404040;box-shadow:inset -1px -1px 0 #808080;"></div>
<div style="position:absolute;left:1303px;top:868px;width:17px;height:15px;background:#d4d0c8;box-sizing:border-box;border-top:1px solid #fff;border-left:1px solid #fff;border-right:1px solid #404040;border-bottom:1px solid #404040;box-shadow:inset -1px -1px 0 #808080;"></div>
<svg style="position:absolute;left:1308px;top:857px;" width="7" height="5" viewBox="0 0 7 5"><path d="M0 4L3.5 0 7 4z" fill="#000"/></svg>
<svg style="position:absolute;left:1308px;top:874px;" width="7" height="5" viewBox="0 0 7 5"><path d="M0 0l3.5 4L7 0z" fill="#000"/></svg>
<div style="position:absolute;left:1302px;top:893px;width:13px;height:13px;box-sizing:border-box;border:1px solid #fff;border-top:2px solid #333;border-left:2px solid #333;background:#d8e6f4"></div>
<div style="position:absolute;left:1302px;top:920px;width:13px;height:13px;box-sizing:border-box;border:1px solid #fff;border-top:2px solid #333;border-left:2px solid #333;background:#d8e6f4"></div>
<div style="position:absolute;left:1302px;top:947px;width:13px;height:13px;box-sizing:border-box;border:1px solid #fff;border-top:2px solid #333;border-left:2px solid #333;background:#d8e6f4"></div>
<svg style="position:absolute;left:1303px;top:948px;" width="11" height="11" viewBox="0 0 11 11"><path d="M2 5l2.5 3L9 2" fill="none" stroke="#000" stroke-width="1.6"/></svg>
<div style="position:absolute;left:1255px;top:970px;width:48px;height:30px;background:#d4e4f4;box-sizing:border-box;border-top:1px solid #808080;border-left:1px solid #808080;border-right:1px solid #fff;border-bottom:1px solid #fff;box-shadow:inset 1px 1px 0 #404040;"></div>
<div style="position:absolute;left:1259px;top:976px;font-size:19px;line-height:19px;color:#000;font-weight:normal;white-space:pre;">2,0</div>
<div style="position:absolute;left:1303px;top:970px;width:17px;height:15px;background:#d4d0c8;box-sizing:border-box;border-top:1px solid #fff;border-left:1px solid #fff;border-right:1px solid #404040;border-bottom:1px solid #404040;box-shadow:inset -1px -1px 0 #808080;"></div>
<div style="position:absolute;left:1303px;top:985px;width:17px;height:15px;background:#d4d0c8;box-sizing:border-box;border-top:1px solid #fff;border-left:1px solid #fff;border-right:1px solid #404040;border-bottom:1px solid #404040;box-shadow:inset -1px -1px 0 #808080;"></div>
<svg style="position:absolute;left:1308px;top:974px;" width="7" height="5" viewBox="0 0 7 5"><path d="M0 4L3.5 0 7 4z" fill="#000"/></svg>
<svg style="position:absolute;left:1308px;top:991px;" width="7" height="5" viewBox="0 0 7 5"><path d="M0 0l3.5 4L7 0z" fill="#000"/></svg>
<div style="position:absolute;left:1013px;top:1005px;width:306px;height:45px;background:#d4e4f4;box-sizing:border-box;border-top:1px solid #808080;border-left:1px solid #808080;border-right:1px solid #fff;border-bottom:1px solid #fff;box-shadow:inset 1px 1px 0 #404040;"></div>
<div style="position:absolute;left:1019px;top:1013px;font-size:19px;line-height:19px;color:#000;font-weight:normal;white-space:pre;">mm</div>
<div style="position:absolute;left:1291px;top:1007px;width:26px;height:40px;background:#d4d0c8;box-sizing:border-box;border-top:1px solid #fff;border-left:1px solid #fff;border-right:1px solid #404040;border-bottom:1px solid #404040;box-shadow:inset -1px -1px 0 #808080;"></div>
<svg style="position:absolute;left:1298px;top:1018px;" width="11" height="7" viewBox="0 0 11 7"><path d="M0 0h11L5.5 6z" fill="#000"/></svg>
<div style="position:absolute;left:808px;top:1027px;width:528px;height:23px;background:linear-gradient(#e8f0f8,#c8d8e8 30%,#b8cce0)"></div>
<div style="position:absolute;left:808px;top:1027px;width:528px;height:1px;background:#f8fbff"></div>
<div style="position:absolute;left:809px;top:1029px;width:62px;height:20px;background:linear-gradient(#b8e0fc,#9ccef4 50%,#8cc4f0);border:1px solid #4a7aa8;border-radius:3px;box-sizing:border-box;box-shadow:inset 0 1px 0 #e0f4ff"></div>
<div style="position:absolute;left:812px;top:1032px;font-size:14px;line-height:14px;color:#6a98bc;font-weight:bold;white-space:pre;transform:scaleX(0.9500);transform-origin:0 0;">ок №47...</div>
<div style="position:absolute;left:877px;top:1029px;width:104px;height:20px;background:linear-gradient(#b8e0fc,#9ccef4 50%,#8cc4f0);border:1px solid #4a7aa8;border-radius:3px;box-sizing:border-box;box-shadow:inset 0 1px 0 #e0f4ff"></div>
<svg style="position:absolute;left:881px;top:1030px;" width="18" height="18" viewBox="0 0 18 18"><ellipse cx="9" cy="9" rx="7" ry="8" fill="none" stroke="#d81020" stroke-width="4"/></svg>
<div style="position:absolute;left:901px;top:1032px;font-size:14px;line-height:14px;color:#1a3a5a;font-weight:bold;white-space:pre;transform:scaleX(0.9500);transform-origin:0 0;">cnc-club.ru...</div>
<div style="position:absolute;left:986px;top:1029px;width:104px;height:20px;background:linear-gradient(#b8e0fc,#9ccef4 50%,#8cc4f0);border:1px solid #4a7aa8;border-radius:3px;box-sizing:border-box;box-shadow:inset 0 1px 0 #e0f4ff"></div>
<svg style="position:absolute;left:990px;top:1030px;" width="20" height="18" viewBox="0 0 20 18"><path d="M1 4h6l2 2h9v11H1z" fill="#f0d870" stroke="#8a7020"/></svg>
<div style="position:absolute;left:1013px;top:1032px;font-size:14px;line-height:14px;color:#6a98bc;font-weight:bold;white-space:pre;transform:scaleX(0.9500);transform-origin:0 0;">extensions</div>
<div style="position:absolute;left:1096px;top:1029px;width:109px;height:20px;background:linear-gradient(#b8e0fc,#9ccef4 50%,#8cc4f0);border:1px solid #4a7aa8;border-radius:3px;box-sizing:border-box;box-shadow:inset 0 1px 0 #e0f4ff"></div>
<svg style="position:absolute;left:1100px;top:1030px;" width="18" height="18" viewBox="0 0 18 18"><path d="M9 1L1 10q1 1 3 1l1 2 2-1 1 3 2 1 1-3 2 1 1-2 2 1 3-3z" fill="#101820"/><path d="M9 2.5L3 9.3q2 .8 4 .2l2-3 2 2 3-1 2 1.5z" fill="#e8e8e8"/><path d="M9 2.5l-2 5 1 2 2-3z" fill="#9a9080"/><circle cx="5" cy="14" r="1.1" fill="#101820"/><circle cx="14.5" cy="13.5" r="1" fill="#101820"/><path d="M7 13q1 4 3 4 2 0 2-4" fill="#101820"/></svg>
<div style="position:absolute;left:1121px;top:1032px;font-size:14px;line-height:14px;color:#3a6a8a;font-weight:bold;white-space:pre;transform:scaleX(0.9500);transform-origin:0 0;">Новый док...</div>
<svg style="position:absolute;left:1214px;top:1030px;" width="120" height="20" viewBox="0 0 120 20"><path d="M10 4v11L3 9.5z" fill="#333"/><path d="M27 2l7 3v6c0 4-3 6-7 8-4-2-7-4-7-8V5z" fill="#c8202a" stroke="#801018"/><path d="M24 8l6 6M30 8l-6 6" stroke="#fff" stroke-width="1.5"/><path d="M40 4l10 2-2 10-8-3z" fill="#9ab8d8"/><circle cx="50" cy="13" r="4" fill="#3aa040"/><circle cx="73" cy="10" r="6" fill="#8a98a8"/><path d="M65 6h12l-3 4" fill="#2a2a2a"/><rect x="84" y="2" width="18" height="17" fill="#d02028"/><path d="M88 16l6-11 6 11M91 11c3 0 6 1 8 3" fill="none" stroke="#fff" stroke-width="1.6"/><path d="M106 9h12M112 3v14M108 6h8M108 13h8" stroke="#222" stroke-width="1.3"/><circle cx="117" cy="10" r="2.5" fill="#e8d020"/></svg>
</body></html>
